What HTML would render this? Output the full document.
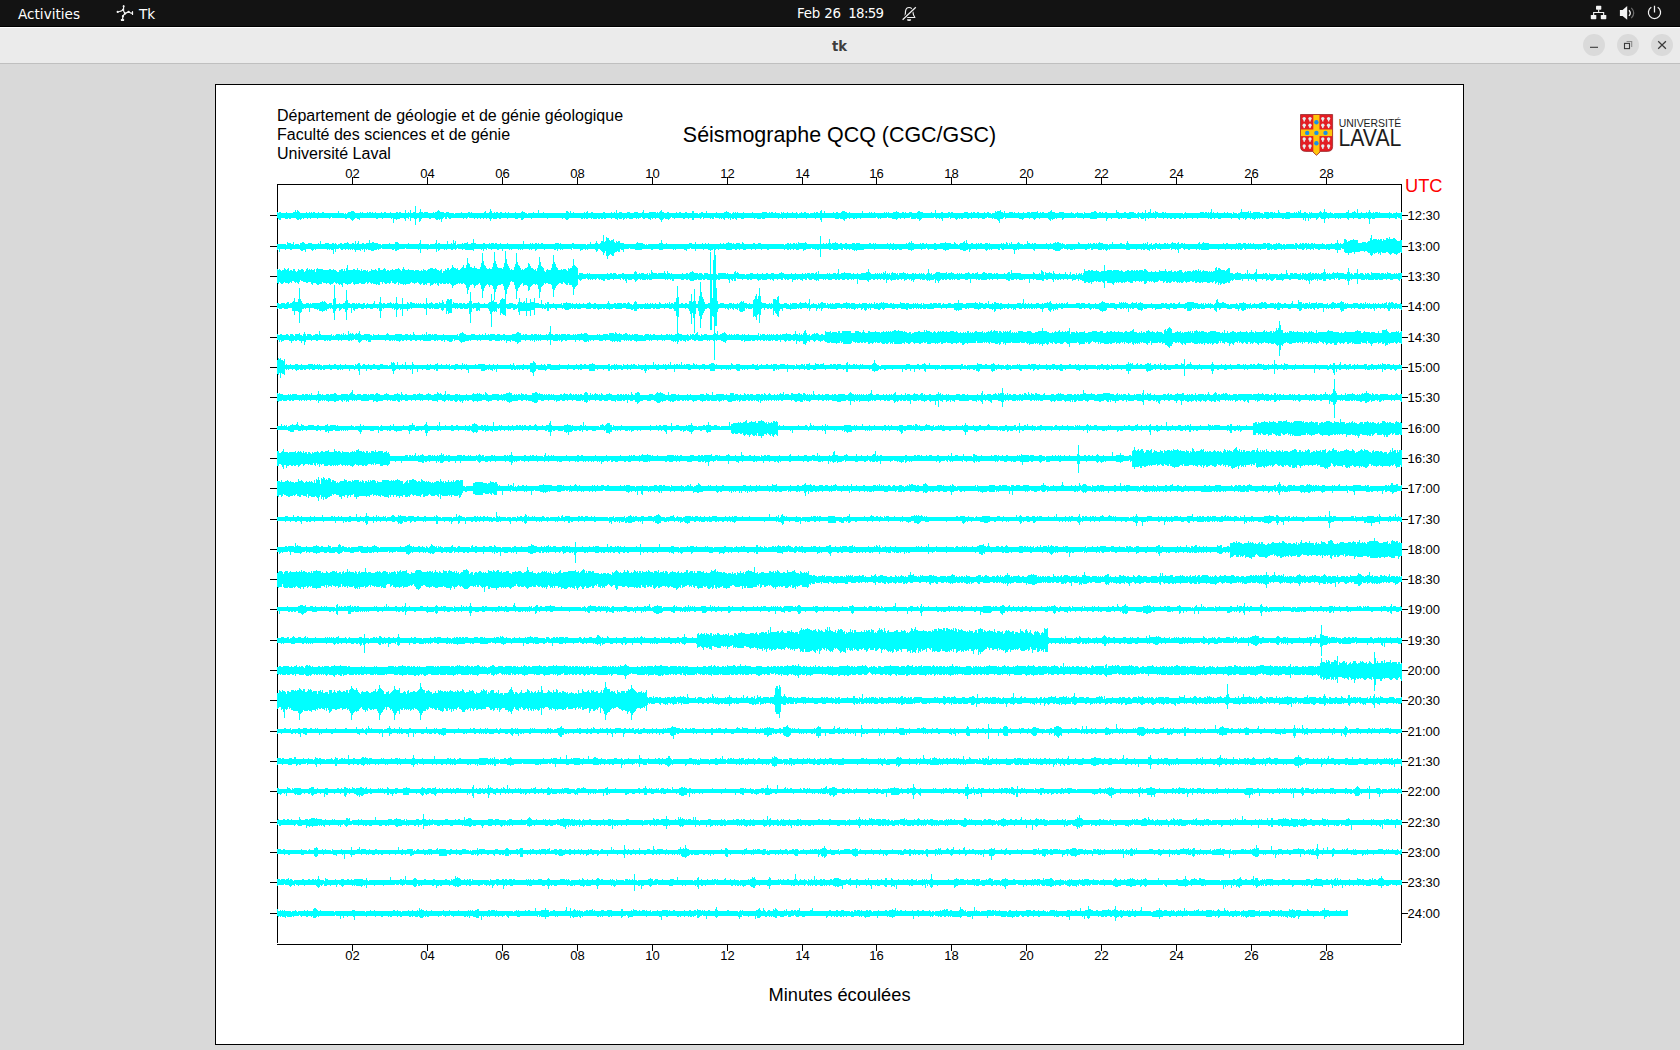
<!DOCTYPE html>
<html lang="fr">
<head>
<meta charset="utf-8">
<title>tk</title>
<style>
html,body{margin:0;padding:0;}
body{width:1680px;height:1050px;overflow:hidden;background:#d9d9d9;position:relative;font-family:"Liberation Sans",sans-serif;}
#topbar{position:absolute;left:0;top:0;width:1680px;height:26px;border-bottom:1px solid #000;background:#131313;color:#fff;font-family:"DejaVu Sans","Liberation Sans",sans-serif;font-size:13.6px;}
#topbar span{position:absolute;top:0;line-height:27px;white-space:pre;}
#titlebar{position:absolute;left:0;top:27px;width:1680px;height:35px;background:#ebebeb;border-top:1px solid #fff;border-bottom:1px solid #bfbfbf;}
#titlebar .t{position:absolute;left:0;width:1679px;top:1px;line-height:36px;text-align:center;font-family:"DejaVu Sans","Liberation Sans",sans-serif;font-weight:bold;font-size:13.2px;color:#3d3d3d;}
.wb{position:absolute;top:6px;width:22px;height:22px;border-radius:11px;background:#dadada;}
#canvas{position:absolute;left:215px;top:84px;width:1247px;height:959px;border:1px solid #000;background:#fff;}
#plot{position:absolute;left:0;top:0;width:1680px;height:1050px;}
.hd{position:absolute;left:277px;font-size:16px;line-height:19px;color:#000;white-space:pre;}
</style>
</head>
<body>
<div id="topbar">
<span style="left:18px;top:1px">Activities</span>
<span style="left:139px;top:1px">Tk</span>
<span style="left:797px;top:-0.5px;font-size:13.4px;letter-spacing:-0.19px">Feb 26</span><span style="left:848.2px;top:-0.5px;font-size:13.4px;letter-spacing:-0.66px">18:59</span>
</div>
<div id="titlebar"><div class="t">tk</div>
<div class="wb" style="left:1583px"></div><div class="wb" style="left:1617px"></div><div class="wb" style="left:1651px"></div>
</div>
<div id="canvas"></div>
<div class="hd" style="top:106px">Département de géologie et de génie géologique</div>
<div class="hd" style="top:125px">Faculté des sciences et de génie</div>
<div class="hd" style="top:144px">Université Laval</div>
<svg id="plot" width="1680" height="1050" viewBox="0 0 1680 1050">
<g fill="none" stroke="#000" stroke-width="1" shape-rendering="crispEdges">
<path d="M277.5 184V943M277 184.5H1402M1401.5 184V943M277 944.5H1401"/>
<path d="M352.5 177V185M352.5 944V951"/>
<path d="M427.5 177V185M427.5 944V951"/>
<path d="M502.5 177V185M502.5 944V951"/>
<path d="M577.5 177V185M577.5 944V951"/>
<path d="M652.5 177V185M652.5 944V951"/>
<path d="M727.5 177V185M727.5 944V951"/>
<path d="M802.5 177V185M802.5 944V951"/>
<path d="M876.5 177V185M876.5 944V951"/>
<path d="M951.5 177V185M951.5 944V951"/>
<path d="M1026.5 177V185M1026.5 944V951"/>
<path d="M1101.5 177V185M1101.5 944V951"/>
<path d="M1176.5 177V185M1176.5 944V951"/>
<path d="M1251.5 177V185M1251.5 944V951"/>
<path d="M1326.5 177V185M1326.5 944V951"/>
<path d="M270 215.5H277M1402 215.5H1408"/>
<path d="M270 246.5H277M1402 246.5H1408"/>
<path d="M270 276.5H277M1402 276.5H1408"/>
<path d="M270 306.5H277M1402 306.5H1408"/>
<path d="M270 337.5H277M1402 337.5H1408"/>
<path d="M270 367.5H277M1402 367.5H1408"/>
<path d="M270 397.5H277M1402 397.5H1408"/>
<path d="M270 428.5H277M1402 428.5H1408"/>
<path d="M270 458.5H277M1402 458.5H1408"/>
<path d="M270 488.5H277M1402 488.5H1408"/>
<path d="M270 519.5H277M1402 519.5H1408"/>
<path d="M270 549.5H277M1402 549.5H1408"/>
<path d="M270 579.5H277M1402 579.5H1408"/>
<path d="M270 609.5H277M1402 609.5H1408"/>
<path d="M270 640.5H277M1402 640.5H1408"/>
<path d="M270 670.5H277M1402 670.5H1408"/>
<path d="M270 700.5H277M1402 700.5H1408"/>
<path d="M270 731.5H277M1402 731.5H1408"/>
<path d="M270 761.5H277M1402 761.5H1408"/>
<path d="M270 791.5H277M1402 791.5H1408"/>
<path d="M270 822.5H277M1402 822.5H1408"/>
<path d="M270 852.5H277M1402 852.5H1408"/>
<path d="M270 882.5H277M1402 882.5H1408"/>
<path d="M270 913.5H277M1402 913.5H1408"/>
</g>
<g fill="#00ffff" shape-rendering="crispEdges">
<path d="M277 215v-3h1v1h1v-1h2v1h5v-1h1v1h6v-1h2v-2h1v2h1v-2h1v1h1v1h1v1h6v-1h1v1h2v-1h1v1h1v-1h1v1h1v-1h2v1h3v-1h1v1h3v-1h2v1h14v-2h1v2h5v1h1v-1h1v1h1v-1h1v-1h3v-1h3v1h1v1h5v-1h1v1h1v-1h1v1h4v-1h1v1h1v-1h2v1h1v-1h1v1h2v-1h1v1h5v-1h1v1h2v-1h2v1h4v-1h1v1h5v-1h2v1h1v-1h2v1h4v-3h1v3h2v-1h1v1h1v-3h1v3h2v-1h2v-6h1v7h3v-1h1v-3h1v3h2v1h1v-1h4v1h5v-1h1v1h1v-1h2v-1h1v-1h1v1h1v1h4v1h2v-1h3v1h5v1h1v-1h6v-1h1v1h6v-1h2v1h1v-1h1v1h12v-1h1v-1h1v2h3v-1h1v-3h1v2h1v2h2v-1h1v1h1v-1h2v1h2v-1h2v1h3v-1h1v1h2v-1h1v1h6v-1h1v1h5v-1h1v-1h1v1h2v1h2v1h1v-1h5v-1h1v1h4v-3h1v3h4v-1h1v1h22v-2h2v1h1v1h1v-2h1v2h2v-1h1v1h10v-1h1v1h1v-1h1v-1h1v2h3v-1h2v1h10v-1h2v1h6v-1h1v1h2v-1h1v1h1v-3h1v3h2v-1h3v1h5v-1h3v1h4v-1h4v1h4v-1h1v-2h1v3h5v-1h7v1h1v-1h1v1h1v-1h1v-1h1v-1h1v2h2v1h3v-1h2v1h7v-1h1v1h2v-1h2v1h4v-1h2v1h5v-2h2v2h4v1h1v-1h2v-1h2v1h3v-2h1v2h9v-1h1v1h7v-1h2v-1h1v1h2v1h2v1h1v-1h1v-1h1v1h1v-1h1v1h1v-1h1v1h5v-1h1v1h8v-1h1v1h9v-1h5v1h2v-1h1v1h1v-1h2v1h2v-1h1v1h4v1h1v-2h1v1h1v-1h1v1h3v-1h1v1h4v-1h1v1h3v-1h1v1h1v1h1v-1h2v-1h1v1h2v-1h2v1h3v1h1v-1h4v-1h1v1h1v-1h2v1h2v-2h1v-1h1v3h2v-2h1v2h8v-1h1v1h2v-1h2v1h3v-1h1v-1h3v1h2v1h2v-1h1v1h12v-2h1v2h6v-1h1v1h1v-1h1v1h2v-1h1v1h9v-1h1v1h1v-1h1v1h1v-1h1v1h4v-1h3v-1h1v1h2v1h3v-1h2v1h1v-1h1v1h3v-1h3v1h5v-1h1v-1h2v1h3v1h8v-1h1v1h3v-3h1v3h5v-1h2v1h5v-1h2v1h1v-1h2v1h11v-1h4v1h3v-1h1v1h1v-1h2v1h2v-1h2v1h5v-1h1v1h2v-1h2v1h2v1h1v-1h3v-2h1v1h1v-1h3v-1h1v2h2v1h1v-2h1v2h4v-1h4v1h1v-1h1v1h3v-1h1v1h4v-1h1v1h3v-1h3v1h1v-1h6v-1h1v2h2v-1h1v1h1v-1h2v1h4v-1h2v-1h1v-1h1v2h3v1h4v-1h5v1h7v-1h1v1h2v1h1v-1h2v-1h1v1h5v1h1v-2h1v1h6v-1h3v-1h2v1h1v1h2v-1h2v1h1v-1h1v1h2v-1h2v1h9v-3h1v2h2v1h5v-1h2v1h3v-1h5v1h2v1h1v-1h1v-1h1v1h3v-1h1v1h2v-3h1v3h2v-1h2v-3h1v4h2v-1h1v1h1v-2h1v1h2v1h4v-1h2v1h1v-1h1v1h17v1h1v-1h1v-1h1v1h14v-1h4v1h1v-1h2v1h1v-1h1v1h1v-1h1v-3h1v4h1v-1h1v1h3v-1h1v1h6v-1h1v1h2v-1h1v1h4v1h1v-2h1v1h3v1h1v-1h2v-1h1v-3h1v3h6v-1h1v2h1v-2h1v2h2v-1h7v1h3v1h1v-2h5v1h1v-1h3v1h1v-1h1v1h3v-3h1v2h1v1h6v-1h4v1h4v-1h1v1h1v-1h1v1h1v-2h1v1h1v-2h1v3h3v-1h2v1h2v1h1v-2h1v1h1v-1h1v1h7v-1h1v-1h1v1h1v1h1v-1h1v-3h1v3h2v1h3v-1h1v1h2v1h1v-1h12v-1h2v-2h1v3h3v-1h2v-1h1v1h1v1h1v-4h1v4h3v-1h1v1h4v-1h1v1h1v-1h1v-2h1v2h1v1h2v-1h1v1h1v-1h3v1h1v-1h1v1h9v-1h1v1h2v1h1v-1h3v-1h1v1h4v-1h1v8h-1v-1h-1v-1h-2v-1h-1v2h-2v-1h-5v1h-1v-1h-14v1h-3v-1h-1v1h-1v5h-1v-5h-1v-1h-3v1h-1v-1h-3v1h-3v-1h-4v1h-1v-1h-4v2h-1v-1h-1v-1h-6v1h-1v-1h-1v1h-1v-1h-2v1h-1v-1h-6v1h-1v-1h-2v1h-1v4h-1v-4h-3v-1h-1v-1h-1v1h-1v1h-1v1h-1v-2h-5v1h-1v-1h-1v3h-1v-3h-2v3h-1v-3h-1v2h-1v-2h-13v1h-5v-1h-1v1h-2v-1h-9v1h-1v-1h-3v1h-3v-1h-3v1h-1v-1h-2v1h-1v-1h-1v1h-1v-1h-1v1h-1v1h-1v-1h-2v-1h-1v1h-1v-1h-3v1h-1v1h-1v-2h-1v1h-1v-1h-3v2h-1v-1h-1v-1h-6v1h-1v-1h-10v1h-3v-1h-3v1h-1v-1h-2v1h-2v-1h-1v1h-1v-1h-10v1h-1v-1h-4v1h-1v-1h-5v1h-1v-1h-2v1h-1v-1h-2v1h-2v-1h-3v1h-2v-1h-2v1h-2v-1h-2v1h-1v-1h-3v1h-1v-1h-5v-1h-1v1h-1v1h-1v-1h-6v1h-1v-1h-2v3h-1v-3h-1v1h-3v-1h-1v-1h-1v2h-1v-1h-7v1h-4v-1h-5v1h-1v-1h-1v1h-2v-1h-6v1h-1v-1h-3v1h-1v2h-1v-3h-9v1h-7v-1h-6v1h-1v-1h-6v-1h-1v1h-12v1h-1v1h-1v-2h-5v1h-1v-1h-1v1h-2v1h-1v-1h-1v2h-1v-1h-1v-1h-1v-1h-8v1h-1v-1h-3v1h-1v1h-1v-1h-1v-1h-3v1h-1v-1h-5v1h-1v1h-1v-1h-3v-1h-13v1h-1v-2h-1v1h-1v1h-3v4h-1v-2h-1v-1h-1v-1h-3v-1h-1v1h-1v-1h-4v-1h-1v1h-2v1h-3v-1h-3v1h-1v-1h-6v1h-1v-1h-2v1h-2v-1h-4v1h-2v-1h-1v1h-1v-1h-1v1h-1v1h-1v-1h-1v-1h-4v1h-1v-2h-1v1h-6v3h-1v-2h-1v-1h-1v1h-1v-1h-2v1h-1v-1h-1v-1h-1v1h-12v1h-1v1h-1v1h-1v-2h-2v-1h-1v1h-5v-2h-1v1h-5v1h-1v-1h-3v1h-1v-1h-2v1h-1v1h-1v-1h-4v-1h-4v-1h-1v1h-6v1h-1v-1h-1v1h-1v-1h-1v-1h-1v1h-15v1h-1v-1h-3v1h-1v-1h-1v1h-2v-1h-3v1h-1v-1h-2v1h-2v2h-1v-1h-1v-1h-3v-1h-1v1h-4v-1h-13v4h-1v-2h-1v-2h-4v1h-1v-1h-8v1h-1v-1h-9v1h-1v-1h-9v1h-1v-1h-3v1h-1v-1h-3v1h-1v-1h-13v1h-3v-1h-1v1h-4v-1h-2v1h-1v-1h-10v1h-3v-1h-4v2h-1v-1h-1v-1h-1v1h-2v-1h-1v2h-1v-2h-1v1h-1v-1h-3v2h-1v-1h-1v-1h-1v1h-1v-1h-1v1h-1v-1h-4v-1h-1v2h-2v-1h-1v1h-1v-1h-6v1h-1v-2h-1v1h-1v1h-1v-1h-6v2h-2v-2h-3v1h-1v-1h-3v1h-2v-1h-8v1h-1v-1h-2v-1h-1v1h-1v1h-1v1h-1v-1h-3v-1h-1v1h-1v1h-1v2h-1v-2h-1v-1h-1v-1h-3v1h-1v-1h-2v1h-1v-1h-1v2h-1v-1h-2v-1h-3v1h-2v-1h-1v-1h-1v1h-2v1h-1v-1h-1v1h-1v-1h-3v1h-4v-1h-2v1h-1v-1h-1v1h-1v1h-1v-2h-1v1h-3v-1h-1v2h-1v-1h-2v-1h-3v1h-1v-1h-5v1h-2v-1h-1v1h-2v-1h-1v1h-2v-1h-1v1h-4v-1h-1v1h-1v-1h-3v1h-2v-1h-1v1h-1v-1h-1v1h-2v-1h-12v1h-1v1h-2v-1h-1v-1h-2v1h-1v-1h-14v1h-1v-1h-15v1h-1v-1h-7v1h-1v1h-2v-2h-3v1h-3v-1h-7v1h-1v-1h-6v1h-2v-1h-2v1h-4v-1h-1v1h-1v2h-1v-2h-1v-1h-2v1h-1v-1h-2v1h-1v-1h-2v1h-1v-1h-2v1h-1v-1h-2v1h-1v-1h-5v-1h-1v1h-1v1h-1v-1h-2v1h-1v-1h-12v1h-2v-1h-1v-1h-1v2h-2v-2h-1v1h-1v1h-1v3h-1v-3h-1v1h-1v-1h-1v1h-2v-1h-1v-1h-4v1h-2v-1h-7v1h-1v2h-1v1h-1v-4h-2v1h-1v6h-1v-6h-1v-1h-3v3h-1v-4h-1v2h-1v-1h-2v3h-1v-2h-1v-1h-4v1h-3v1h-1v-1h-2v4h-1v-5h-1v1h-1v-1h-8v1h-1v-1h-4v1h-2v-1h-16v2h-1v-1h-2v-1h-2v1h-1v1h-1v1h-1v-1h-1v-1h-1v-1h-3v1h-2v-1h-13v-1h-1v1h-1v1h-1v-1h-11v1h-1v-1h-6v1h-1v-1h-2v1h-1v-1h-3v1h-1v-1h-1v1h-1v1h-1v-1h-1v1h-2v-1h-1v-1h-5v1h-2v-1h-1v1h-3v-1h-4v2h-2v-1h-1v-1h-1z"/>
<path d="M277 246v-2h9v1h1v-3h1v1h3v1h2v-2h1v3h1v-1h4v1h1v-2h2v-1h2v1h1v1h3v-1h4v1h6v-1h1v1h1v-3h1v3h4v-1h4v1h3v-1h2v1h1v-1h1v1h1v1h1v-1h2v-1h2v1h2v-1h3v-1h1v1h1v1h3v-1h2v1h1v-3h1v3h1v-1h1v-2h1v3h3v-1h2v1h2v-1h3v-3h1v3h2v-1h2v1h4v1h3v1h1v-1h7v-1h1v1h5v-2h3v1h1v1h9v-1h1v1h10v-1h1v-3h1v4h8v1h1v-1h5v-1h1v-3h1v4h1v-1h2v1h7v-3h1v3h3v-1h1v1h1v-4h1v3h1v-2h1v4h1v-1h5v-1h1v1h1v-1h3v-1h1v2h3v-1h2v-4h1v4h2v1h7v-1h2v1h4v-1h1v1h1v-1h3v1h1v-1h2v1h3v-1h1v1h6v-1h1v1h15v-3h1v3h6v-1h1v1h1v-1h1v1h2v-1h2v1h1v-1h1v1h2v-1h2v1h12v-1h4v1h1v-1h1v1h11v-1h2v1h12v1h1v-1h3v-2h1v2h4v-1h1v-2h1v2h1v1h2v-1h1v-2h2v-6h1v7h1v-1h1v-4h1v1h2v2h1v1h1v-1h2v-1h1v3h1v1h1v-2h1v1h1v-1h2v2h4v1h12v-1h1v-1h1v1h5v1h2v1h1v-1h1v1h1v-1h11v-1h2v-3h1v3h1v1h3v-1h1v1h22v-1h3v1h3v-2h1v2h6v-1h1v1h2v-1h1v1h2v-1h1v1h11v-1h1v1h2v-1h1v1h2v-1h2v-1h1v1h3v1h1v-1h1v1h2v-1h4v1h2v-2h1v1h1v1h9v-1h2v1h3v-1h3v1h23v1h1v-1h2v-1h2v1h1v-1h1v1h2v-1h2v1h1v-1h1v1h1v-2h1v1h6v-1h1v1h1v1h13v-8h1v8h2v-1h1v1h2v-1h1v1h1v-1h1v-4h1v4h1v1h1v-1h3v-1h1v1h2v1h2v-1h2v1h3v-1h2v1h5v-1h3v1h1v-1h4v1h9v-1h2v1h2v-1h1v1h1v-1h1v1h11v-1h1v1h2v-1h1v1h2v-1h1v1h12v-1h1v1h1v-1h1v-1h1v1h1v-2h1v2h2v1h6v-1h1v1h1v-1h2v1h2v-1h1v1h7v-1h2v1h4v-1h5v-1h1v1h5v1h3v-2h1v1h1v1h2v1h1v-1h1v-1h3v-1h1v-1h1v2h1v-3h1v3h1v1h3v-1h2v1h3v-1h1v1h1v-1h1v1h1v-1h2v1h3v-1h3v1h1v-1h1v1h11v-1h1v1h1v-1h1v1h2v-2h1v1h1v2h1v-2h1v1h1v-2h1v2h5v-1h1v-1h1v1h1v1h3v1h1v-1h3v-3h1v2h2v1h2v-1h1v1h1v-1h2v1h10v-1h1v1h3v-1h1v1h2v-1h2v-1h1v1h1v-1h2v1h2v1h1v-1h1v1h2v1h1v-1h12v-2h1v1h1v1h8v-1h1v1h1v-1h1v1h2v-1h2v1h1v-1h1v1h1v-1h1v-1h1v1h3v1h5v1h1v-1h3v-2h1v2h7v-1h2v1h3v1h1v-2h1v-2h1v2h1v1h14v-1h1v1h1v-1h1v1h1v-2h1v3h1v-1h2v-1h1v2h1v-1h2v-1h2v1h2v-1h1v1h4v-1h2v1h1v-1h1v1h3v-1h1v-1h1v1h3v1h1v-1h1v-1h1v2h2v-1h2v1h1v-1h1v1h13v-1h1v-1h1v2h2v-1h1v-1h1v1h5v1h14v-1h1v1h2v-1h2v1h8v-1h1v1h1v-1h3v1h2v-1h3v1h2v-1h1v1h1v-1h1v1h2v-1h1v1h9v-1h3v1h1v-1h3v1h2v1h1v-1h3v-1h1v1h1v-1h2v1h2v1h1v-1h2v1h1v-1h8v1h1v-2h2v1h1v1h1v-1h1v-1h1v1h1v-1h2v1h1v-1h2v1h1v-1h1v1h2v-1h2v1h1v-1h1v1h7v-1h1v1h2v1h1v-1h5v-1h1v1h3v-1h2v-3h1v3h1v1h1v-1h1v1h2v-1h1v-4h2v1h1v2h1v-1h2v-1h3v-1h1v1h4v3h4v-1h4v1h1v-1h1v-1h2v-3h1v-3h1v5h1v-1h4v1h1v-1h1v1h1v-1h2v2h1v-2h1v1h2v-2h2v1h1v-2h1v2h3v-1h2v1h1v1h1v1h3v-1h2v13h-1v-1h-1v1h-2v1h-1v1h-1v-1h-2v-1h-2v1h-1v1h-1v-1h-1v-1h-1v-1h-2v1h-4v-1h-1v3h-1v-2h-1v1h-1v-2h-1v1h-2v1h-1v-1h-1v2h-1v1h-1v-1h-1v-2h-2v-1h-1v-1h-2v1h-1v-1h-4v1h-5v2h-1v-2h-2v1h-3v2h-1v-2h-3v-1h-1v-3h-2v-1h-1v2h-3v3h-1v-3h-2v-1h-5v1h-2v-1h-1v1h-1v-1h-6v1h-2v-1h-3v-1h-1v2h-1v-1h-2v1h-1v-1h-3v1h-1v-2h-1v1h-1v1h-2v-1h-4v-1h-1v2h-1v-1h-11v1h-1v-1h-2v1h-1v-1h-4v1h-3v-1h-2v1h-1v-1h-1v1h-3v-2h-1v1h-5v1h-1v-1h-1v1h-1v-1h-2v1h-1v-1h-9v1h-1v-1h-1v-1h-1v1h-1v1h-2v-1h-1v1h-1v-1h-2v1h-1v-1h-3v1h-1v-1h-5v1h-1v-1h-6v1h-1v-1h-9v1h-8v-1h-1v1h-1v-1h-2v1h-1v-1h-6v1h-2v-1h-3v1h-1v-1h-1v-1h-2v1h-2v4h-1v-3h-1v-1h-1v1h-1v-1h-3v1h-1v-2h-1v1h-9v1h-1v-1h-3v-1h-1v2h-1v-1h-2v1h-1v-1h-2v2h-1v-1h-2v-1h-2v1h-2v-1h-1v1h-1v-1h-4v1h-1v-1h-6v1h-4v-1h-16v1h-1v-1h-1v1h-1v1h-1v-1h-1v-1h-1v1h-1v-1h-1v1h-4v-1h-5v1h-2v-2h-1v1h-3v1h-2v-1h-10v1h-1v-1h-1v1h-3v-1h-2v1h-1v-1h-3v-1h-1v1h-2v1h-1v1h-5v-1h-2v-1h-4v1h-1v-1h-13v2h-1v-1h-1v-1h-14v1h-1v-1h-1v1h-2v4h-1v-4h-1v-1h-9v1h-2v-1h-1v-1h-1v2h-2v-1h-6v1h-1v-1h-1v1h-1v-1h-1v1h-1v1h-1v-1h-1v-1h-8v1h-1v-1h-5v1h-1v2h-1v-3h-1v1h-2v1h-3v-1h-3v-1h-11v1h-3v1h-1v-1h-2v-1h-6v1h-3v-1h-5v1h-1v-1h-1v-1h-1v1h-4v1h-1v-1h-7v1h-2v1h-1v-1h-3v-1h-6v1h-3v-1h-2v1h-2v-1h-1v1h-2v-1h-2v1h-1v-1h-14v1h-1v-1h-10v1h-7v1h-1v-1h-1v1h-1v-1h-2v-1h-2v1h-1v-1h-2v1h-1v-1h-2v-1h-1v2h-2v-1h-3v1h-5v-1h-2v1h-2v-1h-8v8h-1v-8h-1v1h-2v-1h-1v1h-1v-1h-3v-1h-1v1h-5v1h-2v1h-1v-2h-4v1h-3v-1h-2v1h-1v-1h-2v1h-1v-1h-1v1h-2v-1h-2v1h-1v-1h-15v1h-2v-1h-5v1h-1v-1h-5v1h-1v-1h-3v1h-1v-1h-5v1h-3v-1h-3v1h-1v-1h-2v1h-2v-1h-3v1h-6v-1h-7v1h-1v-1h-2v1h-2v-1h-1v1h-2v1h-1v-1h-2v-1h-4v1h-1v-1h-7v2h-1v-2h-4v-1h-1v1h-3v2h-1v-1h-2v-1h-8v1h-1v-1h-1v1h-1v-1h-10v1h-4v-1h-6v1h-2v-1h-9v1h-7v-1h-5v-1h-1v1h-5v3h-1v-2h-2v-1h-1v3h-2v-1h-1v1h-2v1h-1v3h-2v-1h-1v-1h-1v1h-1v1h-1v3h-1v-3h-1v-5h-1v2h-1v2h-1v-3h-1v-1h-1v-1h-1v-1h-2v2h-1v1h-1v-2h-1v-1h-7v1h-1v-1h-1v1h-1v-1h-2v1h-2v1h-1v-2h-7v-1h-1v2h-1v-1h-8v1h-1v-1h-1v1h-1v-1h-2v2h-1v-2h-1v1h-2v-1h-9v1h-1v-1h-7v1h-1v1h-1v-2h-3v1h-1v-1h-1v1h-1v-1h-6v1h-1v-1h-1v1h-1v-1h-1v1h-1v-1h-6v1h-1v-1h-1v1h-1v-1h-6v2h-1v-2h-3v1h-2v-1h-5v1h-1v-1h-3v-1h-1v2h-1v-1h-2v2h-1v-2h-1v1h-1v-1h-7v2h-1v-1h-8v-1h-2v1h-1v-1h-4v-1h-1v1h-1v1h-1v-1h-2v1h-2v-1h-4v1h-1v-1h-1v1h-1v-1h-4v1h-1v1h-1v-2h-1v3h-1v-3h-8v1h-1v-1h-6v4h-1v-4h-1v1h-1v-1h-12v-1h-1v1h-6v1h-2v1h-2v-2h-1v1h-2v-1h-10v-1h-1v1h-2v1h-1v-1h-1v1h-3v1h-3v-1h-3v-1h-1v1h-1v-1h-1v3h-1v-3h-1v1h-1v-1h-1v2h-1v-1h-4v2h-1v-2h-1v-1h-1v1h-1v-1h-1v1h-1v-1h-1v1h-1v-1h-2v1h-1v-1h-2v1h-2v-1h-1v-1h-1v1h-3v3h-1v-3h-1v5h-1v-4h-2v-1h-1v1h-1v-1h-1v1h-1v-1h-11v1h-1v-1h-1v1h-1v1h-1v-1h-1v-1h-5v3h-1v-2h-2v1h-2v-1h-1v-1h-8v1h-2v-1h-4v1h-1v-1h-5v3h-1v-3h-1v1h-1z"/>
<path d="M277 276v-7h1v1h1v-1h1v1h1v1h1v-1h2v-2h1v1h1v1h1v-1h1v-1h1v3h1v-1h2v1h1v-2h2v2h1v1h1v-1h1v-2h1v1h2v-1h2v1h1v2h1v-1h1v-2h1v-1h1v2h1v-1h1v1h1v-1h1v1h2v-1h1v3h1v-3h1v-1h1v1h5v1h6v-1h2v1h2v-1h1v1h2v1h1v1h2v-2h2v-1h2v2h1v-2h1v2h1v-3h1v-3h1v5h5v-1h2v1h2v-2h1v2h2v1h1v-2h1v2h1v-1h3v1h1v-1h1v2h1v-1h2v-2h1v1h3v-1h1v1h1v1h1v-3h2v2h3v-1h1v-1h1v1h1v2h1v-1h2v1h1v-1h2v-1h1v1h2v-1h3v-1h1v1h1v1h1v1h1v-2h1v-2h1v2h1v1h3v-1h1v1h5v1h1v-1h4v1h2v-1h1v1h1v-2h1v1h2v1h1v-1h1v-1h2v-1h3v1h2v-1h1v1h1v1h2v1h1v-1h1v-1h1v4h1v-2h2v-2h1v1h1v-2h2v2h1v-1h1v-1h1v-3h1v2h1v1h2v1h1v-1h1v2h2v-1h1v-1h1v-1h1v-2h1v3h2v-3h1v-7h1v5h1v1h1v3h2v1h2v-2h1v2h2v1h3v-2h1v-4h1v-10h1v8h1v4h1v1h1v2h1v1h2v-1h1v1h2v-2h1v-4h1v-11h1v9h1v3h1v3h1v1h4v1h1v-2h1v-4h1v-12h1v8h1v5h1v2h1v2h1v2h1v-1h1v1h2v-3h1v-3h1v-11h1v9h1v3h1v1h1v2h1v2h1v-1h1v1h1v-1h1v-1h2v-1h1v-4h1v1h1v2h1v2h2v1h1v1h1v-1h1v2h1v-3h1v-3h1v-8h1v5h1v4h1v1h1v1h1v3h1v1h1v-2h1v-1h1v1h3v-2h1v-4h1v-9h1v7h1v2h1v3h1v1h1v2h3v-1h1v1h1v-1h3v1h1v1h1v-3h1v1h1v-1h2v-2h1v-7h1v6h1v1h1v1h1v1h1v7h1v-2h4v1h4v-1h1v1h1v-1h1v1h17v-1h1v1h2v-1h2v1h1v-1h3v1h1v1h1v-1h4v-1h2v1h10v-2h1v-1h1v1h1v2h2v-1h1v1h1v-1h3v1h3v-1h1v2h1v-2h1v1h1v-4h1v2h1v1h4v1h1v-1h6v-2h1v2h1v1h1v-3h1v2h2v1h1v-1h1v1h10v-1h1v1h3v-1h2v1h1v-1h1v-1h2v-1h1v1h1v1h4v1h1v-1h3v1h1v1h1v-2h4v1h9v1h1v-2h8v1h1v-1h1v1h6v-2h1v-1h1v2h1v-1h1v1h1v1h6v1h1v-1h4v-1h3v1h4v-1h1v1h4v-1h1v1h3v-1h2v1h3v-1h3v1h5v-1h2v-1h1v1h2v1h7v-1h1v1h3v-1h1v1h6v-1h1v1h2v-1h1v1h1v-1h3v1h1v-1h3v1h1v-1h1v-1h1v2h1v-3h1v3h8v-1h1v1h1v-1h1v1h3v-1h3v1h1v-1h1v-4h1v5h2v-1h3v-1h1v1h6v1h2v-1h1v1h3v-1h1v1h3v-1h5v-1h2v-3h1v3h1v1h1v1h4v-1h1v1h1v-1h1v1h1v-1h1v1h1v-1h1v1h1v-2h1v1h1v-2h1v3h1v-1h1v1h1v-1h1v2h1v-2h1v-1h1v1h3v1h1v-1h1v2h1v-2h4v-1h1v1h2v1h1v-1h1v1h4v-1h2v1h1v-1h1v1h3v-1h1v1h1v-1h1v1h1v-1h1v1h1v1h1v-1h1v-1h1v-4h1v4h1v1h1v-1h1v2h1v-1h2v-1h1v-1h4v1h6v-1h1v2h1v-1h3v-1h1v1h2v1h3v-1h1v1h1v-1h1v1h1v-1h1v1h3v-1h3v-1h1v1h1v1h2v-1h2v1h1v-1h2v-1h1v2h4v-1h1v-1h2v1h2v1h1v-1h4v1h2v-1h1v1h1v-1h2v1h6v-1h1v1h2v-1h1v-1h2v2h1v-4h1v3h9v1h12v-2h1v1h1v1h4v-1h1v1h1v-4h1v1h1v1h1v3h1v-3h1v1h3v-1h1v1h2v1h1v-3h1v2h1v1h4v-1h1v1h5v-2h1v2h2v1h1v-1h1v-2h1v3h1v-1h3v1h1v-2h1v2h1v-1h1v-1h1v1h1v-1h1v2h1v-2h1v-4h1v2h3v-1h2v1h1v-1h2v1h3v-1h1v1h2v1h2v-1h3v-6h1v6h2v-1h5v1h1v-1h6v1h2v-1h1v1h1v1h2v-1h2v-1h2v1h2v-1h2v1h1v-1h1v1h1v-1h2v1h1v-1h4v1h1v-2h2v1h1v1h1v1h3v-1h1v1h3v-1h1v1h3v-2h1v1h5v-2h1v2h1v1h1v-1h3v-1h1v2h2v-1h2v1h1v-1h2v-1h3v2h1v1h1v-1h1v-1h1v1h1v-1h4v1h1v-1h1v-1h1v1h1v-1h2v1h1v-2h1v2h1v-1h1v2h1v-1h1v-1h1v1h4v1h1v-1h1v1h1v-1h1v1h1v-1h2v-3h1v-1h1v3h1v-2h2v1h1v1h4v1h1v-1h1v-1h1v-1h2v5h3v1h2v-1h2v-1h1v1h3v1h4v-1h1v1h1v-4h1v4h1v-1h1v1h4v-1h1v-1h1v-3h1v5h6v-1h1v1h1v-1h2v1h1v1h1v-2h1v1h8v1h1v-1h2v-1h1v1h4v-4h1v3h1v2h2v-2h3v1h1v-1h3v1h3v-1h1v2h1v-2h2v1h1v-1h1v1h2v-1h2v-1h1v2h1v-1h2v1h1v-1h2v1h1v-1h1v1h2v-1h2v-1h1v-3h1v3h1v2h1v-1h1v1h1v-1h1v1h2v-1h1v-1h1v1h3v-1h1v1h6v1h3v-2h1v-4h1v4h1v2h1v-1h1v1h1v1h1v-2h3v-4h1v5h2v-1h3v1h1v1h1v-2h1v1h1v-1h2v1h1v1h1v-3h1v1h8v1h1v-1h3v1h1v-1h1v1h1v-2h1v1h3v1h3v-1h1v1h1v-1h1v1h1v-1h4v6h-2v2h-1v-1h-1v-1h-5v1h-3v-1h-3v1h-1v-1h-3v1h-4v-1h-1v1h-3v-1h-1v1h-6v-1h-1v1h-1v-1h-1v1h-4v-1h-3v5h-1v-5h-5v1h-1v-1h-1v2h-1v4h-1v-4h-1v-2h-1v1h-1v-1h-5v1h-2v-2h-1v1h-1v-1h-1v2h-1v-1h-3v1h-2v-1h-3v2h-3v-2h-1v1h-3v-1h-1v2h-1v-2h-1v1h-1v-1h-1v1h-2v1h-1v-1h-1v4h-1v-3h-1v-1h-1v1h-1v-1h-2v-1h-1v1h-1v-1h-1v1h-3v-1h-7v1h-2v-1h-5v1h-1v1h-1v-1h-6v-2h-1v1h-1v1h-1v1h-2v-1h-1v-1h-1v1h-2v1h-1v-2h-3v1h-1v-1h-5v3h-1v-1h-1v-2h-1v1h-1v-1h-1v1h-1v-1h-2v2h-1v-2h-5v2h-1v-2h-1v1h-6v-1h-1v1h-1v1h-1v-1h-1v1h-1v2h-2v-1h-1v1h-2v1h-2v-1h-1v1h-1v1h-1v-2h-1v2h-1v-3h-1v1h-1v1h-1v-3h-1v1h-1v1h-1v-1h-2v1h-3v-1h-4v1h-1v-1h-1v1h-2v-1h-2v1h-2v-2h-1v1h-2v-1h-2v1h-3v1h-1v-1h-1v-1h-1v1h-1v1h-2v-1h-1v1h-1v-1h-1v1h-1v-1h-1v-1h-1v1h-2v-1h-1v1h-1v1h-2v-1h-1v1h-2v-2h-1v1h-1v1h-1v-2h-3v-1h-1v1h-1v1h-3v1h-1v-1h-1v-1h-1v1h-1v-1h-1v1h-1v-1h-2v2h-1v1h-2v-3h-2v1h-1v-1h-1v1h-1v-1h-3v1h-1v-1h-2v2h-3v-1h-2v-1h-1v1h-2v1h-1v-1h-1v1h-2v-1h-2v1h-1v-1h-1v1h-1v-1h-1v1h-1v2h-1v-1h-1v-1h-5v-2h-2v7h-1v-5h-1v-1h-1v-1h-1v1h-3v-1h-1v1h-1v-1h-2v1h-2v2h-1v-2h-1v1h-2v-1h-2v1h-2v-2h-2v-1h-2v-1h-1v2h-1v-2h-2v1h-3v1h-1v-2h-4v1h-1v-1h-3v1h-1v-1h-2v1h-1v-1h-1v1h-2v-1h-1v1h-1v-1h-1v3h-1v-2h-1v-1h-4v1h-2v-1h-2v2h-2v-1h-6v-1h-2v1h-1v-1h-3v4h-1v-4h-4v1h-1v-1h-1v1h-4v-1h-2v1h-1v-1h-2v1h-3v-1h-1v2h-2v-1h-2v-1h-8v1h-1v-1h-4v1h-1v-1h-2v1h-1v-1h-2v1h-6v-1h-1v1h-2v-1h-1v1h-1v-1h-5v4h-1v-4h-2v1h-3v-1h-5v1h-3v-1h-2v1h-1v-1h-1v1h-1v-1h-1v1h-2v-1h-2v1h-2v-1h-1v1h-2v-1h-1v1h-1v1h-1v2h-1v-2h-1v-1h-1v3h-1v-4h-1v1h-4v1h-1v-1h-1v1h-1v-1h-1v-1h-1v1h-3v-1h-1v1h-1v-1h-5v1h-1v2h-1v-2h-1v1h-1v-2h-1v1h-1v-1h-2v1h-2v1h-1v-2h-2v1h-1v-1h-2v1h-2v-1h-1v1h-4v1h-1v-1h-1v-1h-1v1h-2v3h-1v-4h-1v1h-2v-1h-2v1h-1v-1h-2v1h-1v-1h-2v1h-2v-1h-2v1h-2v2h-1v-1h-1v-1h-8v-1h-1v5h-1v-5h-3v1h-1v-1h-1v1h-1v-1h-2v1h-2v-1h-2v1h-3v-1h-2v1h-2v-1h-1v1h-2v-1h-3v1h-4v-1h-2v1h-1v-1h-1v1h-1v-1h-4v2h-1v-1h-1v1h-1v-1h-2v-1h-2v1h-3v-1h-1v-1h-1v2h-2v-1h-2v2h-1v-1h-2v-1h-2v1h-1v-1h-1v1h-3v2h-1v-3h-3v1h-2v-1h-1v1h-1v-1h-1v-1h-1v2h-2v-1h-3v1h-1v-1h-3v2h-1v-1h-1v-1h-1v1h-1v-1h-3v1h-5v-1h-1v1h-2v1h-1v-1h-1v-1h-5v1h-2v-1h-1v1h-2v-1h-4v1h-1v-1h-5v-1h-1v3h-2v-2h-1v2h-1v-1h-1v-1h-1v4h-1v-3h-1v-1h-8v1h-2v-1h-1v1h-1v-1h-3v1h-6v-1h-2v1h-2v-1h-1v1h-4v-1h-1v1h-3v1h-4v-1h-1v-1h-1v1h-2v-1h-2v1h-3v-1h-7v2h-2v-2h-1v1h-1v-1h-2v1h-1v-1h-1v1h-1v-1h-13v1h-3v-1h-1v1h-1v-1h-1v1h-4v-1h-1v1h-1v-1h-2v1h-1v1h-1v1h-1v-2h-1v-1h-2v1h-4v-1h-1v4h-1v-2h-1v-2h-1v1h-1v-1h-1v-1h-1v2h-1v-1h-6v1h-1v-1h-3v1h-3v-1h-2v2h-2v-1h-2v-1h-1v1h-1v-1h-1v-1h-1v1h-1v1h-1v-1h-2v1h-1v-1h-1v1h-1v-1h-1v1h-1v-1h-1v-1h-1v1h-4v1h-1v1h-1v-1h-1v-1h-1v6h-1v1h-1v1h-1v2h-1v6h-1v-8h-1v-2h-3v-2h-1v2h-2v-1h-1v-1h-1v-1h-1v2h-2v-1h-2v1h-1v1h-1v1h-1v2h-1v2h-1v7h-1v-8h-1v-4h-1v-1h-3v-1h-2v1h-1v-1h-1v2h-1v1h-1v1h-1v5h-1v6h-1v-9h-1v-4h-1v-1h-1v1h-1v-1h-2v1h-1v1h-1v1h-1v3h-1v1h-1v-5h-1v-1h-3v1h-1v-3h-1v1h-1v1h-1v2h-1v1h-1v3h-1v8h-1v-10h-1v-4h-1v-3h-2v-1h-1v1h-1v3h-1v2h-1v2h-1v5h-1v9h-1v-13h-1v-4h-1v-2h-2v1h-3v1h-1v3h-1v3h-1v8h-1v-11h-1v-3h-1v-1h-2v2h-1v-2h-1v-1h-1v1h-1v1h-1v2h-1v3h-1v7h-1v-9h-1v-4h-1v-2h-1v1h-1v1h-2v1h-1v2h-1v-3h-1v-1h-1v1h-2v2h-1v3h-1v4h-1v-6h-1v-3h-1v-1h-1v-1h-1v1h-2v-1h-1v1h-1v-1h-1v1h-2v1h-2v1h-1v2h-1v-3h-1v-1h-1v-1h-1v1h-2v-1h-1v1h-3v-1h-1v1h-2v-1h-1v3h-1v-1h-1v-2h-1v1h-1v-1h-1v1h-1v1h-2v1h-1v-3h-3v2h-1v-1h-1v1h-2v-2h-1v1h-1v1h-1v-1h-1v-1h-1v-1h-1v1h-2v1h-1v-1h-2v-1h-1v1h-1v1h-4v1h-1v-1h-1v1h-1v-1h-3v-1h-1v2h-1v-3h-1v1h-1v1h-2v-1h-2v-2h-1v2h-1v1h-1v-1h-2v1h-2v-1h-1v-1h-1v2h-1v-2h-2v3h-2v-1h-1v1h-1v-1h-3v-1h-1v1h-1v-1h-1v-1h-1v1h-1v1h-1v-2h-1v1h-1v1h-4v-1h-2v1h-4v1h-1v-1h-1v-2h-1v1h-1v1h-3v1h-1v-1h-2v-1h-2v4h-1v-2h-1v-1h-1v1h-1v-1h-1v-1h-1v1h-1v-1h-1v-1h-1v1h-1v1h-2v1h-1v-1h-1v-1h-2v1h-1v-1h-3v-1h-1v2h-3v1h-2v-1h-1v-1h-3v2h-1v-1h-1v-2h-3v1h-2v-1h-3v-1h-2v-1h-1v2h-1v2h-1v-1h-1v-1h-1v1h-1v-1h-1v-1h-2v2h-1v-1h-1v1h-1v1h-1v-1h-3v-1h-1v1h-1v1h-2v-1h-1v-1h-1v2h-1v-1h-1z"/>
<path d="M277 306v-3h2v1h2v-1h4v1h1v-1h1v-1h2v2h1v-1h2v-1h1v-1h1v-3h1v4h3v-3h1v-11h1v11h1v2h1v2h1v1h3v-1h3v1h1v-1h1v1h1v-1h8v-1h2v-1h1v1h1v-1h1v1h1v1h1v1h2v-1h3v2h1v-6h1v-14h1v13h1v6h3v-1h1v1h3v-1h2v-2h1v-11h1v10h1v3h2v1h2v-1h3v1h1v-1h1v1h1v-1h2v1h3v-1h2v2h1v-1h1v-1h1v1h5v-1h1v-2h1v3h4v-2h1v-5h1v6h1v1h1v-1h2v1h2v-1h3v-1h1v1h1v1h1v-1h1v1h1v-1h1v-6h1v6h1v1h4v-6h1v6h4v-2h1v1h1v1h1v-2h2v1h3v1h1v-1h1v1h1v-1h1v1h1v-1h1v1h2v-1h1v1h2v-6h1v5h1v1h1v-1h2v-1h1v1h1v1h2v-1h3v1h1v-2h1v1h2v-3h1v2h1v2h2v-3h1v-2h2v1h1v-1h2v5h1v-2h1v1h4v1h1v-1h3v1h1v-1h2v1h2v-1h2v-2h1v-9h1v9h1v3h1v-1h5v-1h1v1h1v1h4v-1h1v1h3v-1h1v-1h2v-8h1v7h1v-1h1v2h3v2h2v-1h1v-3h1v-1h1v-1h1v1h3v5h3v-1h4v1h3v1h1v-1h1v-2h1v-4h1v4h2v1h1v-1h1v-1h1v2h1v-5h1v5h3v-4h1v3h3v-4h1v5h4v1h2v-4h1v4h2v1h1v-2h1v1h1v-2h2v2h4v-1h1v1h7v-1h1v2h1v-2h3v-1h1v1h4v1h1v-1h1v1h3v-1h1v1h2v-1h1v1h3v-1h1v1h3v-1h2v-1h1v1h1v1h3v-1h2v1h11v-1h1v-2h1v2h1v1h4v-1h2v1h1v-1h5v1h1v-1h3v1h1v-1h1v-1h1v1h1v1h2v1h1v-1h1v-2h1v-1h1v1h1v2h8v-1h1v1h1v-1h1v1h2v-1h1v1h1v-1h1v1h2v-1h1v1h3v-2h1v1h1v1h4v-1h1v1h1v-1h1v1h1v-2h1v2h1v-1h2v1h1v-2h2v-4h1v-12h1v11h1v7h2v-1h2v1h2v-1h2v1h2v-3h2v-7h1v8h1v-1h1v-12h1v12h1v3h2v-3h1v-5h1v-14h1v10h1v5h1v2h1v3h1v2h3v-1h2v-51h1v27h1v19h1v-38h1v-10h1v5h1v33h1v13h1v3h2v-1h4v1h5v-1h3v1h1v-1h1v1h3v-1h1v1h1v-1h1v-1h1v-1h1v1h1v-1h1v2h3v1h2v-1h1v1h3v-4h1v-1h1v-3h1v-2h1v5h1v-3h1v-8h1v8h1v6h1v1h4v1h3v-1h1v1h1v-1h1v1h1v-5h3v1h1v-3h1v-1h1v7h1v1h4v-1h3v1h2v1h1v-2h1v1h1v-1h5v1h2v-1h1v-1h1v1h4v-1h1v1h1v1h1v-1h1v-4h1v6h1v-1h2v-1h1v1h3v1h1v-2h1v1h1v-1h1v-1h2v1h3v2h1v-2h1v1h2v-1h1v1h1v-1h1v1h2v-1h5v1h3v-1h3v-1h1v1h3v1h1v-1h4v1h4v-1h1v1h2v-1h5v1h2v-1h1v1h1v-1h1v1h2v-2h1v2h1v-1h2v1h1v-1h2v-1h1v1h1v-1h1v1h4v1h2v-1h2v1h1v-1h1v1h6v-2h1v1h4v1h1v-1h3v1h4v-1h1v1h1v-1h1v1h1v-1h1v1h3v-1h1v2h1v-2h1v1h6v-1h2v1h1v-1h4v1h1v-1h3v2h1v-1h1v-1h1v1h4v-1h3v1h3v-1h4v-3h1v3h4v1h3v-1h9v-1h1v1h2v1h1v-2h1v1h3v1h2v-1h2v1h1v-3h1v3h3v-1h1v1h1v-2h2v1h3v1h1v-1h2v1h6v-1h1v1h8v-1h4v1h1v-1h1v-4h1v5h1v-1h1v1h2v-1h1v1h2v-1h1v1h4v-1h3v1h3v-1h1v1h1v-1h3v-1h1v1h1v-1h1v-1h1v2h1v1h4v-1h1v1h2v-1h1v1h1v-1h2v1h1v-1h1v1h1v-1h1v-1h1v2h8v-1h4v1h1v-1h4v1h3v-1h2v1h5v-1h1v1h3v-1h2v-1h1v-1h1v1h2v1h4v1h1v-1h5v1h4v-2h1v1h1v-1h1v1h1v-1h1v1h1v-1h1v1h2v1h3v-1h1v-1h1v1h3v-1h1v2h1v-1h2v-1h1v1h2v1h8v-1h1v1h9v-1h3v1h1v-1h2v1h3v-1h2v1h1v-1h2v1h3v-1h1v-1h1v2h5v-1h2v-1h7v1h4v1h3v-1h1v1h1v-1h1v2h1v-2h1v1h2v-1h1v1h1v-1h1v1h2v1h1v-1h1v-1h1v-3h1v-1h1v3h1v1h3v-1h2v1h2v1h3v1h1v-1h6v-1h1v1h1v1h1v-2h4v-1h1v1h2v1h4v-1h1v2h1v-1h2v-1h1v1h4v-1h2v-1h2v1h1v-1h2v1h1v1h3v-1h4v1h1v-1h1v1h1v-1h1v-1h1v1h2v1h3v-1h2v1h5v-1h1v-2h1v3h5v-4h1v2h3v2h1v-1h1v1h1v-1h3v1h1v-2h1v2h1v-1h5v-1h1v2h1v-1h5v1h4v-1h1v2h1v-1h2v-1h1v-1h2v1h2v1h1v-1h3v-1h1v-1h1v1h2v2h1v-1h1v1h1v-1h1v1h5v-1h5v1h2v-1h2v1h1v-1h1v1h1v-2h1v2h1v-1h1v1h1v-1h1v1h3v-1h1v1h1v-1h1v1h2v-1h1v1h3v-1h1v1h1v-1h2v-1h1v3h1v-2h1v-1h1v1h1v-1h2v1h1v1h1v-1h2v1h3v-1h1v1h1v6h-1v-1h-2v-1h-1v1h-1v-1h-1v1h-2v-1h-1v1h-1v-1h-1v1h-1v2h-2v-2h-1v-1h-2v1h-1v-1h-3v1h-1v-1h-3v1h-1v-1h-1v3h-1v-2h-1v-1h-1v1h-2v-1h-1v1h-1v-1h-3v1h-3v-1h-1v1h-3v-1h-3v1h-1v-1h-2v1h-1v-1h-4v1h-3v2h-2v1h-1v-2h-1v-2h-5v1h-1v-1h-1v1h-2v-1h-2v1h-1v-1h-1v1h-1v-1h-2v4h-1v-4h-4v1h-2v-1h-2v2h-1v-1h-1v-1h-1v1h-2v-1h-1v1h-1v-1h-1v1h-3v-1h-2v2h-1v1h-2v-2h-2v-1h-6v1h-3v-1h-5v1h-1v-1h-2v2h-3v-2h-1v1h-2v-1h-7v1h-2v-1h-3v1h-3v-1h-2v1h-1v-1h-4v1h-1v-1h-1v1h-1v-1h-1v1h-1v-1h-1v2h-2v1h-2v-1h-1v-2h-1v1h-1v2h-1v-2h-3v-1h-3v1h-5v-1h-6v1h-1v1h-1v-2h-2v4h-1v-1h-1v-1h-1v-2h-3v1h-1v-1h-5v1h-4v-1h-1v1h-3v-1h-1v1h-1v-1h-1v1h-1v-1h-1v2h-1v1h-4v-3h-1v1h-2v-1h-7v1h-4v-1h-3v2h-1v-1h-3v-1h-4v1h-6v1h-1v-2h-2v1h-1v-1h-5v1h-3v-1h-1v2h-1v1h-1v-1h-3v-1h-1v-1h-3v1h-2v-1h-1v1h-1v-1h-1v4h-1v-4h-1v1h-1v-1h-2v1h-1v-1h-1v1h-2v-1h-3v2h-1v-1h-2v-1h-7v2h-1v1h-3v1h-1v-1h-2v-1h-1v-1h-4v-1h-1v1h-1v-1h-1v1h-1v1h-1v-1h-1v-1h-4v1h-1v-1h-2v1h-3v-1h-16v1h-2v-1h-3v2h-1v-1h-1v1h-1v-1h-1v2h-1v-2h-1v1h-1v2h-1v-1h-1v-1h-1v-2h-4v1h-1v3h-1v-3h-2v-1h-3v1h-1v-1h-1v1h-1v-1h-1v1h-2v-1h-1v1h-1v-1h-1v1h-1v-1h-1v1h-2v-1h-2v1h-3v-1h-3v2h-1v-1h-1v1h-1v-2h-1v1h-1v-1h-2v1h-2v-1h-2v1h-1v-1h-1v1h-2v1h-1v-1h-4v2h-1v1h-1v-3h-1v1h-1v-1h-3v-1h-3v1h-3v-1h-2v1h-2v1h-1v-1h-4v-1h-5v1h-1v-1h-1v1h-2v-1h-3v2h-3v1h-1v-1h-1v1h-1v-1h-2v-2h-7v1h-1v-1h-4v1h-1v-1h-7v1h-7v-1h-1v1h-3v-1h-1v1h-2v-1h-1v1h-1v-1h-1v1h-1v-1h-2v1h-1v-1h-1v1h-3v-1h-1v2h-2v-1h-5v-1h-3v1h-1v-1h-2v1h-3v-1h-7v1h-1v1h-1v-1h-1v-1h-1v1h-1v1h-2v-1h-4v-1h-3v2h-1v-2h-1v1h-1v-1h-1v2h-1v1h-1v-1h-1v-2h-1v1h-1v1h-1v-2h-3v1h-1v-1h-1v1h-1v1h-1v-1h-3v-1h-1v1h-1v-1h-1v1h-2v-1h-4v1h-1v-1h-4v1h-7v-1h-1v1h-1v-1h-5v1h-1v2h-1v-3h-1v1h-1v-1h-1v1h-1v2h-1v-3h-5v1h-1v2h-1v-3h-1v1h-1v-1h-5v1h-2v-1h-1v1h-1v-1h-1v1h-6v1h-1v-1h-4v-1h-3v3h-1v-2h-2v2h-1v6h-1v-1h-1v-2h-1v-1h-1v-2h-1v4h-1v-7h-1v1h-2v-1h-1v1h-2v-1h-2v2h-1v-2h-2v1h-1v6h-1v8h-1v-9h-1v1h-1v5h-1v-3h-1v-1h-1v1h-1v-9h-1v1h-4v-1h-1v1h-1v-1h-1v3h-2v1h-3v-1h-1v-3h-1v2h-1v-1h-2v-1h-1v2h-1v-1h-1v-1h-1v1h-1v-1h-1v2h-1v-1h-1v-1h-1v1h-1v-1h-6v1h-1v3h-1v14h-2v34h-1v-43h-1v-1h-1v14h-2v-21h-1v-1h-2v1h-2v2h-1v2h-1v2h-1v4h-1v9h-1v-12h-1v-5h-1v-3h-2v6h-1v19h-1v-15h-1v-5h-1v11h-1v-10h-1v-3h-1v-2h-1v-1h-2v1h-1v-1h-6v9h-1v17h-1v-18h-1v-5h-2v-2h-1v-1h-1v1h-3v-1h-4v1h-1v-1h-4v1h-4v-1h-1v1h-2v-1h-2v1h-7v-1h-1v1h-3v-1h-1v1h-2v2h-3v-2h-1v1h-2v-1h-5v-1h-4v1h-7v-1h-2v1h-3v1h-1v-1h-3v-1h-1v1h-2v-1h-1v1h-3v1h-1v-1h-1v-1h-1v1h-3v-1h-2v1h-5v-1h-5v1h-4v-1h-1v1h-2v-1h-1v1h-1v-1h-1v1h-2v1h-4v-1h-1v-1h-1v1h-1v-1h-5v2h-1v-1h-1v-1h-4v1h-1v-1h-1v3h-2v-3h-1v1h-2v-1h-1v1h-1v-1h-7v7h-1v-5h-3v6h-1v-5h-3v5h-1v-5h-6v4h-1v-3h-1v-4h-1v1h-2v1h-2v-2h-2v1h-4v-1h-1v8h-1v-1h-2v-1h-1v-1h-1v2h-1v-7h-1v1h-1v-1h-1v4h-1v-1h-1v1h-1v-1h-1v1h-1v15h-1v-13h-1v-3h-1v-2h-1v-1h-8v3h-1v-1h-1v1h-2v-3h-2v1h-1v-1h-1v4h-1v11h-1v-9h-1v-6h-1v1h-4v-1h-1v1h-3v-1h-2v1h-1v-1h-1v1h-1v-1h-3v5h-3v1h-1v-3h-1v3h-1v-6h-2v2h-1v1h-1v-1h-1v-2h-2v1h-5v-1h-1v1h-1v-1h-1v1h-2v-1h-2v7h-1v-6h-2v-1h-12v1h-1v-1h-1v1h-2v2h-1v-2h-4v7h-1v-7h-1v1h-1v-2h-1v1h-1v1h-1v7h-1v-8h-1v1h-1v-2h-1v1h-1v-1h-8v1h-1v-1h-1v3h-1v7h-1v-7h-1v-3h-1v1h-1v-1h-4v1h-3v-1h-3v1h-1v-1h-2v1h-3v-1h-3v1h-3v2h-1v-1h-1v-2h-1v5h-1v-5h-3v2h-1v10h-1v-8h-1v-3h-2v-1h-1v1h-1v1h-1v1h-1v-3h-2v1h-1v2h-1v9h-1v-7h-1v-4h-1v-1h-1v1h-1v-1h-1v1h-2v2h-1v-1h-1v1h-2v1h-1v-1h-3v-2h-1v1h-1v-1h-3v-1h-4v4h-1v-4h-3v1h-1v-1h-1v1h-2v3h-1v1h-1v10h-1v-11h-1v-1h-3v4h-1v-4h-2v-3h-4v1h-4v-1h-2v1h-3v-1h-1v1h-1z"/>
<path d="M277 337v-3h1v1h2v-1h2v1h4v-1h2v1h1v1h1v-2h3v1h1v1h1v-2h4v-1h1v2h2v1h1v-2h1v-2h1v2h1v2h1v-2h4v1h1v1h1v-1h2v-1h3v1h1v-4h1v3h1v1h10v-1h1v2h1v-1h1v1h1v-1h1v-1h4v1h1v-1h1v1h1v-2h1v2h1v-1h1v1h2v-4h1v3h1v-1h1v1h1v-1h1v1h1v1h1v-1h1v-1h1v1h1v-1h1v-2h1v3h1v1h3v-1h6v1h2v1h1v-2h1v1h4v-1h1v1h7v-1h1v-1h1v1h1v1h6v-1h7v1h3v-1h3v1h2v-1h1v1h2v-3h1v2h1v1h7v-1h1v1h1v-1h1v1h1v-3h1v3h1v-1h3v1h1v-1h1v1h1v-1h3v1h6v-1h1v1h13v-1h1v2h1v-2h1v-1h2v-1h1v1h1v1h2v1h5v-1h4v1h4v-1h1v1h2v-1h1v1h2v-2h1v2h2v-1h1v1h1v-1h5v1h2v-1h3v1h3v-1h2v1h7v-1h4v-1h1v-1h2v1h2v2h2v-1h1v1h1v-1h2v1h4v-1h2v1h1v-1h3v1h1v-1h1v1h1v-1h1v1h5v-1h1v1h1v-1h1v-2h1v-6h1v8h2v1h2v-1h3v1h1v-1h1v1h1v-1h5v1h1v-1h3v1h3v-1h1v1h1v-1h1v1h1v-1h4v-1h1v1h2v-1h3v1h1v1h9v-1h1v1h1v-1h1v1h3v-1h5v1h1v-2h5v1h1v-2h1v1h1v1h2v-1h1v1h2v1h1v-1h2v-1h2v1h1v1h1v-1h1v1h2v-1h1v1h1v-1h4v1h5v1h1v-1h1v-1h4v1h1v-1h1v1h2v-1h2v1h6v-1h1v1h4v-1h2v1h1v-1h1v1h1v-1h1v1h3v-1h2v-2h1v1h1v1h3v1h5v-1h1v1h1v1h1v-2h1v1h1v-1h2v1h1v-1h1v-1h1v-1h1v3h2v1h1v-2h1v1h2v-1h3v1h6v-1h2v-1h1v1h1v-3h1v4h2v-1h2v-1h2v-1h1v1h1v1h1v1h2v-1h1v1h1v-1h1v1h2v-1h1v1h1v-1h3v1h3v-1h1v1h1v-1h1v1h3v-1h1v1h9v-2h1v3h1v-2h1v1h1v-1h3v1h2v-1h1v1h1v-1h1v1h1v-1h1v1h1v-1h1v1h2v-1h2v1h2v-1h1v1h1v-1h4v-1h1v1h4v1h2v-1h2v-3h1v3h2v1h1v-2h1v2h1v-1h1v1h1v-2h1v-2h1v-1h1v3h1v2h2v-1h1v2h1v-1h1v-1h2v-1h1v1h1v-1h2v1h1v1h2v-1h2v1h2v-4h1v1h4v-1h1v2h1v-1h5v1h1v-2h2v2h2v-2h9v2h4v-2h4v1h2v1h1v-1h1v-2h1v2h1v1h3v-2h2v1h5v-1h1v1h4v1h1v-1h2v-1h1v1h2v-1h1v1h1v-1h1v1h1v-1h1v1h1v-1h2v-1h2v1h2v-1h1v1h4v1h1v-1h1v1h2v1h2v-1h2v2h1v-1h2v-1h4v-1h2v1h4v-2h1v2h1v-2h1v1h3v1h2v1h1v-1h1v-1h1v1h1v1h1v-1h1v-1h1v1h1v-1h1v1h1v-1h2v1h2v-1h1v1h3v-1h4v1h2v-1h1v1h1v1h2v-1h1v1h2v-1h1v1h1v-1h1v1h1v-2h2v2h1v-1h1v1h1v-1h1v1h1v-1h1v-1h2v1h5v-1h1v2h1v-1h1v1h1v-1h2v-1h1v1h1v-1h1v-1h1v2h1v-1h1v-1h1v1h3v2h1v-2h2v1h1v1h1v-2h1v1h1v-1h1v1h1v-1h1v1h1v-1h1v-1h1v3h1v-1h1v1h1v-1h1v1h1v-1h1v1h1v-2h5v1h4v-1h4v1h1v1h3v-1h3v-1h4v-3h1v3h4v1h2v1h3v-1h1v1h1v-1h1v-1h1v1h2v-1h1v-1h1v2h2v-1h1v1h2v-1h1v1h1v-1h2v-3h1v6h1v-2h4v1h1v-2h1v1h1v1h1v-1h5v-1h1v2h3v-1h4v-1h5v1h3v-1h3v2h3v-1h1v-1h1v1h2v-1h2v1h2v-1h1v1h3v-1h1v1h4v1h1v-1h1v-1h2v1h3v-1h2v-1h1v-1h1v3h3v1h2v-1h1v1h1v-2h1v2h1v-1h2v1h1v-2h2v-1h1v1h1v1h2v-1h1v1h2v1h1v-1h1v-1h1v1h4v1h1v1h1v-4h1v-1h1v2h1v-2h1v-1h1v-1h1v1h1v1h1v4h3v-1h2v-1h1v1h2v-1h1v2h1v-1h1v1h1v-1h4v-1h1v1h1v-1h1v2h1v-2h1v2h1v-2h2v-1h1v1h1v1h1v-1h1v1h1v-1h3v1h3v1h1v-1h2v-1h6v1h4v1h2v-1h1v1h1v-3h1v3h2v-2h1v2h2v-1h2v-1h2v1h2v1h1v-1h3v-1h1v1h5v-1h1v1h1v1h1v-1h2v-2h1v2h2v1h1v-2h1v1h7v-1h1v-1h1v2h1v-1h1v1h3v-1h2v2h1v-2h1v1h1v-1h1v-3h1v2h1v-2h1v-7h1v4h1v5h2v3h2v-1h1v1h1v-1h1v1h1v-2h3v1h1v-1h1v1h3v-1h1v1h5v1h1v-2h1v1h2v1h1v-1h1v-1h1v1h1v-1h1v1h2v1h2v-3h1v3h1v-1h9v-1h1v-1h1v1h4v1h6v1h2v-1h1v1h2v-1h1v-1h1v1h9v-1h2v-1h1v1h3v2h2v-1h1v-1h1v1h5v1h1v-1h4v1h3v-2h1v2h3v-3h4v-1h1v2h1v1h1v1h2v-1h5v-1h1v1h1v-1h1v2h1v-1h1v-1h1v13h-1v-1h-2v-1h-1v1h-1v1h-1v-1h-1v-1h-1v1h-4v1h-1v-1h-1v2h-2v1h-1v-3h-1v1h-2v-2h-1v1h-2v1h-1v-2h-1v1h-4v1h-1v2h-1v-2h-1v-1h-2v-2h-1v3h-1v-1h-4v-1h-1v2h-7v-1h-1v1h-1v-2h-1v1h-2v1h-2v-2h-2v1h-1v1h-1v-1h-2v1h-1v-1h-1v-1h-1v1h-1v2h-3v-2h-2v1h-2v-1h-2v1h-1v1h-1v-2h-1v-1h-1v2h-1v-1h-1v-1h-2v-1h-1v2h-2v1h-1v-1h-3v-1h-1v2h-1v-2h-1v1h-1v1h-1v-2h-3v1h-1v-1h-1v2h-1v-2h-1v1h-1v-1h-1v1h-2v-1h-1v1h-4v1h-3v-1h-2v-1h-1v1h-2v1h-1v2h-1v-1h-1v5h-1v6h-1v-11h-1v1h-1v-1h-1v-1h-1v-1h-1v1h-3v-1h-2v1h-1v-1h-3v-1h-1v1h-2v1h-1v-1h-2v2h-1v-1h-1v-1h-2v-1h-1v1h-1v1h-1v-1h-1v1h-1v-2h-2v2h-2v-1h-1v-1h-1v1h-1v1h-1v-1h-1v-1h-1v1h-1v-2h-1v2h-1v-1h-2v1h-1v2h-1v-1h-1v-1h-1v1h-1v2h-1v-3h-2v-1h-2v2h-1v-1h-2v-2h-1v2h-1v-2h-1v2h-1v1h-2v-1h-2v1h-1v1h-1v-2h-1v1h-1v-1h-1v1h-2v-1h-2v2h-1v-2h-1v1h-2v-1h-1v1h-1v-1h-1v1h-4v-1h-2v-1h-1v1h-5v2h-1v-1h-1v-1h-1v2h-1v-1h-1v-1h-1v-1h-1v1h-1v-1h-1v1h-2v-1h-2v2h-1v2h-2v2h-1v-1h-1v-1h-1v-1h-2v-2h-2v1h-1v-2h-1v1h-2v-1h-1v1h-6v2h-1v-4h-1v2h-2v2h-1v-1h-1v-1h-3v-1h-1v1h-1v-1h-1v2h-1v-1h-1v1h-1v-1h-1v1h-1v-1h-1v2h-1v-1h-1v-2h-1v1h-2v1h-1v-1h-2v-1h-1v2h-1v-2h-1v1h-1v-1h-1v1h-1v1h-1v-1h-2v1h-1v-2h-1v1h-3v1h-2v-1h-1v1h-5v-1h-3v1h-1v-2h-1v2h-1v-2h-2v1h-1v-1h-2v-1h-1v1h-1v1h-1v1h-2v-2h-1v1h-1v-1h-1v2h-5v1h-1v-2h-1v-1h-1v1h-7v4h-1v-3h-2v-1h-1v-1h-2v1h-1v1h-3v-1h-3v1h-2v-1h-1v-1h-1v2h-1v-1h-2v-1h-1v2h-1v1h-1v-1h-1v-1h-1v1h-2v2h-1v-2h-2v1h-1v-2h-1v1h-1v-1h-1v1h-1v-1h-1v1h-4v1h-1v-2h-1v1h-1v-1h-1v-1h-1v1h-4v-1h-1v1h-8v-1h-1v1h-5v2h-1v-2h-1v1h-1v-2h-2v2h-1v1h-1v-2h-1v1h-3v-1h-4v-1h-1v2h-1v-1h-1v-1h-1v1h-1v-1h-1v1h-1v-1h-1v1h-6v-2h-1v2h-8v1h-1v-1h-2v1h-1v1h-2v-2h-2v-1h-1v1h-2v1h-1v-1h-3v1h-2v-1h-4v-1h-1v1h-3v1h-2v-2h-1v1h-2v1h-1v-1h-1v1h-1v-1h-4v1h-4v-2h-1v1h-2v-1h-1v1h-2v1h-2v-1h-4v1h-1v-1h-1v-1h-2v1h-1v1h-2v-1h-2v-1h-1v2h-1v-1h-2v1h-8v-2h-1v2h-1v-1h-1v1h-1v-2h-1v1h-1v1h-2v-1h-1v1h-3v-1h-1v-1h-1v1h-3v-1h-1v1h-1v-1h-1v1h-1v1h-1v-1h-2v1h-2v-2h-2v1h-2v-1h-1v1h-2v-1h-1v1h-3v-1h-1v1h-1v-1h-2v-1h-1v2h-1v1h-8v-2h-1v1h-1v-2h-1v2h-3v1h-1v-1h-5v-1h-1v1h-3v-1h-2v-1h-1v-1h-1v1h-2v1h-1v-1h-2v-1h-2v1h-1v1h-1v-1h-1v-1h-3v2h-1v-1h-2v2h-1v2h-1v-1h-2v-3h-3v1h-1v-1h-2v3h-1v-4h-1v1h-2v-1h-2v1h-3v-1h-1v1h-1v1h-1v-1h-1v-1h-3v2h-1v-2h-2v1h-3v-1h-2v1h-1v-1h-1v1h-3v-1h-1v1h-1v-1h-1v1h-2v-1h-2v1h-1v-1h-2v1h-1v-1h-2v1h-3v-1h-1v1h-6v1h-1v-2h-1v1h-2v-1h-14v1h-1v2h-1v-1h-2v-1h-2v-1h-4v1h-1v-1h-1v1h-2v-1h-3v1h-1v-1h-1v1h-1v-1h-4v1h-5v-1h-2v1h-2v-1h-2v-1h-1v1h-2v1h-2v-1h-1v2h-1v-1h-2v-1h-1v1h-2v-1h-1v2h-1v2h-1v-3h-1v1h-1v-1h-1v1h-1v-1h-2v-1h-6v1h-1v-1h-1v1h-1v-1h-4v1h-1v-1h-5v1h-1v-1h-1v1h-1v-1h-3v1h-9v1h-1v-1h-2v-1h-2v1h-2v-1h-1v1h-1v-1h-1v1h-1v-1h-1v1h-1v-1h-3v2h-2v-1h-1v1h-1v-1h-2v1h-1v-1h-1v1h-1v-1h-2v-1h-4v1h-1v-1h-2v1h-4v-1h-5v1h-1v-1h-2v1h-1v-1h-1v2h-1v-1h-1v1h-3v-1h-1v-1h-3v1h-1v-1h-3v2h-1v-2h-8v1h-2v-1h-2v1h-1v1h-1v-2h-1v1h-1v-1h-1v1h-5v-1h-2v5h-1v-5h-2v1h-1v-1h-6v1h-1v-1h-1v1h-1v-1h-1v1h-1v-1h-1v2h-1v-2h-1v1h-1v-1h-1v1h-1v-1h-4v1h-1v-1h-4v2h-2v1h-1v1h-1v-2h-2v-1h-3v-1h-1v2h-1v-1h-3v2h-1v-3h-1v1h-1v-1h-2v1h-1v-1h-1v1h-5v-1h-3v1h-3v-1h-8v1h-1v-1h-2v1h-1v-1h-6v1h-1v-1h-1v1h-4v1h-3v1h-1v-1h-1v-1h-1v-1h-4v1h-1v-2h-1v2h-1v1h-3v-1h-2v-1h-2v2h-1v-2h-1v1h-2v-1h-3v1h-1v-1h-1v1h-2v-1h-3v1h-8v-1h-2v1h-1v-1h-3v1h-2v-1h-3v1h-2v-1h-3v1h-1v-1h-2v1h-2v-1h-1v1h-1v1h-1v-1h-3v-1h-1v1h-1v-1h-1v1h-1v-1h-1v1h-2v-1h-3v1h-1v-1h-14v2h-3v-2h-1v1h-1v-1h-4v1h-1v1h-1v1h-1v-1h-1v-2h-3v-1h-1v1h-2v1h-1v-1h-1v1h-2v-1h-6v1h-1v-1h-2v1h-1v-1h-7v1h-2v-1h-1v1h-1v-1h-1v1h-2v-1h-6v1h-2v-1h-4v1h-1v-1h-5v2h-1v3h-1v-4h-2v2h-1v-2h-2v-1h-2v1h-2v-1h-1v1h-2v2h-1v-2h-2v-1h-5v1h-2v1h-1v-2h-1v2h-1v-2h-2z"/>
<path d="M277 367v-7h1v-2h1v1h1v-1h1v2h2v1h1v-2h1v6h1v-1h1v1h3v-1h1v1h4v-1h3v1h3v-1h1v1h6v-1h5v1h1v-1h1v1h2v-1h1v1h1v-1h1v1h2v1h1v-1h6v-1h1v1h4v-1h2v1h4v-1h1v1h4v-1h1v1h8v1h1v-2h1v1h1v-1h1v-1h2v2h1v1h1v-1h1v-1h2v1h3v-1h1v1h4v-1h2v1h5v-1h3v1h5v1h1v-1h2v-3h1v1h1v-1h1v1h1v2h2v-3h1v3h4v-1h1v1h2v-3h1v3h6v-3h1v2h1v1h13v-1h1v1h2v-1h1v1h4v-1h2v-1h1v2h3v-1h1v1h4v-1h1v1h2v-1h1v2h1v-1h4v-1h3v1h4v-2h1v2h1v-1h1v1h1v-1h1v1h8v-1h1v1h2v-1h7v1h4v-1h1v1h3v-1h1v1h3v-1h1v1h12v-1h1v1h2v-2h1v2h1v1h1v-1h7v-1h1v1h6v-2h3v-2h1v1h1v1h1v2h5v-1h1v1h2v-1h1v1h1v1h1v-2h4v1h8v-1h1v1h8v-1h1v1h7v-1h1v1h3v-1h2v1h2v-1h2v1h3v-1h3v-1h1v1h2v1h13v-1h2v2h1v-1h3v-1h1v1h1v-1h1v1h5v1h1v-2h1v1h3v-1h1v1h3v-1h1v1h1v-1h2v1h2v1h1v-2h1v1h6v-1h1v1h7v-3h1v3h1v-1h1v1h2v-1h1v1h4v-1h1v1h1v-1h1v1h2v-1h1v1h1v-3h1v3h3v-1h1v1h1v-1h2v1h1v-1h1v1h1v-3h1v3h2v-1h1v1h1v-1h4v1h3v-2h1v1h1v1h1v-1h1v1h5v-1h3v1h4v-1h2v-1h3v1h1v1h1v-1h1v1h14v-2h1v1h1v1h3v-1h4v1h12v-1h2v1h3v-1h1v2h1v-1h2v-1h1v1h4v-1h2v1h3v-1h1v1h1v-1h4v1h3v-1h5v1h2v-1h1v1h7v1h1v-2h1v1h4v-1h2v1h1v-1h1v2h1v-2h3v-1h1v2h5v-2h1v1h3v1h1v-1h3v-1h1v2h6v-1h2v1h1v-1h3v1h1v-1h4v1h5v-2h1v-1h1v3h1v-1h1v1h3v-1h2v1h1v-1h1v1h3v-1h1v1h1v-1h1v1h9v-1h1v-1h1v-3h1v3h1v1h1v1h2v1h2v-1h25v-1h4v1h7v-1h2v1h3v-1h2v-1h1v1h1v1h3v-2h1v2h10v1h1v-1h20v-1h2v2h1v-1h2v1h1v-1h10v-2h1v1h4v1h3v-1h2v1h4v-1h2v-1h1v1h1v1h3v-1h1v1h5v1h1v-1h2v-1h1v1h3v1h1v-1h5v-1h1v1h1v-1h1v1h8v-1h2v1h1v-1h5v1h3v-1h1v1h6v-1h1v1h5v-1h3v1h5v-1h2v1h7v-1h2v1h4v-1h1v1h2v-1h1v1h6v-1h1v1h10v1h1v-1h4v-1h2v1h4v-1h1v1h2v1h1v-2h1v1h5v-1h1v1h8v-1h2v-2h1v2h1v-1h1v1h1v-1h1v2h3v-1h1v-1h1v2h2v-1h2v1h3v-1h2v-1h2v1h1v-1h1v2h3v-1h2v1h2v-1h1v1h1v-2h1v2h3v-1h2v1h9v-1h3v1h3v-2h1v1h2v-5h1v7h1v-1h1v-1h3v-2h1v2h1v1h7v-1h1v1h11v-1h1v-2h1v2h1v1h7v-1h1v1h3v-1h1v1h4v-1h1v1h6v-1h3v1h3v-1h1v1h1v-1h1v1h4v-1h2v1h1v-1h2v1h2v-1h1v-1h1v1h3v1h1v-1h1v1h4v-1h1v1h3v-1h1v1h1v-5h1v4h2v1h4v-1h1v1h2v-2h1v1h3v1h7v-1h1v1h7v-1h1v1h11v-1h1v1h12v1h1v-1h1v-1h1v1h2v-2h2v2h4v-1h1v-2h1v3h3v-1h2v1h3v-1h2v2h1v-1h2v-1h1v1h2v-1h1v1h6v-1h3v2h1v-1h3v-1h2v1h5v-1h1v1h1v-1h1v1h1v-2h1v1h3v1h1v-1h3v1h3v-1h1v1h5v-1h1v1h2v5h-1v-1h-4v1h-1v1h-1v-1h-1v-1h-2v1h-2v-1h-4v1h-2v-1h-1v3h-1v-3h-5v1h-1v-1h-2v1h-1v-1h-1v1h-1v-1h-1v1h-3v-1h-1v1h-1v-1h-10v1h-1v-1h-5v1h-1v-1h-1v1h-1v-1h-5v1h-2v-1h-2v3h-1v-3h-1v6h-1v-2h-1v-3h-1v-1h-3v1h-2v-1h-7v1h-1v-1h-4v4h-1v-4h-19v1h-1v-1h-1v1h-1v-1h-5v1h-1v-1h-1v1h-2v-1h-5v1h-1v-1h-2v5h-1v-5h-5v1h-1v-1h-1v1h-4v-1h-15v1h-1v-1h-2v1h-1v-1h-12v1h-1v-1h-4v1h-3v-1h-5v1h-2v-1h-3v2h-1v3h-1v-3h-1v-2h-9v1h-1v-1h-3v1h-1v-1h-2v1h-1v-1h-9v7h-1v-7h-13v1h-3v-1h-1v1h-3v-1h-2v1h-2v-1h-4v1h-1v-1h-2v1h-2v1h-3v1h-1v-1h-1v-2h-15v2h-2v3h-1v-3h-2v-2h-4v1h-1v-1h-7v1h-1v-1h-4v1h-3v-1h-2v1h-1v-1h-3v1h-1v-1h-1v1h-1v-1h-9v1h-2v-1h-1v1h-1v-1h-3v1h-1v1h-1v-1h-3v-1h-10v1h-1v-1h-2v2h-3v-1h-1v-1h-1v1h-2v-1h-2v1h-1v-1h-2v1h-2v-1h-1v1h-2v-1h-7v1h-2v-1h-2v1h-1v1h-1v-2h-2v1h-1v-1h-8v2h-2v-1h-1v-1h-8v1h-1v-1h-1v1h-3v-1h-4v1h-1v-1h-4v1h-1v-1h-1v2h-2v1h-1v-1h-1v-2h-11v2h-1v1h-1v-1h-2v-2h-1v1h-2v-1h-3v1h-1v-1h-1v1h-1v-1h-6v1h-1v-1h-7v1h-2v-1h-5v1h-1v-1h-7v1h-1v-1h-1v1h-1v-1h-9v3h-1v-1h-1v-2h-4v1h-1v-1h-4v3h-1v-3h-3v2h-1v-2h-3v1h-2v-1h-2v3h-1v-3h-9v1h-1v-1h-6v1h-2v-1h-3v1h-1v-1h-1v1h-1v1h-3v1h-1v-1h-2v-2h-2v1h-1v-1h-9v1h-1v-1h-11v3h-2v-3h-2v1h-1v-1h-5v1h-2v-1h-10v1h-1v-1h-9v1h-3v-1h-3v1h-3v-1h-2v1h-1v-1h-4v1h-1v-1h-5v1h-1v-1h-5v3h-1v-3h-8v1h-1v-1h-1v1h-1v-1h-1v2h-2v-2h-14v1h-4v-1h-7v1h-1v-1h-2v1h-1v-1h-1v1h-1v-1h-2v2h-3v-1h-1v-1h-5v1h-1v-1h-1v1h-1v-1h-1v1h-1v-1h-4v1h-1v-1h-6v2h-5v-2h-5v1h-1v-1h-4v1h-1v-1h-8v1h-3v-1h-13v3h-1v-3h-7v1h-2v-1h-6v1h-3v-1h-7v1h-1v-1h-1v2h-1v2h-1v-2h-1v-2h-1v1h-2v-1h-10v1h-1v-1h-2v1h-1v-1h-4v1h-2v-1h-3v1h-1v-1h-1v1h-2v-1h-2v1h-1v-1h-1v2h-2v-2h-4v1h-1v-1h-5v1h-1v-1h-2v2h-6v-2h-7v1h-2v-1h-1v1h-1v-1h-3v1h-2v-1h-5v1h-1v-1h-7v1h-10v-1h-3v1h-1v1h-1v-1h-7v-1h-2v2h-1v1h-1v4h-1v-3h-1v-1h-2v-3h-2v1h-1v-1h-3v1h-2v-1h-2v1h-1v-1h-1v1h-1v-1h-1v1h-2v-1h-1v1h-2v-1h-14v3h-1v-3h-1v1h-1v-1h-1v2h-1v-1h-2v-1h-1v1h-1v-1h-1v1h-2v1h-4v-2h-12v4h-1v-3h-2v-1h-4v1h-1v-1h-5v1h-2v-1h-4v1h-1v-1h-11v2h-2v-2h-1v1h-1v-1h-4v1h-4v-1h-3v1h-1v-1h-4v3h-1v-3h-4v5h-1v-5h-1v1h-1v-1h-3v1h-1v-1h-6v1h-1v-1h-3v1h-1v1h-1v3h-1v-3h-1v-2h-12v1h-3v-1h-5v1h-2v-1h-3v2h-1v-2h-6v6h-1v-4h-1v-2h-3v1h-1v-1h-4v2h-1v-2h-6v1h-1v-1h-1v1h-1v-1h-1v1h-2v-1h-5v1h-2v-1h-5v1h-2v-1h-1v1h-2v-1h-1v1h-1v-1h-3v1h-3v-1h-2v1h-1v-1h-3v1h-2v-1h-1v1h-3v-1h-1v1h-2v1h-1v-1h-1v-1h-2v1h-1v-1h-3v1h-1v-1h-1v1h-1v-1h-1v6h-1v-1h-2v-1h-1v5h-1v-5h-1v2h-1v-1h-1z"/>
<path d="M277 397v-4h1v1h1v-1h1v1h3v1h5v-1h1v1h1v-1h1v1h1v-1h5v1h5v-1h2v1h1v-1h3v1h1v-1h1v1h1v-2h1v2h5v-1h1v-3h1v3h2v1h1v-1h1v1h3v-1h3v1h1v-1h4v-1h2v1h1v1h4v-1h7v1h1v-1h1v-1h1v-1h1v-2h1v4h2v1h2v-1h4v1h2v-1h4v1h1v-1h1v1h1v-1h4v1h1v-1h1v-1h2v1h2v1h4v-1h2v-1h1v1h2v1h5v-1h3v-1h1v1h2v1h1v-3h1v2h1v1h2v-1h2v1h6v-1h3v1h1v-1h2v-1h1v1h3v1h3v-1h2v-1h1v1h2v1h3v-1h3v-2h1v1h1v1h1v-1h1v1h1v1h2v-1h1v-3h1v4h1v-1h3v1h5v-1h3v1h1v-1h1v1h6v-1h1v1h5v-1h1v-1h1v1h3v-1h1v1h1v-1h1v1h2v1h1v-1h1v1h1v-3h1v1h1v1h1v1h4v-1h7v1h2v-1h1v1h1v-1h3v-1h3v-1h1v1h2v2h2v-1h1v1h1v-1h1v1h1v-1h2v1h1v-2h1v1h2v1h1v-1h2v1h5v-2h3v-1h2v1h1v1h1v-1h1v1h3v1h1v-1h1v1h1v-1h1v1h1v-1h2v1h1v-1h1v1h1v-1h1v1h6v-1h2v1h1v-1h1v-1h1v1h3v1h1v-1h1v-1h1v1h1v1h1v-1h1v1h1v-1h2v1h1v-1h1v1h1v-1h2v1h2v-2h1v-1h2v1h1v2h2v-2h1v2h1v-1h1v1h1v-1h1v-1h1v1h2v1h1v-1h1v1h1v-2h1v1h1v1h3v-1h3v-1h1v1h2v1h5v-1h2v1h1v-1h2v1h1v-1h1v1h1v-1h2v1h1v-1h1v1h2v-3h1v2h1v1h2v-2h2v-1h2v1h1v2h9v-1h4v1h2v-1h1v-1h1v-1h1v1h2v-1h1v1h2v1h2v1h3v-3h1v3h2v-1h5v1h2v-1h1v1h8v-1h1v1h2v-1h1v1h9v-1h4v1h2v-2h1v1h2v1h3v-3h1v3h3v-1h8v1h2v-1h1v1h3v-2h4v2h1v-1h3v1h2v-1h1v1h3v-2h1v1h1v1h1v-1h2v1h1v-1h3v1h3v-1h4v1h1v-1h2v1h1v-2h1v1h1v1h2v-1h1v-1h1v1h1v1h3v-1h1v1h2v-1h1v1h1v-1h1v-1h1v1h2v-2h1v3h1v-1h4v1h2v-2h2v1h5v-1h2v1h2v1h1v-2h2v1h1v1h1v-1h1v1h1v-1h1v1h1v-1h1v1h1v-4h1v3h1v1h3v-1h2v1h2v-1h1v1h2v-1h4v1h3v-1h1v1h1v-1h2v1h2v-1h7v1h3v-1h1v-1h1v-1h1v1h1v1h2v1h1v-1h1v1h1v-1h1v1h1v-1h1v1h1v-1h1v1h1v-1h1v1h2v-1h1v1h1v-1h2v-1h1v-3h1v4h1v1h3v-1h3v1h4v-1h1v1h2v-1h1v1h2v-1h1v1h1v-1h1v1h1v-1h1v-1h1v-1h1v3h5v-1h1v1h3v-2h1v2h1v-1h3v1h3v-1h1v-1h1v1h3v1h2v-1h1v-1h2v2h1v-1h1v1h4v-1h2v1h5v-1h2v-2h1v2h1v-1h1v2h1v-1h1v1h3v-1h1v1h1v-1h1v1h7v-1h4v1h2v-1h3v1h2v-1h1v1h9v-1h1v1h3v-2h1v-2h1v4h1v-1h1v1h2v-1h4v1h2v-1h2v-1h1v1h1v1h1v-2h1v1h1v-1h2v-5h1v5h1v2h1v-1h1v1h1v-2h1v2h1v-1h2v1h2v-1h3v1h3v-1h2v1h1v-1h1v1h1v-2h2v1h1v1h1v-3h1v2h1v1h1v-2h1v1h2v1h1v-2h2v1h3v1h3v-1h1v-1h1v2h6v-1h3v1h2v-1h2v-1h1v1h1v-1h1v1h3v1h3v-1h5v1h2v-1h2v1h1v-1h2v1h1v-1h3v-4h1v3h2v1h5v-1h1v1h3v1h2v-1h6v-1h7v1h4v1h2v-1h1v-1h1v2h1v-1h1v1h1v-1h1v1h1v-1h3v1h2v-2h1v1h1v1h4v-1h1v1h1v-1h5v1h1v-2h1v-3h1v5h1v-1h1v1h1v-2h1v1h2v-1h1v2h3v-1h1v1h8v-1h3v1h1v-1h1v-1h1v2h1v-1h2v1h3v-1h2v-1h1v1h4v-1h2v2h3v-1h1v1h1v-1h1v1h1v-1h2v1h2v-2h1v2h2v-1h6v1h1v-1h1v1h1v-1h1v-2h1v2h1v1h3v-1h1v-1h1v-1h1v1h1v2h1v-1h2v1h1v-1h2v-1h1v1h1v-1h2v1h1v1h1v-1h1v1h3v-1h4v1h1v-1h14v1h1v-1h5v-1h1v1h3v-1h1v1h1v1h1v-1h4v1h2v-1h1v1h2v-2h2v2h1v-1h1v1h1v-1h2v1h2v-1h1v1h5v-1h2v1h1v-1h1v1h1v-1h1v1h3v-1h2v1h5v-1h2v1h3v-1h1v1h1v-1h3v1h1v-1h1v1h3v-1h2v1h1v-1h2v-2h1v2h2v1h1v-1h1v1h1v-1h1v-1h1v-4h1v-10h1v12h1v2h1v2h4v-1h1v1h3v-2h1v2h1v-1h5v-1h1v1h2v1h2v-1h1v1h1v-1h1v1h1v-1h1v-1h1v1h1v-1h2v-2h1v2h2v1h2v1h1v-2h1v1h1v1h1v-1h3v1h2v-1h8v1h3v-1h1v1h3v-1h1v-1h1v1h1v1h2v-1h2v8h-1v-1h-1v-1h-5v1h-1v-1h-2v1h-1v-1h-7v1h-1v-1h-1v1h-1v1h-2v-2h-1v1h-1v-1h-2v1h-3v1h-1v-2h-1v1h-1v1h-2v1h-2v-2h-3v1h-2v-1h-4v-1h-1v1h-1v-1h-1v1h-2v-1h-1v1h-5v-1h-2v1h-1v-1h-1v1h-1v-1h-3v2h-1v2h-1v14h-1v-13h-1v-3h-2v-1h-1v3h-1v-4h-7v1h-2v-1h-4v1h-2v-1h-2v1h-1v-1h-1v1h-1v-1h-8v1h-1v1h-1v-1h-1v-1h-2v1h-1v-1h-1v1h-1v-1h-13v1h-1v-1h-2v1h-1v1h-2v-2h-3v1h-1v-1h-1v1h-3v-1h-1v1h-1v-1h-4v1h-2v1h-1v-2h-1v1h-1v-1h-6v3h-1v-1h-1v-2h-1v1h-1v1h-1v-1h-1v-1h-2v1h-1v-1h-2v1h-2v1h-1v-2h-2v1h-1v-1h-1v1h-1v-1h-1v1h-1v-1h-2v1h-1v-1h-5v2h-1v-1h-2v-1h-1v2h-2v-1h-2v1h-1v-1h-2v-1h-2v1h-1v1h-1v-1h-2v-1h-1v1h-1v1h-1v-1h-2v-1h-1v2h-1v-1h-1v-1h-1v1h-2v1h-1v-1h-2v1h-2v-1h-2v-1h-1v1h-2v4h-1v-4h-1v-1h-2v1h-1v2h-1v-2h-2v-1h-4v1h-2v-1h-3v1h-1v-1h-3v1h-1v3h-1v-1h-1v-2h-1v1h-1v-2h-1v1h-2v-1h-2v1h-3v-1h-4v5h-1v-3h-1v-1h-5v-1h-3v1h-6v-1h-1v2h-1v-2h-2v1h-2v-1h-3v1h-3v2h-1v-2h-3v-1h-1v2h-1v-2h-1v2h-2v-1h-1v-1h-2v1h-3v1h-2v-1h-5v-1h-5v1h-1v1h-1v-1h-2v-1h-2v1h-5v-1h-1v1h-1v1h-2v-2h-1v2h-1v-2h-1v2h-1v-1h-4v1h-1v-1h-1v-1h-2v1h-5v-1h-1v1h-1v1h-1v-1h-2v1h-1v-1h-1v-1h-7v1h-3v-1h-1v1h-1v-1h-1v1h-1v-1h-1v1h-1v-1h-2v1h-2v-1h-7v1h-2v-1h-1v1h-1v-1h-1v1h-1v-1h-1v1h-4v-1h-3v1h-1v-1h-2v1h-1v-1h-1v2h-1v5h-1v-5h-1v-1h-3v-1h-6v3h-1v-1h-1v-1h-2v-1h-2v1h-1v-1h-2v4h-1v-2h-1v-1h-1v-1h-1v1h-1v-1h-1v2h-1v-1h-4v-1h-3v1h-10v-1h-4v2h-1v-1h-2v-1h-1v2h-1v-2h-1v1h-2v1h-1v-2h-3v2h-1v-1h-2v-1h-1v7h-1v-6h-2v4h-1v-4h-4v1h-1v-1h-1v-1h-2v1h-2v1h-1v-1h-3v-1h-2v1h-1v-1h-1v1h-4v-1h-2v4h-1v-3h-3v-1h-1v1h-3v-1h-1v1h-2v-1h-1v1h-1v1h-1v-1h-1v1h-1v1h-1v-2h-1v-1h-3v1h-3v-1h-1v1h-2v-1h-3v1h-1v-1h-4v1h-2v-1h-1v1h-1v-1h-1v1h-2v1h-1v-1h-8v1h-1v-2h-1v1h-2v-1h-1v2h-1v-1h-3v4h-1v-4h-2v-1h-2v1h-5v1h-4v-1h-5v-1h-3v1h-1v-1h-1v1h-1v-1h-2v1h-2v-1h-3v1h-1v-1h-7v1h-1v1h-1v-1h-3v-1h-1v1h-1v-1h-1v2h-3v-1h-3v1h-2v-1h-1v-1h-2v1h-1v-1h-8v1h-2v-1h-2v1h-1v-1h-1v1h-1v-1h-1v1h-1v-1h-2v1h-1v-1h-2v1h-1v-1h-1v1h-1v-1h-1v1h-1v-1h-1v1h-2v2h-1v-3h-1v2h-1v-1h-2v-1h-1v1h-1v-1h-1v1h-2v-1h-1v1h-2v-1h-2v1h-4v-1h-1v1h-1v1h-1v-2h-1v1h-1v-1h-1v1h-4v1h-4v-1h-1v-1h-3v1h-1v-1h-1v1h-2v1h-1v-1h-1v-1h-1v1h-6v-1h-1v1h-3v-1h-1v1h-3v1h-1v-1h-2v-1h-3v1h-3v1h-1v-1h-1v-1h-3v1h-2v-1h-1v1h-1v-1h-1v1h-2v-1h-2v1h-3v-1h-1v1h-2v1h-2v-1h-1v1h-1v-1h-2v-1h-2v1h-3v1h-1v-1h-1v1h-1v1h-3v-1h-1v-1h-2v-1h-3v1h-4v-1h-4v1h-3v1h-1v1h-1v1h-1v-2h-2v-2h-2v1h-3v-1h-2v3h-1v-3h-2v1h-2v-1h-1v1h-5v-1h-1v2h-1v-1h-4v-1h-3v1h-4v-1h-2v1h-3v-1h-3v1h-1v-1h-5v1h-1v-1h-1v2h-1v1h-1v-1h-2v-2h-1v1h-1v-1h-1v1h-5v-1h-3v1h-1v-1h-4v1h-1v-1h-2v1h-3v-1h-2v1h-3v1h-1v-2h-1v1h-1v-1h-5v1h-1v-1h-4v1h-3v-1h-3v2h-1v1h-3v-1h-2v-1h-4v-1h-1v1h-1v-1h-3v1h-2v-1h-3v1h-6v1h-2v1h-1v-1h-2v-1h-1v-1h-1v1h-1v-1h-1v1h-1v-1h-3v1h-2v-1h-5v1h-3v1h-1v-1h-2v-1h-4v1h-4v1h-1v-1h-3v1h-1v-1h-1v-1h-3v1h-2v-1h-1v1h-1v-1h-1v1h-1v2h-1v-2h-1v1h-1v-1h-1v-1h-1v1h-1v1h-2v-1h-1v-1h-1v1h-3v-1h-1v1h-1v-1h-2v1h-1v1h-1v-1h-2v-1h-4v2h-1v-1h-5v-1h-3v1h-1v-1h-5v1h-1v-1h-1v1h-1v-1h-4v1h-1v-1h-3v1h-1v-1h-3v1h-3v-1h-3v1h-1v-1h-1v2h-2v-1h-1v-1h-1v1h-4v-1h-1v1h-1v-1h-2v1h-1v-1h-4v1h-5v1h-2v-1h-2v1h-1v-2h-4v1h-8v-1h-4v1h-1v-1h-1v1h-1v-1h-1v1h-1v-1h-3v2h-1v-1h-1v1h-1v-2h-1v1h-1v-1h-1v2h-1v-1h-1v-1h-2v1h-3v1h-2v-1h-5v1h-1v-1h-2v-1h-1v1h-1v-1h-1v1h-1v-1h-1v1h-2v2h-1v-3h-1v1h-1v-1h-5v1h-1v-1h-3v1h-1v-1h-1v1h-1v-1h-2v1h-1v-1h-1v1h-1v-1h-5v1h-2v-1h-1v1h-2v-1h-2v1h-4v-1h-1v1h-3v1h-1v-1h-1z"/>
<path d="M277 428v-2h4v-2h1v2h2v-1h1v1h1v-1h1v2h1v-1h2v-1h2v-1h1v1h3v-1h1v-2h1v3h1v1h2v-2h1v1h2v1h4v-1h6v1h3v-1h2v1h6v-1h2v-1h1v2h2v-1h6v1h1v-1h1v1h13v-1h1v1h2v1h1v-1h5v-2h1v2h2v-1h1v1h15v1h1v-1h1v-1h1v1h8v-1h1v1h2v-2h1v2h9v-1h1v1h5v-1h3v-2h1v2h2v2h1v-1h8v-1h1v-1h1v-2h1v3h1v1h9v-1h1v1h1v-4h1v4h5v-1h1v1h5v-1h2v1h3v-1h2v1h7v-1h1v1h3v-1h1v1h2v-2h2v-1h1v1h2v1h1v1h3v-1h2v1h1v-1h2v1h1v-1h1v1h5v-4h1v4h5v-1h1v1h1v-1h1v1h6v-1h1v1h3v-1h1v1h3v-1h2v1h1v-1h2v1h1v-1h1v1h1v-1h2v1h3v-1h2v1h3v-1h1v-1h1v1h1v1h5v-1h1v1h3v-1h3v-2h1v-2h1v4h1v1h12v-1h3v-1h1v1h3v1h1v-1h1v1h7v-1h2v1h1v-4h1v4h1v-1h1v1h13v1h1v-2h2v-1h1v1h1v1h1v-1h1v-1h1v-1h3v2h2v2h1v-2h1v1h7v-1h1v1h28v-1h1v1h5v-1h1v1h2v-1h2v1h2v-1h4v1h4v-3h1v3h4v-1h3v1h7v-1h1v1h1v-1h3v-2h1v2h1v1h4v1h1v-1h5v-1h2v1h1v-1h2v-3h1v3h2v1h3v-1h3v1h3v1h1v-1h8v-4h1v4h1v-2h2v-1h5v-1h1v1h1v-1h1v1h2v-1h2v-1h1v-1h1v3h2v-1h2v-1h1v1h3v-1h1v2h2v-2h3v-1h1v1h2v1h1v1h1v-1h1v2h1v-2h1v1h2v-1h1v1h1v-2h2v1h1v-1h1v1h1v4h1v-1h1v1h3v-1h1v1h14v-1h1v1h6v-1h2v1h1v1h1v-1h1v-3h1v2h1v1h1v-1h1v1h8v-1h1v1h2v-2h1v2h1v-1h1v1h16v-1h7v1h3v-1h1v1h1v-1h1v1h5v-2h1v2h6v-1h1v1h4v-1h1v1h9v-1h2v1h2v-1h1v1h2v-1h1v1h7v-1h4v1h4v-1h5v1h1v-1h1v1h1v-2h2v1h1v1h1v-1h1v1h5v-1h1v-1h1v1h3v1h3v-1h1v2h1v-1h3v-1h1v1h1v-1h2v1h1v-1h1v1h12v-1h1v1h5v-1h1v1h1v-1h1v-2h1v2h2v1h5v-1h1v1h5v-1h2v1h6v-1h1v-1h1v1h1v1h8v1h1v-1h6v-1h2v1h7v-1h2v2h1v-1h2v-3h1v3h4v-1h2v1h1v-2h1v2h4v-1h1v1h3v1h1v-1h3v-1h2v1h11v1h1v-1h1v-1h2v1h5v-1h1v1h4v-1h1v1h6v1h1v-2h1v1h1v-1h1v1h1v-1h1v1h6v-1h1v-1h1v1h1v1h1v-1h1v1h3v-1h3v1h11v-1h1v1h1v-1h1v1h13v-1h1v1h3v-1h2v1h5v-1h2v-1h1v2h3v-1h1v1h4v-1h1v1h2v-1h1v-1h1v2h5v-1h2v1h3v-1h1v1h4v-4h1v4h5v-1h1v1h5v-1h3v1h4v-1h1v1h1v-1h2v1h1v-2h1v2h9v-1h1v1h7v-2h1v1h2v1h1v-1h1v1h1v-1h6v1h7v-1h2v1h1v-2h2v2h5v-1h1v1h1v-1h1v1h6v-1h1v1h6v-3h2v-1h2v2h1v-2h1v1h2v-1h3v-1h1v1h3v1h1v-2h1v1h3v-1h1v1h2v1h2v-2h4v1h1v-1h3v-1h1v2h3v1h1v-1h1v1h1v-1h1v-1h8v1h1v-1h1v2h1v-1h3v1h1v-1h2v-1h1v1h2v1h1v-1h3v3h1v-2h2v-1h2v1h1v-1h2v-1h4v1h2v1h2v-2h1v1h4v1h1v-4h1v3h4v2h1v-1h3v-1h1v1h1v-1h1v-1h1v2h1v-1h1v1h2v1h2v-1h1v-1h3v2h1v-2h3v-1h1v1h1v1h1v-1h1v1h1v-1h2v1h2v1h1v-1h1v-1h1v2h1v-1h2v-2h3v1h1v1h1v-1h1v1h1v-1h2v1h3v1h1v-2h1v-1h1v1h2v1h1v-1h1v1h1v12h-2v-1h-1v1h-4v-2h-1v1h-1v1h-1v-2h-1v1h-1v1h-2v2h-2v-2h-1v2h-1v-2h-1v-1h-1v1h-5v-2h-2v1h-1v1h-1v1h-1v-2h-1v2h-2v-1h-1v1h-1v-1h-5v-1h-2v2h-1v2h-1v-2h-1v-1h-1v1h-1v-1h-3v-1h-1v1h-4v2h-1v-3h-3v1h-1v-1h-2v1h-1v-1h-1v1h-1v-1h-1v1h-2v-1h-1v1h-3v1h-2v-1h-5v1h-1v-1h-2v-1h-1v-1h-1v1h-3v1h-3v1h-1v-1h-2v-1h-1v1h-1v-2h-1v2h-5v1h-7v-1h-1v1h-1v-2h-1v2h-1v-2h-1v1h-1v-2h-1v1h-2v1h-2v-1h-1v-1h-1v3h-3v-1h-1v1h-1v-1h-1v-1h-2v-1h-1v2h-3v1h-1v-2h-2v1h-3v-1h-1v-1h-1v2h-1v-1h-1v1h-1v-2h-2v2h-3v-5h-11v1h-1v1h-1v-2h-1v1h-1v-1h-2v1h-2v-1h-2v3h-2v-2h-1v-1h-1v1h-1v-1h-17v1h-1v-1h-11v1h-2v-1h-2v1h-1v-1h-2v2h-2v-2h-3v1h-1v-1h-2v1h-3v-1h-4v1h-1v-1h-4v1h-1v-1h-1v1h-2v-1h-7v1h-2v1h-1v-1h-1v-1h-1v1h-1v-1h-3v5h-1v-3h-1v-2h-7v1h-1v-1h-4v1h-1v-1h-2v1h-3v-1h-8v1h-3v-1h-1v1h-1v1h-1v-2h-10v1h-1v-1h-1v1h-3v-1h-4v1h-1v-1h-7v1h-1v-1h-1v3h-1v-3h-3v1h-1v-1h-14v1h-1v-1h-8v1h-1v-1h-7v1h-1v-1h-5v1h-1v-1h-4v1h-1v-1h-5v1h-1v-1h-1v1h-1v-1h-8v1h-2v-1h-2v3h-1v-3h-2v1h-1v-1h-3v1h-3v-1h-1v1h-1v1h-1v-2h-2v1h-3v-1h-1v1h-1v-1h-2v1h-1v-1h-12v1h-1v-1h-5v1h-2v1h-1v-1h-2v-1h-6v2h-2v3h-1v-3h-1v-1h-1v-1h-12v1h-2v-1h-4v1h-3v-1h-9v1h-2v-1h-6v1h-1v-1h-1v1h-3v-1h-4v1h-1v-1h-9v1h-2v-1h-1v3h-1v1h-1v-2h-1v-1h-1v-1h-1v1h-1v-1h-7v1h-1v-1h-3v1h-1v-1h-2v1h-1v-1h-10v1h-1v-1h-1v1h-1v-1h-1v1h-1v-1h-1v1h-1v-1h-9v1h-1v-1h-3v2h-4v1h-1v-1h-1v-1h-1v1h-1v-2h-1v1h-1v-1h-5v1h-1v-1h-1v1h-1v-1h-8v4h-1v-3h-1v-1h-1v1h-1v-1h-4v1h-1v-1h-8v1h-1v-1h-15v3h-1v-3h-1v1h-1v-1h-12v6h-1v-1h-1v-1h-1v1h-1v2h-1v-1h-1v-2h-1v2h-1v-1h-1v-1h-1v-1h-1v2h-1v-1h-2v2h-2v2h-1v-2h-3v-3h-1v3h-1v-1h-1v1h-2v-1h-1v-1h-1v1h-1v2h-1v-2h-2v-1h-1v1h-1v1h-1v-1h-1v-2h-1v1h-2v-1h-2v1h-3v-1h-1v1h-2v-1h-1v-3h-20v2h-3v1h-1v-1h-1v-2h-4v1h-2v-1h-6v1h-1v1h-1v2h-1v-2h-2v-1h-2v-1h-1v1h-2v1h-1v-2h-1v1h-2v-1h-7v1h-1v1h-1v-2h-4v4h-1v-2h-1v-1h-1v-1h-2v1h-1v-1h-2v1h-1v-1h-7v1h-1v-1h-9v1h-1v-1h-2v1h-1v-1h-3v1h-2v1h-1v-2h-1v1h-1v-1h-1v1h-3v-1h-4v1h-1v-1h-2v1h-1v-1h-1v1h-1v-1h-3v2h-2v2h-1v-1h-3v-3h-1v1h-1v-1h-8v1h-4v-1h-4v1h-2v-1h-3v2h-1v-2h-1v1h-2v-1h-2v1h-3v-1h-1v1h-1v1h-3v3h-1v-3h-1v1h-1v-1h-2v-2h-1v1h-5v-1h-3v1h-2v-1h-1v2h-1v4h-1v-4h-2v-2h-1v1h-2v-1h-7v1h-2v-1h-7v1h-1v-1h-5v1h-1v-1h-8v1h-1v-1h-2v1h-1v-1h-1v1h-1v-1h-3v1h-1v-1h-3v1h-1v-1h-2v1h-4v-1h-1v2h-1v-1h-2v-1h-1v1h-3v1h-1v-2h-1v1h-2v-1h-4v2h-1v1h-1v-1h-2v1h-1v-1h-1v-1h-1v-1h-1v1h-3v-1h-1v1h-1v-1h-6v1h-1v-1h-4v1h-3v-1h-10v1h-1v-1h-1v1h-2v-1h-7v1h-2v2h-1v3h-1v-3h-1v-3h-3v1h-1v-1h-2v1h-4v-1h-3v1h-2v3h-1v-3h-1v-1h-6v1h-5v1h-1v-1h-2v-1h-3v1h-2v-1h-1v1h-1v-1h-4v1h-3v-1h-1v3h-1v-3h-4v1h-4v-1h-8v2h-1v2h-1v-2h-1v-1h-1v-1h-10v1h-1v-1h-1v1h-1v-1h-1v1h-1v-1h-1v1h-1v-1h-1v1h-5v-1h-2v1h-4v2h-1v-2h-1v1h-2v-2h-4v1h-1v-1h-2v1h-2v-1h-9v1h-1v-1h-3v1h-1v-1h-1v1h-3v-1h-4v2h-4v-1h-2v-1h-11z"/>
<path d="M277 458v-7h2v2h2v-1h1v-1h1v-2h1v3h4v1h1v-1h6v-1h1v2h1v-1h1v-1h1v1h1v-1h1v1h1v1h1v-2h1v2h1v-1h2v2h1v-2h2v1h1v1h1v-2h1v1h1v-1h3v-1h1v1h1v1h1v-1h1v-1h2v1h2v-1h3v-1h1v2h5v-3h1v2h2v1h1v-1h2v1h1v1h1v-2h1v1h6v1h1v-1h2v-1h1v1h1v-1h1v1h1v-2h2v-1h1v2h3v1h1v-1h1v1h1v1h1v-2h2v2h1v-1h1v1h1v-2h3v1h1v-2h1v2h2v-1h5v2h1v-1h2v-1h1v2h1v-1h1v2h1v2h15v-1h3v2h1v-2h2v1h1v-1h1v1h1v-1h1v-2h1v3h2v-1h1v1h1v-1h2v-1h1v1h1v1h4v-1h3v1h1v-1h1v1h1v-1h1v1h2v-1h1v1h1v-1h2v-2h1v2h1v-1h1v2h2v-1h1v1h1v-1h2v1h7v-1h5v1h1v-1h2v1h3v-1h1v1h1v-1h1v1h5v-1h1v1h1v-1h1v-1h1v1h1v1h1v-1h2v2h1v-1h6v-1h2v1h1v-1h1v1h9v-1h2v1h1v-1h1v1h1v-1h2v-3h1v3h1v1h11v-1h2v1h4v-1h1v1h1v-1h2v1h2v-1h1v1h6v1h1v-2h1v-2h1v3h2v-1h1v1h2v-1h1v1h1v-1h1v1h12v-1h1v1h10v-1h2v1h2v-1h2v1h12v-1h1v1h10v-1h1v1h13v-1h1v1h8v-1h1v1h1v-1h1v1h1v-1h2v1h4v-1h1v1h1v-1h1v-1h1v1h4v-1h1v1h3v1h1v-1h1v1h4v-1h1v1h9v-1h7v1h1v-1h1v1h1v-1h1v1h2v-1h2v1h8v-1h4v1h4v-1h2v1h1v-1h2v1h1v-1h7v-1h1v2h3v-1h3v1h1v-1h1v1h6v-1h2v-1h1v1h1v1h5v-1h1v1h5v-4h1v3h2v1h5v-1h2v1h3v-1h1v1h5v1h1v-2h1v1h2v-1h2v1h1v-1h3v1h9v-1h1v1h9v-1h1v-1h1v2h7v-1h1v1h5v-1h3v1h5v-1h3v1h2v-3h1v3h1v-1h1v1h9v-1h1v1h2v-1h1v-3h1v-1h1v4h3v1h6v-1h2v-1h1v1h1v1h8v-2h1v2h4v-1h1v1h5v-1h1v1h4v-1h1v-1h2v-3h1v5h1v-1h1v1h2v-1h2v1h23v-1h2v1h7v-1h2v1h1v-1h3v1h1v-1h1v1h4v-1h1v1h2v-1h3v1h5v-1h2v1h9v-1h1v1h2v-3h1v3h3v-1h3v1h5v-2h1v2h8v1h1v-3h2v1h2v1h4v-1h1v1h9v-1h1v1h2v-1h3v1h1v-1h1v1h3v-1h1v1h3v-1h2v1h9v-1h1v1h1v-1h1v1h1v-2h1v1h7v1h1v-1h4v1h5v-1h3v1h3v1h1v-1h6v-1h1v1h2v-1h1v1h2v-1h1v1h1v-1h1v1h3v-1h1v1h4v-1h1v1h7v-2h1v-9h1v10h1v1h4v-1h2v1h2v-1h2v1h2v-1h1v1h3v-1h1v-1h1v1h1v1h4v-1h1v1h8v-4h1v4h3v-1h4v-2h1v2h3v1h5v-1h2v1h1v-5h1v-1h1v-3h1v3h1v1h1v-1h1v-1h1v2h1v-1h1v-1h2v2h1v2h1v-1h1v-2h3v1h1v-1h1v-1h1v4h1v-1h1v-2h1v1h2v1h3v-2h1v1h2v2h1v-3h1v1h2v-1h3v1h1v-1h1v1h1v-2h1v1h3v-1h1v1h1v1h1v-1h1v1h4v1h1v-2h1v1h2v2h1v-2h1v1h1v-4h1v1h1v2h1v1h1v-1h4v-1h1v-1h1v1h1v-1h1v3h1v-1h1v1h1v-1h1v1h1v-1h2v1h2v-1h1v-1h1v1h1v1h1v-1h2v1h1v-1h1v1h1v1h1v-2h1v-2h1v1h1v2h1v-2h1v1h1v-1h1v1h2v1h1v-2h1v-1h1v-1h1v-1h1v3h1v1h1v-2h1v3h1v-2h1v2h1v-2h2v2h1v-1h4v1h1v-1h1v-1h3v2h1v-2h1v-2h1v3h1v1h1v-2h1v2h1v-2h1v1h1v-1h1v2h1v-3h1v2h2v1h2v-2h1v1h2v1h2v-2h1v1h2v-1h1v1h1v1h1v-2h1v2h1v-1h4v1h2v-1h2v-1h2v-1h2v1h1v2h2v-2h2v2h1v-1h1v1h2v-2h1v1h1v-1h1v-1h1v1h1v3h1v-1h2v-1h2v1h1v-2h1v1h3v-1h1v2h1v-2h3v-1h1v4h1v-1h1v-1h1v-1h1v1h2v-2h1v-1h1v2h3v2h1v-1h1v1h1v-1h4v-1h2v-1h1v1h2v1h3v-2h1v1h1v1h1v2h1v-1h2v-1h2v-1h1v-1h1v1h1v1h1v-2h1v1h3v1h1v1h2v1h1v-2h1v-1h1v2h1v-1h4v1h1v-1h2v1h1v1h1v-1h3v2h1v-1h1v-1h1v-2h1v2h1v-4h1v3h1v-1h2v3h1v-3h1v2h1v-2h3v17h-1v-2h-1v2h-3v1h-1v-2h-1v-2h-1v1h-1v1h-1v-1h-1v1h-1v1h-1v-1h-6v1h-1v-1h-2v-1h-1v1h-2v1h-1v-1h-3v-1h-1v1h-1v-2h-2v2h-1v1h-1v1h-2v-1h-2v-1h-1v1h-1v-1h-1v2h-1v-2h-3v1h-2v-1h-1v-1h-1v1h-2v2h-1v-1h-1v1h-2v-1h-1v-2h-2v2h-1v-1h-5v-1h-1v1h-1v1h-1v-1h-1v-2h-1v-1h-1v3h-1v1h-2v2h-1v-1h-1v1h-1v-1h-1v-1h-4v-2h-2v1h-1v-2h-1v1h-3v1h-1v-1h-3v1h-1v-1h-3v1h-1v-1h-1v1h-2v2h-1v-2h-1v-1h-2v3h-1v-1h-1v1h-3v-3h-1v2h-2v-1h-1v-1h-2v1h-1v-1h-1v2h-2v-1h-1v-1h-1v1h-2v-1h-1v-1h-2v1h-1v1h-1v1h-1v-2h-1v1h-1v-1h-1v1h-2v1h-1v-1h-1v2h-1v-1h-1v-1h-1v1h-4v1h-1v-1h-1v-4h-1v2h-2v-1h-1v2h-1v-2h-1v1h-4v2h-1v-2h-1v2h-1v-1h-1v1h-1v-2h-1v1h-1v3h-1v-3h-1v1h-2v1h-2v1h-1v-1h-1v-2h-2v1h-1v-2h-2v2h-1v-2h-1v1h-1v-2h-1v1h-1v1h-1v-1h-2v-1h-1v2h-1v1h-2v-1h-2v-1h-2v1h-2v1h-2v-2h-1v1h-1v2h-1v-3h-1v2h-1v-1h-1v-1h-2v2h-1v-1h-2v-1h-1v1h-1v-1h-4v1h-5v-2h-1v2h-1v-1h-2v1h-1v1h-4v1h-1v-1h-2v-1h-2v-2h-1v2h-2v-1h-2v-1h-1v2h-2v-1h-1v-1h-1v1h-2v1h-1v-2h-1v1h-4v1h-1v-1h-1v1h-1v-1h-1v1h-2v1h-2v-1h-2v2h-2v-2h-1v1h-4v2h-1v-2h-2v-6h-1v1h-1v-2h-1v1h-6v1h-2v1h-1v-1h-4v-1h-10v1h-1v-1h-1v1h-2v1h-1v-1h-1v-1h-1v1h-1v1h-1v-1h-1v-1h-9v1h-1v-1h-6v3h-1v9h-1v-9h-1v-3h-16v1h-2v-1h-9v1h-4v-2h-1v1h-3v1h-1v1h-1v-1h-1v-1h-6v1h-2v-1h-2v1h-6v3h-1v-3h-2v-1h-4v1h-3v-1h-1v1h-1v-1h-4v1h-3v-1h-4v-1h-1v1h-1v1h-1v-1h-1v1h-1v-1h-15v1h-2v-1h-1v1h-1v-1h-1v2h-1v-1h-1v-1h-6v1h-1v-1h-2v-1h-1v2h-1v-1h-9v1h-1v-1h-1v1h-1v-1h-1v-1h-1v2h-1v-1h-1v-1h-1v1h-4v1h-1v1h-1v-2h-2v1h-1v-1h-24v1h-1v-1h-1v1h-1v-1h-2v1h-1v1h-1v-3h-1v2h-2v1h-1v-1h-2v-1h-1v1h-1v-1h-3v-1h-1v1h-2v1h-1v-1h-9v3h-1v-3h-2v1h-2v-1h-1v1h-3v-1h-1v1h-1v-1h-1v-1h-1v1h-2v1h-2v-1h-6v1h-3v-1h-9v1h-1v-2h-1v1h-2v1h-4v1h-1v-2h-1v1h-2v1h-1v-1h-1v-1h-1v1h-1v-1h-1v3h-1v-3h-5v1h-1v-1h-1v1h-3v-1h-5v-1h-1v1h-3v1h-2v-1h-3v1h-1v-1h-12v1h-2v-1h-8v1h-1v-1h-1v2h-1v-1h-1v-1h-1v1h-2v-1h-4v1h-1v-1h-5v2h-1v-2h-6v1h-1v-1h-1v1h-2v-1h-10v1h-1v-1h-3v2h-1v-1h-2v-1h-7v3h-1v-3h-11v-1h-1v1h-2v1h-1v-1h-3v1h-1v4h-1v-4h-2v1h-1v-2h-1v1h-2v-1h-1v1h-3v-1h-6v1h-5v-1h-7v1h-1v-1h-2v1h-1v-1h-3v1h-4v-1h-2v1h-2v-1h-15v1h-1v-1h-1v1h-5v-1h-3v1h-1v-1h-8v1h-3v-1h-2v1h-2v-1h-6v1h-3v-1h-2v1h-2v-2h-1v1h-2v1h-1v-1h-3v1h-2v2h-1v-3h-1v1h-1v-1h-1v1h-1v-1h-3v1h-1v-1h-1v1h-1v-1h-2v1h-1v-1h-2v1h-1v-1h-1v1h-1v-1h-4v1h-2v-1h-1v1h-1v-1h-5v1h-1v-1h-7v1h-3v-1h-1v1h-1v-1h-8v1h-1v-1h-3v1h-1v-1h-6v1h-1v-1h-8v1h-1v-1h-3v1h-1v-1h-3v-1h-1v1h-3v1h-1v-1h-1v1h-1v-1h-1v2h-1v2h-1v-3h-2v-1h-3v1h-1v-1h-9v1h-1v-1h-4v1h-1v-1h-2v1h-3v-1h-4v1h-1v1h-1v-1h-1v-1h-1v-1h-1v1h-15v2h-1v-2h-4v2h-1v-2h-5v1h-2v-1h-4v1h-1v1h-3v-2h-1v1h-1v-1h-1v2h-1v-2h-6v1h-1v-1h-2v1h-2v-1h-1v2h-2v-1h-4v-1h-16v2h-1v-2h-5v1h-1v-1h-5v3h-1v1h-1v1h-1v-1h-4v1h-3v-2h-4v1h-1v-2h-1v2h-1v-1h-1v1h-1v-1h-3v1h-1v1h-2v-1h-1v1h-2v-1h-3v1h-1v-1h-2v-1h-1v1h-1v1h-1v1h-1v-1h-2v-1h-2v1h-1v-1h-1v1h-1v-1h-2v1h-1v-1h-1v-1h-1v1h-2v1h-1v-1h-1v1h-1v-1h-1v1h-1v-1h-1v1h-2v-1h-2v1h-4v-2h-2v1h-1v-1h-1v3h-1v-3h-1v1h-1v-2h-1v3h-1v-1h-1v-2h-1v2h-3v-1h-1v1h-1v-1h-3v1h-1v1h-1v-2h-2v1h-1v1h-1v1h-1v-2h-2v1h-2v-1h-1v1h-2v-1h-2v1h-2v2h-1v-3h-2v4h-1v-2h-1v-2h-1v-1h-2v2h-2z"/>
<path d="M277 488v-7h3v1h1v-2h1v2h3v-1h2v-1h1v1h1v1h1v-1h1v1h3v1h1v-1h3v-3h1v2h2v-1h1v1h1v1h1v1h1v-1h1v-1h1v1h2v-1h1v1h1v-1h1v1h1v1h1v-3h1v3h1v-4h1v1h1v-3h1v3h1v4h1v-6h1v1h1v-2h1v1h1v2h1v-1h1v1h1v-2h2v1h1v3h1v-2h2v1h2v2h1v-1h1v1h1v-1h1v-1h4v-2h1v1h2v2h1v-1h3v1h1v-2h1v1h1v-1h5v2h1v-1h1v1h1v-2h1v1h1v2h1v-2h2v1h1v-2h1v2h1v-2h1v1h1v-1h3v1h1v2h1v-2h1v1h4v-2h7v1h2v-1h1v1h1v-1h1v1h1v-1h2v-1h1v1h2v1h3v3h1v-1h1v-1h1v-1h1v-1h1v3h1v-3h3v-1h2v1h2v1h1v1h1v-1h2v1h1v-3h1v1h1v1h2v1h1v-1h1v1h1v-1h1v1h2v1h1v-1h1v1h1v-1h2v-1h3v1h1v-3h1v2h1v1h1v-1h1v2h1v-2h1v1h2v-2h1v2h2v-1h1v1h1v-2h1v2h1v-1h1v-1h3v1h1v-1h3v6h2v1h1v-1h7v-3h2v-1h8v1h4v1h1v-1h2v-2h1v1h3v1h1v-1h2v2h1v2h1v-1h1v1h8v-2h1v2h1v-1h2v1h1v-3h1v4h1v-1h1v1h1v-1h1v-1h1v1h3v-1h2v1h2v-1h1v1h12v-1h4v-1h1v1h8v1h5v-1h5v1h1v-1h1v1h6v-1h1v1h3v-1h1v-1h1v1h1v1h2v-1h1v1h12v-1h1v1h1v-1h1v1h2v-1h1v1h3v-1h3v1h3v-1h2v1h11v-1h1v1h3v-1h1v1h1v-1h4v1h5v1h1v-1h6v-1h1v1h5v1h1v-1h5v-1h3v1h2v-1h3v1h1v-1h2v1h5v1h1v-2h1v1h9v-1h1v1h2v1h1v-1h2v-1h2v1h1v-2h1v2h2v1h1v-1h2v-1h2v-2h1v1h1v1h1v1h7v-1h1v1h1v-1h1v1h5v-1h1v1h5v-1h2v1h19v-1h3v1h4v-1h1v1h5v-1h1v1h2v-1h1v1h7v-1h1v1h4v-2h1v1h3v-1h1v2h13v-1h1v1h6v-1h2v1h3v-1h2v-1h1v-1h1v2h4v-1h1v1h1v1h1v-1h2v1h4v-1h4v1h2v-1h3v1h3v-1h1v1h1v-1h2v-1h1v1h1v1h6v-1h1v1h3v-1h1v1h3v-2h1v2h4v-1h1v1h6v-1h2v1h8v-1h3v1h1v-1h1v1h1v-2h1v2h1v-1h1v1h1v-1h1v1h4v-1h2v1h1v1h1v-1h1v-1h2v1h4v-1h3v1h2v1h1v-1h2v-1h1v1h1v-2h1v1h1v-1h2v1h3v1h1v-1h2v1h4v-2h2v-1h1v1h1v1h1v1h9v-1h5v1h1v-1h1v1h6v-1h1v1h1v-2h1v1h1v1h2v1h1v-1h18v-1h1v2h1v-2h1v1h11v-1h6v1h4v-1h2v1h1v-1h5v1h3v1h1v-2h3v1h2v-1h4v1h3v-1h6v1h12v-1h2v-2h1v2h2v1h3v1h1v-1h3v-1h1v1h7v-1h1v-3h1v3h1v1h7v-1h1v1h3v-1h1v1h3v-3h1v2h1v1h1v-1h1v-1h3v1h1v1h4v1h1v-2h1v1h4v-1h2v1h1v-1h4v1h10v-1h2v1h4v-3h1v3h3v-1h1v1h1v-1h4v1h9v1h1v-1h3v-1h1v1h2v-1h1v1h6v-1h1v1h2v1h1v-2h1v1h7v-1h2v1h3v-1h2v-1h1v2h4v-1h2v1h3v1h1v-1h2v-1h1v1h18v-1h2v1h3v-1h1v1h5v-1h6v1h10v-1h1v1h1v1h1v-1h1v-1h2v1h1v-1h3v1h2v-1h2v1h2v-1h2v-1h1v1h2v1h10v-1h2v1h1v-1h1v1h8v-1h2v2h1v-2h1v-1h1v-2h1v2h1v2h2v-1h1v1h2v1h1v-1h1v-1h4v1h1v-1h2v1h5v-1h4v1h2v-1h1v-1h1v1h1v-1h1v1h2v1h1v-1h1v1h1v-1h2v1h1v-1h1v1h3v-1h3v1h7v-1h1v1h1v-1h1v1h3v-1h1v-1h1v2h6v-1h1v1h6v-1h8v1h4v-1h1v1h1v-1h2v2h1v-1h15v-1h2v1h1v-1h1v1h1v-1h1v-2h2v2h3v-1h2v2h3v-1h1v6h-5v1h-3v1h-1v1h-1v-2h-2v-1h-3v1h-2v-2h-1v1h-1v3h-1v-3h-4v1h-1v-1h-4v1h-2v-1h-1v1h-4v-1h-11v4h-1v-3h-1v-1h-4v-1h-1v3h-1v-2h-14v2h-1v-2h-7v1h-2v1h-1v-1h-1v-1h-6v1h-1v-1h-1v1h-1v-1h-1v1h-1v1h-2v-1h-3v1h-1v-1h-2v1h-1v-1h-1v-1h-10v1h-1v-1h-1v1h-4v-1h-1v1h-1v-1h-1v1h-1v3h-1v-2h-1v-2h-2v1h-1v-1h-1v-1h-1v2h-1v-1h-2v1h-1v1h-1v-2h-4v1h-1v-1h-5v1h-3v-1h-5v-1h-1v2h-3v-1h-1v1h-5v-1h-1v1h-1v-1h-3v1h-1v-1h-8v1h-1v-1h-1v1h-1v-1h-2v1h-2v-1h-1v1h-2v-1h-1v1h-1v-1h-2v1h-11v-1h-6v1h-1v-1h-5v1h-1v-1h-4v1h-3v-1h-3v1h-1v-1h-6v1h-1v-1h-3v1h-2v-1h-1v1h-1v-1h-3v1h-1v-1h-2v1h-1v-1h-1v1h-1v-1h-1v1h-1v-1h-2v1h-1v-1h-1v1h-4v-1h-2v-1h-1v1h-1v1h-1v-1h-1v1h-1v-1h-9v1h-2v-1h-4v1h-1v-1h-5v1h-2v-1h-5v2h-1v-2h-4v1h-1v-1h-1v1h-1v-1h-1v1h-1v-1h-3v1h-2v-1h-1v1h-1v-1h-5v1h-1v1h-1v-1h-1v1h-1v-1h-1v-1h-1v-1h-1v1h-2v1h-1v-1h-1v1h-2v-1h-17v1h-1v-1h-8v1h-1v-2h-1v1h-1v1h-3v-1h-1v-1h-1v1h-3v1h-3v-1h-3v-1h-1v1h-2v1h-1v-1h-1v1h-1v-1h-12v4h-1v-4h-2v3h-1v-3h-10v1h-1v-1h-1v1h-1v-2h-1v2h-6v-1h-2v1h-4v1h-1v-1h-2v-1h-1v1h-1v-1h-13v1h-1v-1h-2v1h-2v-1h-1v-1h-1v1h-4v1h-2v3h-1v-3h-1v-1h-3v1h-4v-1h-3v1h-2v-1h-4v1h-2v-1h-1v1h-1v-1h-2v1h-1v1h-2v-1h-1v1h-1v-2h-4v1h-4v-1h-4v1h-1v-1h-5v1h-2v-1h-1v1h-4v-2h-1v1h-1v1h-1v-1h-7v1h-4v-1h-10v1h-1v-1h-1v1h-3v-1h-1v1h-1v-1h-2v1h-1v-1h-4v1h-1v-1h-7v1h-1v-2h-1v3h-1v-2h-7v1h-1v-1h-4v-1h-1v1h-4v1h-1v-1h-1v1h-1v-1h-6v1h-1v-1h-3v1h-1v-1h-1v1h-2v-1h-2v1h-3v-1h-1v3h-1v-3h-1v1h-1v4h-1v-3h-1v-2h-4v1h-1v-1h-1v1h-2v-1h-5v1h-1v-1h-1v1h-1v-2h-1v1h-5v1h-3v-1h-2v1h-2v-1h-2v1h-1v-1h-2v1h-1v-1h-12v1h-2v-1h-3v1h-1v-1h-1v1h-1v-1h-1v2h-1v-2h-1v1h-1v-1h-3v2h-1v-2h-1v2h-1v-2h-3v1h-1v-1h-1v1h-1v-1h-1v2h-1v-2h-1v1h-1v-1h-7v1h-2v-1h-1v1h-1v1h-1v-1h-1v-1h-13v1h-4v1h-2v-1h-3v1h-1v-2h-9v1h-1v-1h-1v1h-1v-1h-6v1h-1v-1h-3v1h-1v-1h-8v2h-1v-2h-1v2h-1v-1h-1v-1h-3v1h-1v-1h-3v1h-1v-1h-1v1h-1v-1h-5v4h-1v-1h-1v-3h-3v4h-1v-4h-1v1h-1v-1h-3v1h-1v-1h-1v1h-1v1h-1v-1h-2v-1h-21v-1h-2v1h-7v1h-1v-1h-2v1h-1v-1h-2v1h-1v-1h-5v1h-1v-1h-1v1h-1v-1h-3v1h-1v-1h-5v1h-1v-1h-1v1h-1v-2h-1v1h-2v-1h-1v1h-4v1h-4v-1h-7v1h-1v-1h-1v1h-2v1h-1v-1h-1v1h-1v-1h-3v-1h-5v-1h-1v1h-2v4h-1v-4h-4v1h-1v-1h-1v1h-1v-1h-7v1h-1v-1h-4v-1h-1v2h-1v-1h-7v4h-1v-4h-5v4h-3v-1h-1v-1h-1v2h-1v-1h-1v-1h-1v1h-4v-1h-2v2h-8v-1h-2v-3h-6v1h-2v-1h-2v2h-1v2h-1v2h-1v1h-1v-3h-1v1h-4v-1h-2v2h-1v-2h-1v1h-1v-1h-1v1h-6v-1h-1v4h-1v-5h-1v3h-1v-1h-1v-1h-2v1h-4v-1h-1v-1h-1v1h-1v1h-3v1h-2v-3h-1v1h-1v2h-1v-1h-4v-1h-2v1h-1v-1h-1v-1h-1v1h-1v2h-1v-1h-1v1h-3v-2h-2v2h-1v-1h-2v2h-1v-2h-2v1h-1v-2h-2v2h-1v-2h-2v2h-1v-2h-1v3h-1v-1h-4v-1h-2v-1h-1v2h-1v-1h-2v-1h-1v1h-1v-1h-2v1h-1v-2h-1v1h-2v2h-1v-1h-2v1h-1v-1h-7v1h-2v2h-1v-2h-2v-3h-1v1h-2v2h-1v-2h-1v1h-1v2h-1v-3h-2v2h-1v-1h-2v3h-1v-2h-2v-2h-3v-1h-2v1h-1v-1h-1v2h-2v1h-2v1h-1v1h-2v-2h-1v3h-1v-3h-1v2h-1v-4h-1v2h-1v4h-1v-3h-1v-1h-1v-1h-1v1h-4v-1h-2v2h-1v-4h-1v3h-1v-1h-3v-1h-2v2h-2v-1h-2v-2h-1v1h-1v1h-1v-1h-1v1h-3v1h-2v-1h-2v-1h-2v-1h-1v2h-1v1h-1v-2h-2v2h-1v-1h-1z"/>
<path d="M277 519v-2h8v-1h3v1h5v-2h1v2h3v-1h2v1h2v-1h1v1h8v-1h1v1h3v-1h1v1h7v-2h1v2h8v-1h2v1h1v-1h1v1h3v-1h1v1h2v-1h1v1h7v-1h2v1h5v-3h1v3h3v-1h1v1h4v-1h1v-3h1v3h2v1h4v-1h1v1h2v-2h1v2h1v-1h1v1h4v-1h1v1h1v-1h1v2h1v-1h4v-1h1v-1h2v1h1v1h3v-2h1v1h1v-1h1v1h5v1h2v-1h6v1h3v-1h2v1h5v-1h2v1h8v-1h1v1h1v-2h1v1h1v1h3v1h1v-1h10v1h1v-1h3v-3h1v3h1v-1h1v-1h1v1h2v1h3v1h1v-1h8v-1h2v1h1v-1h1v1h2v-1h1v1h2v-1h2v1h2v-1h1v1h4v1h1v-1h2v1h1v-6h1v4h1v1h1v-1h1v1h6v1h1v-1h4v1h1v-1h4v1h1v-2h1v1h2v-1h2v1h2v-1h1v-2h1v1h1v2h1v-1h1v1h3v-1h1v1h1v-1h1v1h7v-1h2v1h1v1h1v-1h3v1h1v-1h8v-1h1v1h1v1h1v-2h1v-1h1v2h2v-1h5v1h8v-1h2v1h1v-1h2v1h2v-1h3v1h3v-1h1v1h2v-1h1v1h13v1h1v-1h4v-1h1v2h1v-1h9v-1h1v2h1v-1h2v-1h2v-1h1v1h1v1h1v-1h1v1h1v-1h2v1h4v-1h3v1h4v-1h4v1h2v-1h2v-1h2v-1h1v1h1v1h1v1h4v1h1v-1h4v-1h3v-1h1v2h1v1h1v-1h1v-1h1v1h4v1h1v-1h2v-1h6v1h1v-1h1v1h2v-1h3v1h2v-1h1v1h3v-1h1v1h4v-1h1v1h2v-1h5v1h8v-1h1v1h3v-1h1v1h2v-1h1v1h1v-1h3v1h5v-1h1v1h6v-1h1v1h19v-3h1v3h6v-1h1v1h1v-2h1v3h1v-1h1v-2h1v-1h1v2h2v1h1v-1h1v1h9v-1h1v1h4v1h1v-1h9v-1h1v1h1v-1h3v1h1v-1h1v1h1v-1h2v1h7v-1h7v1h7v1h1v-1h4v-1h2v-2h1v3h14v-1h1v1h5v-1h1v-1h1v1h2v1h2v-1h2v1h2v-1h1v1h2v1h1v-2h1v1h1v-1h3v1h5v-1h1v1h7v-1h1v1h8v-1h3v-1h1v1h1v-1h1v1h1v-1h1v1h2v-1h1v1h1v1h1v-1h1v1h1v-1h1v1h29v-1h2v1h2v-1h5v1h3v-1h1v1h5v1h1v-1h1v-1h1v1h5v-1h8v1h7v-1h3v1h3v-1h1v1h12v-2h1v2h2v-1h1v-1h1v1h1v1h4v-1h3v1h3v-1h3v1h2v-1h1v1h1v-1h3v1h6v-1h1v1h5v-1h1v1h1v-3h1v3h8v-1h1v1h3v-1h1v1h1v-1h2v1h5v-1h1v-2h1v3h1v1h1v-2h2v1h1v-1h2v1h3v-1h1v1h1v-1h2v1h1v-1h1v1h4v-1h2v-1h1v1h1v1h4v-1h1v-1h1v1h2v1h1v-1h1v1h1v-1h1v1h13v1h1v-1h3v-1h1v1h1v-1h1v-2h1v2h1v1h9v-1h5v1h6v-1h1v1h2v-1h1v1h4v-1h1v1h4v-1h1v1h2v-1h4v1h2v-1h1v1h6v-1h5v-2h1v3h4v-1h1v1h1v-1h2v1h1v-1h2v1h3v-1h2v1h1v-1h1v1h1v-1h4v1h5v-1h2v1h1v-1h1v-1h1v2h1v-1h2v1h1v-1h1v1h3v-1h3v1h2v1h1v-2h1v1h3v-2h1v2h6v-1h2v1h11v-1h5v-1h1v1h4v1h2v-2h2v1h1v1h6v-1h1v1h2v-1h2v2h1v-1h2v-1h1v1h2v-1h1v1h8v1h1v-1h2v-1h1v1h9v-1h1v1h1v-1h1v1h4v-2h1v2h3v-6h1v5h2v1h1v-1h3v1h15v-1h3v2h1v-2h1v1h6v-1h1v1h4v-1h7v1h3v-1h1v1h1v-3h1v2h1v1h8v-1h2v1h2v-1h1v1h1v-3h1v3h2v-1h1v1h3v5h-2v-1h-2v1h-1v-1h-6v1h-1v-1h-1v1h-1v-1h-8v3h-1v-2h-4v1h-3v3h-1v-3h-4v-1h-1v1h-2v-2h-7v1h-1v-1h-13v1h-1v-1h-8v1h-3v1h-1v5h-1v-5h-1v-2h-24v1h-2v-1h-13v1h-1v-1h-4v4h-1v-3h-2v-1h-2v2h-1v2h-1v-2h-1v-2h-4v1h-1v1h-2v1h-1v-1h-4v-1h-2v-1h-1v1h-3v-1h-4v1h-1v-1h-1v1h-1v-1h-1v1h-1v-1h-2v2h-1v-1h-1v2h-1v-3h-9v1h-1v-1h-11v1h-4v-1h-1v1h-1v-1h-2v1h-1v-1h-1v1h-1v-1h-2v1h-3v-1h-1v1h-1v-1h-1v1h-7v-1h-3v1h-1v-1h-3v2h-2v-1h-1v-1h-3v1h-3v-1h-8v1h-2v-1h-1v1h-1v-1h-1v1h-1v-1h-1v1h-1v3h-1v-4h-4v1h-2v-1h-10v1h-1v-1h-1v1h-3v4h-1v-4h-1v-1h-3v2h-1v3h-1v-3h-1v-1h-2v-1h-6v1h-2v-1h-3v1h-1v-1h-5v1h-1v-1h-15v1h-1v-1h-4v1h-1v-1h-3v1h-1v-1h-7v1h-1v-1h-1v1h-1v3h-1v-2h-1v-1h-1v-1h-6v1h-1v-1h-1v1h-1v-1h-2v1h-1v-1h-2v1h-1v-1h-2v1h-1v-1h-23v1h-1v1h-2v-2h-3v1h-3v-1h-3v1h-1v-1h-1v2h-1v1h-1v-2h-1v-1h-10v1h-1v-1h-1v1h-1v-1h-3v1h-1v-1h-6v1h-2v-1h-4v1h-2v1h-4v-1h-4v-1h-8v1h-1v-1h-3v1h-1v-1h-1v1h-1v1h-1v1h-1v-1h-1v-2h-15v1h-1v-1h-17v1h-4v-1h-4v1h-1v1h-1v1h-2v-1h-3v-2h-3v1h-2v1h-1v-1h-2v-1h-3v1h-1v-1h-1v1h-1v-1h-11v1h-1v-1h-8v1h-1v-1h-6v1h-1v-1h-4v1h-1v-1h-10v1h-2v-1h-4v1h-1v1h-2v-2h-1v1h-1v-1h-2v2h-3v-1h-2v-1h-3v2h-8v-2h-8v1h-1v-1h-3v1h-2v-1h-4v1h-3v-1h-1v1h-1v-1h-4v3h-1v-3h-1v1h-4v-1h-5v1h-1v-1h-5v3h-1v1h-1v-2h-1v-1h-3v-1h-1v1h-1v-1h-11v1h-1v-1h-28v1h-1v1h-1v-1h-2v-1h-1v1h-1v-1h-2v1h-1v-1h-3v1h-2v-1h-3v1h-1v-1h-1v1h-2v-1h-3v1h-3v-1h-1v1h-1v-1h-2v1h-4v-1h-1v1h-1v-1h-3v1h-2v-1h-4v2h-2v1h-1v-1h-2v-1h-1v-1h-1v1h-2v1h-1v-2h-1v1h-1v-1h-3v1h-1v-1h-5v1h-1v-1h-1v1h-3v-1h-3v2h-2v1h-2v-1h-2v-2h-1v1h-1v-1h-10v3h-1v-3h-1v1h-1v-1h-1v1h-1v-1h-3v1h-3v1h-4v-1h-1v1h-2v-2h-1v1h-3v-1h-1v2h-1v-2h-1v1h-1v-1h-1v1h-2v-1h-2v3h-1v-2h-1v1h-1v-2h-13v1h-2v-1h-9v1h-1v-1h-5v1h-1v-1h-5v1h-2v-1h-1v2h-2v-2h-3v1h-1v-1h-6v1h-1v-1h-1v1h-1v-1h-7v1h-1v-1h-5v1h-1v-1h-1v1h-1v-1h-2v1h-1v-1h-9v2h-1v1h-1v-1h-1v-2h-1v1h-1v-1h-5v1h-1v-1h-5v3h-1v-2h-1v-1h-8v1h-1v-1h-1v1h-3v-1h-3v1h-2v-1h-1v1h-1v-1h-5v1h-1v-1h-3v1h-1v-1h-2v1h-2v-1h-2v1h-2v-1h-5v3h-1v-3h-5v2h-1v1h-1v-3h-5v1h-1v2h-1v-3h-1v1h-1v-1h-4v1h-1v-1h-6v3h-2v-3h-10v1h-1v-1h-1v1h-1v-1h-7v1h-2v-1h-2v1h-1v1h-1v-2h-3v1h-3v-1h-1v2h-1v1h-2v-1h-1v1h-1v-2h-1v-1h-2v1h-3v-1h-5v1h-1v-1h-5v1h-1v-1h-3v1h-1v-1h-2v2h-1v-2h-5v3h-1v1h-1v-2h-1v-2h-1v1h-1v-1h-3v1h-3v-1h-6v1h-3v-1h-1v1h-2v-1h-1v2h-1v-2h-7v2h-1v-2h-11v1h-1v-1h-8v1h-1v-1h-3v1h-2v-1h-1v1h-2v-1h-4v3h-1v-2h-1v-1h-3v1h-2v-1h-4v1h-1v-1h-4v1h-1v-1h-8z"/>
<path d="M277 549v-2h8v-1h2v1h1v-1h6v1h1v-4h1v3h1v-1h1v1h3v1h5v-1h1v1h6v-1h3v-1h1v1h2v1h2v-1h2v1h5v-2h1v1h2v2h1v-1h6v-2h1v-1h1v1h1v2h1v-1h2v1h3v1h1v-1h2v1h1v-1h7v-1h5v1h4v-1h1v1h4v-1h2v-1h1v1h2v1h2v1h1v-1h20v-1h1v1h4v-1h2v-1h2v-1h1v2h2v1h1v-1h1v1h4v-1h2v1h2v-1h1v1h2v1h1v-2h1v1h1v1h1v-1h1v-1h1v-2h1v1h1v1h2v1h1v-1h1v2h1v-2h1v1h1v-1h1v1h2v1h1v-1h7v-1h1v-1h1v2h3v1h1v-1h1v-1h2v1h10v1h1v-2h1v-1h1v2h2v-1h2v1h6v-1h2v1h4v-1h3v1h2v-2h1v1h1v1h5v1h1v-1h9v1h1v-1h2v-1h2v1h5v-1h1v1h6v-1h3v-2h1v1h2v1h3v1h4v-1h1v1h2v-1h1v1h1v-1h2v-1h1v2h1v-1h1v1h2v-1h3v1h6v-1h3v1h1v-1h2v1h1v-1h1v1h5v-5h1v5h6v-1h1v1h6v-1h1v1h3v-1h1v1h1v-1h4v1h8v-3h1v3h2v-1h2v1h3v-1h1v1h1v-1h2v1h1v-1h1v1h3v-1h1v1h11v-1h1v1h3v-3h1v3h18v-3h1v3h11v-1h3v1h5v1h1v-1h7v-1h1v1h2v-1h4v1h2v-1h1v1h8v-1h1v1h1v-1h1v1h5v1h1v-1h10v-1h2v1h7v1h1v-1h2v-1h1v1h4v-1h1v1h1v-1h2v1h11v-2h2v2h2v-1h1v1h2v1h1v-2h1v1h2v1h1v-1h4v-1h2v1h1v-1h1v1h1v-1h1v-1h1v1h2v1h1v-1h3v1h1v-1h2v-1h1v1h2v1h2v1h1v-1h1v-1h2v1h2v-1h1v1h1v-1h2v1h8v-1h1v1h1v-1h3v1h3v-1h1v1h6v-1h3v-1h2v2h4v-1h1v1h4v-1h1v1h1v-1h5v1h2v-1h3v-1h1v2h1v-1h1v1h13v-1h1v1h5v-1h1v1h1v-2h1v1h1v1h1v-2h1v2h1v1h1v-1h3v-1h1v1h4v-1h1v1h4v-1h1v1h20v-1h1v1h1v-1h1v1h2v-1h1v1h4v-1h1v1h1v-3h1v3h7v-1h1v1h9v-1h1v1h7v1h1v-1h1v-1h2v1h4v-1h1v1h1v-1h1v1h1v-1h1v1h5v-1h1v1h4v-1h2v-1h4v-1h1v2h2v1h1v-1h1v-3h1v3h1v1h6v-1h3v1h2v-1h2v1h2v-1h1v-1h1v1h1v1h11v-1h4v1h1v-1h2v1h1v-1h1v1h2v-1h1v1h2v-1h1v2h1v-1h2v-1h1v1h2v-2h1v2h2v-1h4v1h1v-2h1v2h1v-1h1v-1h1v1h2v1h1v-1h3v1h5v-1h1v1h1v-1h3v1h17v-1h1v2h1v-1h5v-1h1v1h4v-1h1v1h2v-1h6v1h5v-1h3v1h5v-1h1v1h5v1h1v-2h2v1h1v-1h2v1h2v1h1v-1h2v-1h3v1h8v-1h1v1h8v-1h2v-1h2v2h2v-1h1v1h14v-1h1v1h2v-1h1v1h5v-2h1v2h3v1h1v-2h2v1h1v-1h1v-1h2v2h2v-1h1v1h3v-1h1v1h2v-1h1v1h10v-2h1v1h2v-1h2v3h1v-1h4v-1h2v1h1v-4h3v-1h2v1h1v-2h1v2h1v-1h2v1h2v1h2v-1h4v-2h1v2h1v-1h1v1h1v-1h1v1h1v1h1v-1h1v1h2v-1h1v-1h1v2h1v-2h2v2h2v1h2v-1h1v-1h1v1h2v-1h1v-1h2v1h5v-1h1v1h2v-2h2v1h1v1h2v1h1v-1h3v1h2v-1h2v1h1v-2h1v3h1v-2h1v1h1v-2h1v-2h1v3h3v-1h2v1h2v-2h1v2h4v2h1v-2h1v-1h1v2h1v-1h1v1h2v-3h1v1h3v1h1v1h2v-3h2v-1h2v1h1v2h1v1h3v-1h1v1h1v-1h1v-1h4v1h4v-1h3v1h1v-1h1v-1h1v1h2v2h1v-2h2v-2h1v3h2v-1h1v1h1v-1h1v1h1v1h1v-2h2v-1h5v-3h1v3h3v1h1v1h4v-1h4v-1h1v3h1v-1h1v1h1v-3h1v-1h1v1h2v1h1v-1h2v2h1v-1h1v1h2v13h-2v1h-1v2h-1v-3h-3v2h-4v-1h-2v-1h-1v1h-3v1h-1v-1h-3v1h-2v-1h-1v1h-8v-2h-1v1h-2v-1h-4v1h-6v-1h-1v1h-1v2h-1v-3h-5v-1h-1v1h-2v1h-1v-3h-1v2h-1v-1h-3v1h-1v1h-2v-2h-1v2h-2v-2h-1v1h-1v3h-1v-1h-1v-3h-2v1h-1v-1h-1v1h-2v-1h-1v3h-1v-3h-1v1h-1v-1h-2v1h-2v-1h-4v1h-1v-1h-2v1h-2v-1h-4v-1h-1v1h-1v1h-1v1h-3v-2h-1v1h-4v1h-1v-1h-1v-1h-1v2h-1v-1h-2v1h-1v-1h-1v1h-2v1h-2v-2h-2v1h-1v-1h-1v-1h-1v1h-1v-2h-1v1h-3v1h-2v1h-1v1h-2v-1h-6v-1h-1v-1h-1v-1h-1v1h-1v2h-3v2h-1v-1h-2v-1h-3v1h-1v-3h-1v1h-1v1h-1v-1h-1v1h-1v-2h-1v2h-3v-2h-2v1h-1v1h-2v1h-1v-6h-1v1h-1v-1h-2v1h-1v-1h-2v1h-1v1h-3v-1h-2v-1h-6v1h-1v-1h-3v1h-1v-1h-2v1h-1v-1h-1v1h-1v-1h-2v1h-1v-1h-1v1h-3v-1h-1v1h-1v-1h-1v1h-2v-1h-1v1h-1v-1h-3v1h-1v-1h-4v1h-1v-1h-1v1h-2v-1h-5v1h-2v-1h-1v1h-1v-1h-4v1h-2v3h-1v-2h-1v-2h-1v1h-1v-1h-9v1h-2v-1h-6v1h-2v1h-1v-2h-7v1h-1v-1h-11v1h-2v-1h-4v-1h-1v1h-6v1h-2v-1h-1v-1h-1v2h-1v-1h-2v1h-1v-1h-9v1h-1v-1h-1v1h-1v-2h-1v1h-9v1h-2v-1h-1v1h-1v4h-1v-5h-1v1h-2v-1h-8v1h-1v-1h-1v1h-1v-1h-1v1h-1v1h-1v1h-1v-1h-1v-1h-1v-1h-1v1h-1v-1h-4v1h-1v-1h-10v1h-2v-1h-7v1h-4v-1h-7v1h-1v-1h-2v1h-4v-1h-1v1h-2v-1h-10v1h-1v-1h-6v2h-1v-1h-1v2h-2v-1h-2v-2h-3v1h-1v-1h-28v1h-1v-1h-10v-1h-1v1h-2v1h-1v-1h-3v2h-1v-2h-18v1h-2v-1h-1v1h-1v-1h-1v2h-1v-2h-3v1h-1v-1h-1v1h-3v-1h-1v1h-1v-1h-2v-1h-1v2h-3v-1h-1v1h-1v-1h-6v2h-1v-2h-6v1h-1v-1h-1v1h-2v-1h-3v1h-1v-1h-2v1h-1v-1h-2v1h-1v-1h-1v1h-2v-1h-3v1h-4v-1h-6v1h-2v-1h-2v1h-2v-1h-5v1h-1v3h-1v-2h-1v-1h-1v-1h-6v1h-1v-1h-1v1h-2v1h-1v-2h-11v1h-2v-1h-1v1h-1v-1h-4v-1h-1v1h-1v1h-2v-1h-5v-1h-1v1h-5v2h-1v-1h-5v-1h-19v2h-2v-2h-1v1h-1v-1h-5v1h-2v-1h-8v1h-1v-1h-6v1h-1v-1h-2v1h-1v-1h-3v1h-1v1h-1v-1h-3v1h-1v-2h-6v1h-4v-1h-16v1h-1v1h-1v-2h-8v1h-1v1h-1v-1h-1v-1h-1v1h-1v-1h-4v2h-1v-1h-2v-1h-1v1h-1v-1h-11v1h-1v-1h-3v1h-2v-1h-4v1h-1v-1h-3v1h-1v-1h-2v3h-1v-3h-11v1h-2v-1h-2v1h-2v-1h-3v2h-1v-1h-1v-1h-3v1h-2v-1h-2v1h-1v-1h-1v1h-1v-1h-3v1h-2v-1h-1v1h-1v-1h-2v1h-4v-1h-7v1h-1v-1h-1v1h-2v-1h-7v1h-1v10h-1v-8h-1v-3h-1v1h-1v-1h-1v1h-2v-1h-3v1h-2v1h-1v-2h-1v-1h-1v1h-1v1h-1v-1h-3v1h-1v-1h-6v1h-1v-1h-1v1h-1v-1h-2v1h-2v-2h-1v2h-2v-1h-3v1h-3v1h-3v-1h-2v-1h-11v2h-1v-2h-2v1h-1v-1h-1v1h-1v-1h-3v1h-4v-1h-3v4h-1v-4h-2v1h-2v-1h-1v2h-1v-2h-1v1h-1v-1h-8v2h-1v-2h-6v1h-2v-1h-6v1h-2v-1h-2v1h-2v-1h-4v1h-1v-1h-3v1h-1v-2h-1v1h-1v1h-3v-1h-2v1h-1v-1h-3v1h-2v-1h-6v1h-1v1h-2v-1h-1v1h-1v-1h-2v-1h-2v1h-1v-1h-1v1h-1v-1h-3v1h-1v-1h-6v1h-1v-1h-1v1h-1v1h-1v1h-1v-1h-2v-2h-9v-1h-1v1h-3v1h-1v-1h-2v1h-1v-2h-1v1h-10v1h-1v-1h-3v1h-1v-1h-1v1h-3v-1h-1v1h-7v-1h-1v-1h-1v1h-5v1h-4v-1h-6v-1h-1v1h-1v1h-2v1h-2v-1h-1v-1h-2v1h-6v-1h-2v1h-3v-1h-4v1h-3v1h-1v-1h-3v-1h-3v1h-1v-1h-2v1h-1v-2h-1v1h-3v1h-1v1h-1v-1h-6v-1h-3v3h-1v-3h-1v-1h-1v1h-5v1h-1v-1h-1v1h-1v1h-1v-2h-2z"/>
<path d="M277 579v-6h1v-1h1v-1h3v1h1v2h1v-2h1v-1h3v2h1v-1h1v-1h1v1h5v-1h1v1h2v-1h1v1h1v-2h1v2h1v-1h2v1h2v1h1v-1h2v1h1v-2h1v2h1v-2h3v-1h1v1h4v2h1v-1h1v1h3v-2h1v1h1v1h2v-1h2v-1h3v1h1v-1h1v2h2v-1h2v2h1v-2h1v-1h1v2h1v-1h2v-3h1v3h1v-1h1v1h4v1h1v-2h1v1h1v2h1v-2h1v-1h1v2h1v-1h4v-4h1v4h1v1h1v-1h3v1h4v-1h2v-1h1v1h1v-1h1v1h1v1h1v-1h1v-1h3v1h2v2h1v-2h1v1h1v-1h3v-1h1v1h1v2h1v-3h1v1h1v-1h1v-1h1v2h1v-1h4v-1h1v3h2v1h2v-2h1v1h3v-2h1v-1h5v1h1v1h5v-1h1v1h1v-1h2v1h1v-1h1v2h1v-1h1v-2h1v2h2v1h1v-2h1v1h1v1h2v-3h1v1h3v2h1v-2h1v-1h1v1h2v1h2v-1h1v2h1v-2h1v2h1v-1h1v2h1v-1h1v-1h2v-2h3v-1h1v1h1v1h1v3h1v-1h1v-1h2v3h1v-2h1v-1h2v1h1v-1h1v-1h2v1h1v1h1v-1h1v1h1v-1h1v1h2v-3h1v1h3v1h1v-2h1v1h1v1h1v-1h1v-1h2v2h2v-1h1v2h1v-1h3v-1h3v2h2v1h1v-2h3v-1h1v1h2v-1h3v1h1v1h2v-1h2v-1h1v-4h1v3h1v2h3v-1h1v2h3v1h1v-1h1v-1h1v1h2v-1h1v-1h1v1h1v-1h1v1h1v-1h1v2h1v-1h1v1h1v-2h1v2h1v1h1v-2h1v2h1v-2h1v1h2v-1h1v-1h1v-1h1v3h2v-1h5v-1h7v-1h1v2h2v-1h1v2h1v-1h1v-1h1v-1h1v-1h1v1h1v3h1v-2h1v2h1v-2h3v1h1v-1h2v2h5v1h2v-1h1v1h1v-1h3v1h1v-1h2v1h2v1h1v-3h1v1h1v-1h1v-1h1v-1h1v1h1v1h1v1h1v-1h1v1h2v-1h1v-2h1v2h2v-2h1v1h1v2h2v-1h1v1h1v-1h1v-2h1v1h1v1h1v-1h1v2h1v-2h2v2h1v-2h1v1h3v-1h1v1h1v-2h1v1h1v1h3v1h1v-2h3v1h1v-2h1v3h1v-1h3v-1h1v2h1v-2h2v1h1v2h1v-1h1v-1h2v-1h1v1h3v1h1v-1h1v-1h1v2h2v-1h1v1h2v-1h2v-2h2v3h1v-1h1v-1h3v2h1v-2h1v2h2v-2h4v1h2v-1h1v2h2v-1h1v1h3v-1h1v-2h1v1h2v-1h1v-1h1v3h1v-1h1v1h4v1h1v-1h2v1h2v1h1v-1h3v1h1v-2h1v2h1v-1h2v2h1v-3h1v1h2v-2h1v2h2v-1h1v2h1v-2h1v-1h2v-1h1v1h3v1h2v-5h1v6h2v-1h1v2h1v-1h2v-1h3v1h5v-2h2v1h2v-1h1v2h1v-2h1v1h1v-2h1v1h1v1h1v1h3v-1h2v1h2v-3h1v2h4v-1h2v-1h1v2h1v1h3v1h1v-3h1v1h1v1h2v-1h1v1h1v-1h1v1h1v-2h1v4h3v1h1v-1h2v1h2v1h1v-1h4v-1h1v1h1v-1h1v2h1v-1h6v1h2v-1h5v1h1v-1h3v1h1v-1h1v1h1v-2h1v1h1v-1h1v1h1v-1h1v1h1v-1h1v2h1v-1h5v-1h1v1h2v-1h2v2h1v-1h1v1h5v-2h1v1h2v-1h1v-1h1v2h1v1h1v-1h2v-1h3v1h4v1h3v-1h2v1h3v-2h1v1h1v1h1v-1h1v1h1v-1h1v-1h1v1h2v1h1v-1h1v1h2v-2h2v-3h1v3h2v-1h1v2h3v1h1v-1h1v1h1v-2h1v1h1v-1h1v1h6v-1h3v1h1v-1h1v1h3v1h3v-1h6v1h1v-1h4v-1h1v-1h1v1h2v2h1v-1h1v1h2v-1h1v1h1v-1h2v1h1v-1h1v1h1v-2h1v1h3v1h6v-1h2v-1h3v2h1v-1h1v1h1v-1h1v-1h2v1h2v1h3v-1h3v1h1v-1h1v-1h1v1h1v1h1v-2h1v2h1v-1h1v1h1v-1h1v-1h2v-2h1v2h2v2h1v-1h1v1h1v-1h5v-1h1v1h1v1h2v-1h2v1h3v-1h1v-1h3v-1h1v1h1v-1h1v1h3v2h1v-1h1v1h1v-1h1v1h1v-1h2v1h1v-1h1v1h1v-1h3v1h3v-3h1v2h2v1h1v-1h2v1h1v-1h1v-1h1v2h1v-1h1v-1h4v1h2v1h1v-1h5v-1h1v2h1v-1h1v1h3v-2h2v-3h1v3h1v1h4v1h2v-1h5v1h1v-1h1v1h1v-1h1v1h1v-1h1v1h1v-1h1v-1h2v-1h2v3h1v-1h1v1h4v-1h1v1h3v-2h2v1h2v-1h1v1h2v1h1v-1h2v1h4v-2h1v1h1v1h2v-1h1v-1h2v1h2v1h1v-1h4v1h4v-1h6v1h2v-1h1v-3h1v3h1v-3h1v3h2v-1h1v1h4v-1h3v2h2v-1h5v-1h1v1h1v-1h1v1h2v1h1v-1h2v1h1v-1h1v-1h1v2h1v-1h3v-1h1v2h1v-1h1v-1h2v2h1v-1h1v-1h6v1h1v1h1v-1h1v1h1v-1h1v1h1v-1h1v-1h1v1h1v1h2v-1h1v-1h1v1h3v-1h2v1h5v-1h3v1h1v1h1v-1h3v1h2v-1h3v1h2v-1h4v-1h2v1h1v-1h1v1h1v-1h2v1h1v-1h1v1h1v-1h2v1h1v-1h3v-3h1v3h2v2h1v-1h2v-1h2v-3h1v3h1v1h2v-1h2v1h1v-1h1v1h1v-2h1v3h1v-1h1v1h1v-1h1v1h1v-1h3v1h1v-1h1v1h2v-1h1v-1h2v-1h1v1h1v1h3v-1h1v1h1v1h1v-1h1v1h1v-1h3v-1h1v1h1v-1h2v1h4v1h1v-1h2v-1h1v-1h1v1h1v1h1v1h1v-1h3v1h1v-1h4v1h1v-2h1v2h3v-1h4v1h1v-1h2v1h2v-2h1v1h6v-1h1v-2h1v1h2v1h1v1h2v1h1v-1h2v-1h2v-3h1v4h2v-1h1v2h1v-1h4v1h2v-2h2v1h2v-1h1v1h2v1h1v-1h1v-2h1v3h1v-1h4v1h1v-1h2v1h1v-1h1v1h1v-1h1v6h-3v1h-1v1h-2v1h-1v-2h-2v-1h-3v1h-2v-1h-1v1h-1v-1h-2v1h-1v-1h-1v1h-2v1h-1v-1h-1v1h-2v-1h-1v1h-1v-1h-1v1h-1v-1h-1v-1h-1v1h-2v1h-1v-2h-1v1h-3v-1h-1v2h-1v1h-1v1h-2v-2h-4v-2h-2v1h-1v-1h-2v1h-2v1h-2v-1h-1v-1h-4v1h-1v1h-1v-2h-2v5h-1v-4h-3v1h-2v-1h-2v1h-1v-2h-1v2h-3v-1h-3v2h-1v-2h-1v-1h-3v1h-1v-1h-3v1h-3v-1h-2v1h-2v-1h-1v1h-1v-1h-1v2h-1v2h-1v-2h-1v-1h-4v-1h-1v1h-2v1h-1v-1h-4v-1h-1v1h-1v-1h-1v1h-2v1h-1v-1h-1v-1h-5v1h-1v-1h-2v1h-1v-1h-1v2h-2v4h-1v-3h-1v-1h-2v-1h-1v1h-1v-1h-1v1h-1v-1h-2v-1h-1v1h-4v-1h-1v1h-4v1h-3v-1h-1v1h-1v-2h-1v1h-1v-1h-1v1h-1v-1h-1v1h-5v1h-2v-1h-4v-1h-1v1h-2v1h-1v-1h-1v-1h-2v1h-2v1h-1v1h-1v-1h-5v-1h-3v1h-1v-1h-6v1h-2v-2h-1v2h-3v-1h-2v1h-2v-1h-1v-1h-1v1h-7v1h-1v-1h-4v1h-1v-1h-1v1h-2v-1h-2v1h-2v-1h-3v1h-1v-1h-1v-1h-2v3h-1v-1h-1v-2h-1v1h-7v-1h-1v1h-4v-1h-2v1h-3v1h-2v-1h-3v1h-1v-1h-1v-1h-2v1h-2v3h-1v-2h-1v-1h-2v-1h-1v2h-1v-1h-3v1h-2v-1h-2v1h-1v-1h-3v-1h-1v1h-1v-1h-1v1h-1v2h-1v-1h-1v1h-1v-1h-1v-2h-4v1h-6v-1h-3v1h-2v-1h-1v1h-2v1h-4v-1h-1v2h-1v-1h-1v1h-1v-3h-1v1h-4v-1h-2v4h-1v-3h-2v-1h-2v1h-1v1h-1v-1h-1v1h-3v-2h-2v1h-3v-1h-2v1h-2v-1h-1v1h-4v-1h-1v1h-1v-1h-1v1h-1v-1h-1v1h-5v1h-2v1h-3v-1h-4v-1h-1v2h-1v-2h-3v-1h-1v1h-6v-1h-2v1h-3v1h-1v-1h-1v1h-1v2h-1v-3h-1v1h-1v-1h-1v1h-1v-1h-2v-1h-1v1h-1v-1h-1v1h-2v-1h-1v1h-2v-1h-3v1h-7v-1h-3v2h-2v-1h-1v-1h-3v1h-2v1h-1v-2h-1v2h-1v-1h-1v1h-2v-1h-2v-1h-1v1h-2v-1h-1v1h-3v-1h-1v1h-3v1h-1v-1h-1v1h-1v-1h-2v-1h-1v1h-1v-1h-2v1h-3v-1h-3v2h-2v-1h-1v-1h-1v1h-3v2h-1v-1h-1v-2h-2v1h-1v-1h-5v1h-2v-1h-6v1h-3v-1h-2v1h-1v1h-1v-1h-1v1h-2v-2h-1v1h-4v-1h-1v1h-1v1h-1v-1h-2v-1h-1v1h-3v1h-1v-1h-1v-1h-1v2h-2v-1h-2v-1h-1v1h-3v-1h-2v3h-1v-2h-2v-1h-5v1h-1v-1h-1v1h-1v-1h-3v1h-1v-1h-1v1h-2v-1h-2v1h-5v-1h-3v2h-3v-1h-8v1h-1v-1h-2v1h-1v-1h-2v-1h-2v2h-1v-1h-5v-1h-1v2h-1v-2h-1v1h-4v-1h-1v2h-3v-1h-1v2h-1v-1h-1v3h-1v1h-1v-1h-5v-2h-2v1h-2v1h-1v-1h-1v3h-1v-2h-1v1h-2v-3h-1v2h-1v-1h-1v1h-1v1h-3v-2h-2v1h-2v-1h-1v1h-1v-1h-1v1h-2v2h-1v-2h-1v1h-1v-1h-1v-1h-1v-1h-1v1h-1v-1h-1v1h-2v1h-2v-2h-2v2h-1v1h-1v-4h-1v2h-1v-1h-1v2h-4v1h-6v-2h-1v2h-2v-2h-1v3h-1v-3h-2v1h-5v-1h-1v-1h-2v1h-2v2h-3v1h-1v-1h-3v-2h-1v1h-2v1h-2v-1h-1v2h-1v-1h-1v-3h-1v3h-1v1h-1v-2h-1v1h-1v1h-2v-1h-1v-2h-1v1h-2v-1h-1v2h-4v1h-1v-1h-1v-2h-2v2h-1v-1h-1v-2h-1v2h-1v-1h-1v1h-1v-2h-2v1h-2v1h-2v1h-1v-3h-1v3h-1v-1h-1v1h-1v1h-1v1h-1v-2h-3v-1h-2v-1h-1v1h-1v1h-1v-1h-1v-1h-1v1h-1v-1h-3v1h-2v1h-2v-2h-1v1h-1v1h-1v1h-1v-1h-1v-3h-1v2h-2v-1h-1v1h-2v-2h-1v3h-2v-1h-2v-2h-1v3h-2v-1h-1v1h-2v-1h-1v1h-1v-1h-5v1h-1v-1h-1v-1h-2v1h-3v-1h-4v3h-1v1h-1v-2h-1v-3h-2v1h-1v1h-1v-1h-1v-1h-1v-1h-1v1h-1v1h-2v2h-1v-1h-1v1h-1v-2h-1v2h-1v-1h-2v-3h-1v2h-1v-1h-1v1h-1v2h-2v-2h-1v1h-2v1h-3v-2h-1v1h-1v2h-2v-2h-1v-1h-1v1h-1v1h-1v2h-1v-2h-1v-2h-1v3h-1v-1h-2v-1h-1v1h-1v-1h-2v1h-1v1h-3v-1h-2v1h-1v-2h-2v1h-1v-2h-3v2h-1v-2h-1v2h-1v-1h-1v1h-1v-2h-1v-1h-1v2h-1v2h-1v-2h-1v1h-1v-1h-1v1h-1v-1h-1v-1h-1v1h-2v-1h-1v-1h-1v2h-3v-1h-1v1h-3v1h-1v1h-1v-1h-1v-1h-1v-1h-1v1h-3v-1h-1v1h-2v-1h-1v-2h-1v2h-2v1h-2v1h-1v1h-1v-1h-1v-1h-3v1h-1v-1h-1v1h-1v-1h-1v1h-1v-1h-2v1h-2v2h-1v-2h-5v-1h-1v2h-2v-3h-2v1h-1v5h-1v-5h-1v1h-1v-1h-1v-1h-1v-1h-1v2h-2v-2h-1v2h-1v-1h-1v1h-1v-1h-3v1h-1v1h-1v1h-4v-1h-1v-1h-1v-1h-1v1h-1v-1h-1v-1h-1v1h-1v1h-2v2h-1v-2h-1v-1h-1v2h-1v2h-1v-2h-4v-1h-2v-1h-1v1h-5v1h-3v-1h-2v-1h-1v1h-2v1h-1v-1h-3v-1h-1v-1h-2v1h-2v2h-1v1h-1v1h-1v-1h-2v-2h-1v-1h-1v-2h-1v1h-1v1h-1v-1h-1v1h-2v1h-4v1h-1v-2h-1v1h-2v1h-1v-1h-3v1h-1v-1h-2v-2h-1v1h-1v1h-1v-3h-3v1h-1v3h-3v-1h-1v1h-1v-2h-1v1h-4v-1h-1v1h-1v-1h-2v-1h-1v2h-1v-2h-1v1h-1v1h-2v1h-1v-2h-1v1h-4v2h-1v-2h-1v2h-1v-1h-1v1h-1v-1h-1v-2h-1v1h-4v-1h-1v2h-1v-2h-1v1h-2v-1h-1v1h-1v-3h-1v3h-2v1h-1v-2h-2v1h-1v-1h-2v-1h-1v2h-1v-1h-2v1h-1v-2h-1v3h-1v-3h-1v2h-1v-1h-3v2h-4v1h-1v-1h-4v-2h-1v1h-1v-1h-1v1h-1v1h-1v-2h-1v1h-2v2h-1v-2h-2v2h-1v-1h-2v-1h-1v-1h-1v1h-1v1h-1v-1h-1v1h-4v-1h-1v1h-4v-1h-1v-3h-1v3h-3v1h-1v-1h-1z"/>
<path d="M277 609v-2h10v-1h1v1h10v-1h2v-1h3v1h2v-1h1v2h4v-1h3v1h2v-1h1v1h5v-1h1v1h2v-1h1v1h1v-1h1v1h8v1h1v-3h1v-1h1v3h1v-1h1v1h1v-1h1v1h2v-1h2v1h1v-1h3v-1h1v2h1v-1h1v1h1v-1h2v1h1v-1h2v1h15v-1h1v1h1v-1h1v1h7v-1h1v1h1v-3h1v3h1v-1h1v1h6v-1h2v1h5v-1h1v1h1v-1h1v-3h1v4h3v-1h1v1h10v-1h3v1h4v-1h1v1h7v-1h1v-1h1v1h1v1h3v-1h1v1h1v-1h3v1h7v1h1v-2h1v1h6v-2h1v2h1v-1h1v1h2v-1h1v1h2v-1h1v-3h1v3h1v1h10v-1h2v1h1v-1h2v1h11v-1h2v1h1v-1h1v1h3v-1h2v1h6v-2h1v-2h1v3h1v1h13v-1h1v1h1v-1h1v2h1v-1h2v-1h1v-1h2v2h2v-1h2v1h3v-1h5v-1h1v1h4v1h6v-1h1v1h19v1h1v-1h2v-1h1v1h1v1h1v-1h1v-1h2v-1h1v1h5v1h2v-1h2v1h1v-1h1v1h1v-1h1v1h1v-1h1v1h1v-1h1v1h2v1h1v-1h1v-1h2v1h10v-1h3v1h6v1h1v-1h3v-1h1v1h6v-1h2v1h1v-1h2v-2h1v3h1v1h1v-1h2v-1h3v-1h1v1h4v2h1v-1h10v-1h1v-1h1v2h1v-1h1v1h5v1h1v-1h2v-1h1v1h2v-2h1v2h1v-1h1v1h1v-1h1v1h1v-1h1v1h6v-1h5v1h4v-2h1v2h1v-1h1v1h1v-1h1v1h3v-1h1v1h9v-1h2v1h2v-1h1v1h9v-1h2v1h9v-1h1v1h3v-1h1v1h3v-1h1v1h1v-1h3v1h5v-1h1v1h1v-1h1v1h1v-1h1v1h1v-1h1v1h2v-1h1v1h1v1h1v-1h1v-1h9v1h2v-1h1v1h1v-1h1v-1h2v1h1v1h12v-1h1v1h1v-1h3v1h6v-1h1v1h2v-1h1v1h14v-1h1v1h5v1h1v-2h3v-1h1v1h1v1h10v-1h1v1h2v1h1v-1h1v-1h3v1h4v-1h1v1h1v-1h1v1h1v1h1v-2h1v1h1v1h1v-1h9v-1h2v-3h1v4h11v1h1v-1h2v-1h3v1h4v-1h1v1h1v1h1v-2h1v-2h1v3h1v-1h1v1h4v-1h1v1h7v-1h1v1h11v-1h2v1h1v-1h1v1h1v-1h1v1h4v-1h2v1h1v-1h2v1h1v-1h1v1h6v-1h1v1h4v-1h1v1h6v-1h8v1h2v-1h1v1h1v-1h2v1h3v-1h2v-1h2v1h1v1h3v-1h1v-1h1v2h3v-1h1v1h4v-1h1v1h3v-1h1v1h2v-1h2v1h4v-1h1v1h9v-1h1v1h5v-1h1v1h1v-1h1v1h1v-1h3v-1h1v1h1v1h2v1h1v-1h1v-1h1v1h8v-1h1v1h1v1h1v-2h1v1h9v-1h1v2h1v-2h1v1h7v-1h1v1h1v-1h1v1h3v-1h1v1h9v-1h1v1h3v-1h2v1h3v-3h1v2h1v1h3v-1h2v-1h1v-1h1v2h2v1h15v-1h4v-1h1v1h1v-1h1v1h1v1h2v-1h1v1h6v-1h1v1h3v-1h2v1h1v-1h3v1h7v-1h2v-1h1v1h1v1h10v1h1v-1h1v1h1v-1h1v-1h1v-1h1v2h4v-3h1v3h1v-1h1v1h2v1h1v-1h7v1h1v-2h1v1h3v-1h1v1h10v-1h2v1h5v-2h1v2h1v-1h3v1h1v-1h1v-3h1v4h2v-1h1v1h2v-1h2v1h8v-2h1v-1h1v2h1v1h3v-1h1v1h1v1h1v-1h14v-1h1v1h7v1h1v-1h4v1h1v-1h13v-1h1v1h9v-1h2v1h7v-1h4v1h1v-1h1v1h4v-1h1v1h6v-1h2v1h9v-1h1v1h1v-1h2v1h1v1h1v-2h1v1h1v-1h1v1h1v-1h2v1h12v-1h1v1h1v-1h3v1h4v-1h1v-2h1v3h1v-1h3v1h4v-1h1v1h1v4h-3v1h-3v-1h-4v3h-1v-1h-1v-2h-1v1h-2v-1h-5v1h-1v-1h-8v1h-2v-1h-20v1h-1v-1h-1v1h-2v-1h-6v1h-1v-1h-6v2h-1v-2h-1v1h-1v1h-2v-2h-2v1h-1v-1h-2v1h-1v-1h-5v1h-1v-1h-3v1h-1v-1h-7v1h-3v-1h-1v1h-1v-1h-1v1h-5v-1h-1v1h-3v-1h-10v1h-1v-1h-1v1h-1v-1h-6v1h-1v-1h-1v1h-2v-1h-1v1h-2v-1h-2v1h-1v4h-1v-3h-1v-2h-10v1h-1v-1h-4v4h-1v-2h-1v-2h-2v1h-1v1h-1v-2h-2v1h-1v-1h-1v1h-1v-1h-2v1h-2v1h-3v-2h-10v1h-1v-1h-17v3h-1v-3h-3v3h-1v-3h-7v1h-1v-1h-2v2h-1v-2h-2v2h-1v1h-1v-3h-6v1h-1v-1h-1v1h-4v-1h-12v1h-2v-1h-1v1h-1v1h-3v1h-2v-1h-3v-2h-1v1h-6v-1h-8v2h-1v1h-2v-1h-1v1h-1v-1h-1v-2h-1v1h-1v-1h-5v1h-1v-1h-3v1h-5v-1h-4v1h-2v-1h-1v1h-1v-1h-4v1h-2v-1h-4v1h-1v-1h-5v1h-1v-1h-5v1h-1v-1h-4v1h-1v-1h-2v2h-1v-1h-3v-1h-4v1h-2v-1h-2v2h-1v1h-1v-1h-1v-2h-5v1h-3v-1h-9v1h-1v-1h-4v1h-2v-1h-6v1h-3v-1h-3v1h-1v-1h-4v1h-1v-1h-3v1h-1v-1h-2v2h-2v2h-1v-1h-1v-1h-1v-2h-8v1h-1v1h-8v-1h-2v3h-1v-4h-4v1h-2v-1h-11v1h-2v-1h-3v1h-1v-1h-7v1h-1v-1h-3v1h-3v-1h-1v1h-1v-1h-2v1h-2v-1h-14v1h-1v4h-1v-3h-1v-2h-8v1h-1v-1h-3v3h-1v-3h-9v1h-1v-1h-10v1h-2v-1h-8v1h-1v-1h-22v2h-1v1h-1v-1h-1v-2h-11v1h-2v-1h-4v1h-1v-1h-9v1h-1v-1h-5v1h-1v1h-1v-1h-1v-1h-9v1h-1v-1h-4v2h-1v1h-2v-2h-1v-1h-6v1h-3v-1h-3v2h-1v-1h-3v-1h-5v3h-1v-3h-5v1h-2v-1h-7v1h-1v-1h-13v1h-1v-1h-5v1h-1v-1h-9v1h-1v1h-2v-2h-6v1h-1v-1h-4v1h-2v-1h-3v1h-1v-1h-4v1h-1v1h-4v-2h-6v1h-2v-1h-4v1h-1v-1h-1v1h-1v-1h-1v1h-2v-1h-1v1h-1v-1h-1v1h-1v-1h-5v2h-2v-1h-2v-1h-8v1h-1v1h-3v1h-3v-1h-2v-1h-1v-1h-7v1h-1v-1h-1v1h-1v-1h-1v2h-1v-2h-5v2h-1v-2h-1v1h-1v-1h-3v1h-3v-1h-5v1h-1v-1h-1v1h-1v-1h-1v1h-1v-1h-3v2h-2v-1h-3v-1h-1v1h-1v1h-1v-2h-5v1h-1v-1h-3v1h-2v-1h-5v2h-2v-1h-1v-1h-1v1h-1v-1h-15v1h-1v-1h-16v1h-3v-1h-3v1h-1v-1h-6v1h-1v-1h-2v2h-1v1h-1v-3h-5v1h-1v-1h-1v1h-1v-1h-1v1h-1v-1h-2v1h-1v-1h-1v1h-3v-1h-2v1h-1v-1h-6v1h-3v-1h-1v1h-1v-1h-5v1h-1v-1h-1v1h-2v-1h-2v1h-1v-1h-7v1h-3v-1h-3v1h-4v-1h-3v2h-1v3h-1v-3h-1v-2h-7v1h-1v-1h-2v1h-1v-1h-2v1h-2v-1h-4v1h-3v-1h-2v1h-1v-1h-6v2h-1v1h-1v-1h-1v-2h-1v1h-6v1h-1v-1h-1v-1h-10v1h-2v-1h-7v1h-1v3h-1v-4h-1v1h-2v-1h-2v1h-2v-1h-1v1h-1v-1h-13v1h-1v-1h-3v1h-2v-1h-8v1h-1v-1h-1v1h-1v-1h-1v1h-1v-1h-1v1h-1v-1h-1v1h-1v-1h-1v1h-4v-1h-1v1h-3v2h-3v-3h-10v4h-1v-1h-1v-3h-2v1h-1v-1h-2v1h-2v-1h-12v1h-5v-1h-5v1h-1v1h-2v1h-1v1h-1v-1h-1v-1h-3v-2h-2v1h-2v-1h-1v1h-2v-1h-1v1h-2v-1h-8v3h-1v-3h-2z"/>
<path d="M277 640v-2h4v-1h3v1h3v-1h2v2h1v-1h2v-1h1v-1h1v1h1v1h3v-1h3v1h3v-1h1v-1h1v2h1v-1h1v1h7v-1h1v1h9v-1h1v1h1v-1h1v1h1v-1h1v1h1v-1h1v1h1v-1h1v1h2v-1h2v-1h1v2h6v-1h1v1h1v1h1v-1h1v-1h1v1h9v-1h3v1h2v-4h1v4h4v1h1v-1h3v-1h2v1h1v-1h1v1h2v-2h2v1h1v1h2v-1h1v1h3v-1h2v1h3v-1h1v1h3v-1h1v-3h1v3h1v1h11v-1h1v1h2v-1h2v1h6v1h1v-1h7v-1h1v1h3v-1h2v1h1v-1h4v1h6v-1h1v1h3v1h1v-1h2v-1h1v1h1v-1h2v1h1v-1h2v1h1v-1h2v1h1v-1h3v1h6v-1h4v1h2v-1h3v1h1v-1h1v1h9v-1h1v1h1v-1h3v1h1v-2h1v1h1v-1h1v1h1v1h2v-1h1v1h4v1h1v-1h2v-1h1v1h4v-1h1v1h5v-1h1v1h1v-1h3v-1h1v1h2v1h1v-1h4v1h7v1h1v-2h3v1h1v1h1v-1h2v-1h2v1h1v-1h2v1h1v-1h5v1h1v-1h3v1h11v-1h2v1h1v1h1v-1h1v-1h1v1h4v-1h3v1h4v-1h1v-2h2v1h1v1h1v1h1v-1h1v1h4v-2h1v1h1v1h7v-1h1v1h6v-1h3v1h8v-1h1v1h2v-1h1v1h2v-1h1v-1h1v1h1v1h1v-1h1v1h9v-1h2v1h4v1h1v-2h1v1h2v-1h1v1h3v-1h2v1h7v-1h2v1h3v-1h2v-3h1v3h2v1h5v-1h1v1h4v-4h1v-1h1v2h1v-1h1v-1h1v1h2v-1h1v2h1v-2h1v1h2v1h1v-2h2v3h1v-2h1v1h1v-1h1v1h1v-2h2v1h1v1h3v-1h1v1h1v-1h2v1h1v-2h1v3h1v-1h3v1h1v-3h2v1h1v1h1v-2h3v-1h1v1h3v1h5v-1h4v1h1v-1h1v-1h1v2h1v1h1v-2h2v-1h3v1h1v-1h2v2h1v-4h1v3h1v-6h1v5h6v-1h2v2h1v-1h1v-1h1v-1h1v2h1v1h3v-2h3v1h1v-2h1v2h2v1h1v-1h3v2h1v-3h1v-1h1v-2h1v2h1v-1h1v1h1v-1h2v-1h1v1h2v1h2v1h1v-1h2v-1h1v2h1v1h1v-3h1v1h1v1h1v-1h1v1h1v1h2v-3h1v1h1v-3h1v4h1v-4h1v3h1v1h2v1h2v-2h1v3h1v-2h1v-2h1v1h1v-1h2v1h1v2h1v-1h1v3h1v-2h1v1h1v-1h2v-3h1v3h1v-2h1v3h1v-3h2v2h5v-1h1v1h2v-2h1v2h1v-2h1v1h1v-1h2v2h1v-3h1v1h2v3h1v-1h1v1h1v-2h1v-1h1v-2h1v2h1v-1h1v1h1v2h1v-4h1v3h1v2h1v-2h1v-1h1v2h5v-1h2v-1h2v2h3v-2h1v1h2v-1h1v1h1v2h1v-1h1v1h1v-1h1v-1h1v-3h1v1h1v2h1v-2h1v-2h1v3h2v1h5v-1h1v1h3v1h1v-1h3v1h1v-2h1v1h1v-2h3v2h1v-3h1v1h3v1h1v-2h2v3h1v-3h2v1h2v1h1v-1h1v1h1v-2h1v3h1v-3h1v1h1v3h1v-3h1v1h2v-1h1v1h1v1h3v1h1v-1h1v1h1v-2h1v1h3v2h1v-1h1v-2h2v3h1v-4h2v-1h1v1h2v3h1v-2h1v1h1v1h1v-1h2v-1h1v1h3v1h1v-3h1v3h1v1h1v-2h3v1h2v-1h1v3h1v-1h1v-2h1v-1h1v1h1v-1h1v1h1v1h2v-1h2v3h1v-2h3v1h2v-4h1v2h2v1h1v1h1v-3h1v-1h1v2h1v2h1v-1h1v-2h1v3h1v1h1v1h1v-3h1v-1h1v1h1v-1h1v1h1v1h1v2h1v-2h1v-1h1v1h1v-5h1v1h2v-1h1v9h1v1h12v-1h1v1h2v1h1v-3h1v2h7v1h1v-1h2v-1h1v1h2v-2h1v1h1v1h7v-1h1v1h2v1h1v-1h4v-1h1v1h5v-1h1v-1h1v-1h1v1h1v1h1v1h1v-1h2v1h3v-1h2v1h8v-1h3v1h4v-1h1v1h1v-1h1v1h4v-1h2v1h7v-2h1v2h2v-3h1v2h6v-1h1v1h1v-1h1v1h2v1h3v-1h1v1h4v-1h1v2h1v-1h3v-1h1v1h1v-1h1v1h1v-1h1v1h3v-1h2v1h1v-1h1v1h2v-1h1v1h1v-1h1v1h12v-2h1v1h1v1h2v1h1v-1h4v-1h1v1h1v-1h1v1h1v1h1v-1h1v-1h2v1h6v-1h4v1h3v-2h1v2h1v-1h2v1h1v1h1v-1h2v-1h1v1h1v-1h1v1h4v-1h1v1h1v-1h2v-1h3v-1h1v1h3v2h3v-1h2v1h12v-1h1v-1h2v1h1v1h3v-1h3v1h1v-1h1v1h11v-1h1v1h7v-1h1v1h1v-1h3v2h1v-2h2v-2h1v3h4v-4h1v-9h1v10h2v1h4v2h1v-1h1v1h1v-1h4v1h1v-1h1v1h4v1h1v-1h2v-1h2v1h2v-1h2v1h2v-1h2v1h1v-1h2v1h13v-1h2v1h1v1h1v-1h4v-1h1v1h1v-1h1v1h5v-1h1v1h3v-1h1v1h6v-1h1v1h4v5h-1v1h-3v-1h-6v1h-1v-1h-6v4h-1v-4h-1v3h-1v-1h-1v-2h-7v1h-1v-1h-5v2h-1v-2h-10v1h-1v-2h-1v1h-4v1h-9v-1h-1v1h-2v-1h-1v-1h-1v1h-7v1h-1v-1h-1v1h-1v1h-4v1h-1v10h-1v-9h-1v-4h-1v1h-1v-1h-6v1h-1v2h-1v-3h-6v1h-1v-1h-10v1h-2v-1h-3v2h-1v-2h-1v1h-1v-1h-1v1h-1v-1h-1v1h-1v-2h-1v1h-1v2h-2v-1h-1v-1h-6v-1h-1v1h-7v1h-2v-1h-1v1h-1v1h-1v1h-2v-1h-2v-1h-2v-1h-2v3h-1v-3h-10v1h-1v-2h-1v1h-1v-1h-1v1h-11v-1h-1v1h-4v1h-4v-1h-4v1h-1v1h-1v-2h-3v1h-2v-1h-2v-1h-1v1h-6v1h-1v-1h-5v1h-1v-1h-2v1h-1v-1h-1v1h-4v-1h-13v1h-1v-1h-3v1h-1v-1h-2v1h-1v1h-3v-1h-2v-1h-3v1h-1v-1h-1v1h-1v-1h-9v1h-3v-1h-3v1h-5v-1h-2v1h-1v-1h-3v1h-2v-1h-4v1h-1v-1h-5v1h-1v-1h-1v1h-1v2h-2v-2h-2v-1h-4v1h-1v-1h-2v1h-1v-1h-5v1h-1v-1h-1v1h-2v-1h-1v1h-2v-2h-1v1h-1v1h-3v-1h-6v1h-3v-1h-1v1h-1v-1h-1v1h-1v-1h-1v1h-1v-1h-1v1h-2v-1h-3v1h-1v-1h-3v1h-1v-1h-2v1h-1v8h-3v-3h-1v3h-1v-2h-1v1h-1v-2h-1v2h-1v1h-2v-4h-1v2h-3v3h-1v-4h-1v-2h-1v3h-1v1h-1v-2h-1v1h-2v1h-4v-1h-1v-2h-1v1h-1v1h-1v-1h-1v1h-1v-1h-1v1h-3v2h-1v-3h-1v1h-1v2h-2v1h-1v-3h-1v1h-1v-1h-2v-1h-1v1h-1v-2h-1v3h-1v-2h-3v1h-2v-2h-2v2h-1v-2h-1v-1h-1v2h-2v1h-1v1h-1v1h-2v2h-1v-2h-1v3h-1v-6h-1v1h-1v-1h-1v1h-1v4h-1v-3h-2v-2h-2v2h-1v-1h-1v1h-2v-1h-1v2h-1v-1h-1v1h-1v-2h-1v1h-2v1h-1v1h-1v-4h-2v3h-1v-3h-1v2h-1v-1h-1v2h-1v-1h-1v1h-3v-1h-3v-2h-1v2h-1v1h-3v-1h-2v1h-1v-1h-1v1h-1v-4h-1v2h-1v-1h-1v-1h-2v4h-1v-3h-1v1h-2v1h-1v-2h-1v3h-1v-1h-1v2h-1v-5h-1v2h-1v3h-1v-1h-2v1h-1v-3h-1v3h-1v-2h-2v1h-1v-3h-5v3h-1v-2h-1v-1h-1v2h-2v1h-1v-2h-1v-1h-1v3h-1v1h-1v-2h-1v1h-1v-1h-1v1h-1v-1h-1v-1h-1v-1h-1v1h-1v-1h-1v1h-1v3h-1v-4h-1v-1h-1v1h-1v1h-1v1h-2v-3h-1v2h-4v-2h-1v1h-1v2h-1v1h-1v-2h-2v-2h-1v1h-1v1h-1v-1h-2v2h-2v-1h-1v-1h-1v1h-1v-2h-1v3h-1v-1h-1v1h-1v-1h-1v-2h-1v2h-1v-2h-1v5h-1v-1h-2v-1h-1v1h-1v1h-1v-2h-1v-1h-1v-1h-1v-1h-1v1h-1v-1h-1v2h-1v2h-1v-1h-1v1h-1v-1h-1v-1h-1v-1h-1v2h-1v-3h-1v2h-1v-1h-1v-1h-1v2h-1v1h-1v3h-1v-5h-1v2h-1v-1h-1v3h-1v-1h-1v-1h-1v-1h-1v1h-2v1h-5v-3h-1v3h-2v-1h-1v1h-1v-3h-1v-1h-1v1h-3v2h-1v-2h-1v1h-1v-1h-1v1h-1v-2h-1v1h-1v-1h-1v-1h-1v1h-1v2h-1v-1h-2v1h-1v-1h-3v-1h-1v1h-1v1h-2v-1h-1v1h-1v1h-1v-2h-1v1h-1v-2h-1v1h-1v3h-1v-3h-1v1h-1v-2h-1v3h-1v-2h-3v-1h-1v2h-1v-2h-2v-1h-1v1h-3v1h-1v-1h-1v-1h-3v-1h-2v2h-7v-1h-1v1h-1v-1h-1v1h-1v-3h-1v1h-2v1h-2v2h-1v-3h-1v1h-1v-1h-1v1h-1v-1h-2v2h-4v-1h-3v-1h-2v4h-1v-1h-2v-2h-1v1h-2v-1h-2v3h-1v-2h-1v-1h-1v-1h-1v1h-2v1h-1v-4h-1v-1h-10v1h-1v1h-1v-1h-2v-1h-1v-1h-1v2h-1v-1h-3v1h-1v-1h-3v1h-2v-1h-12v1h-2v-1h-1v1h-1v-1h-1v1h-1v-1h-1v1h-1v-1h-8v2h-1v-1h-1v-1h-7v2h-1v-2h-5v1h-1v1h-1v-2h-2v2h-1v-1h-1v-1h-4v1h-1v-1h-3v1h-3v-1h-5v1h-2v1h-1v-2h-1v3h-1v-2h-2v1h-1v-1h-2v-1h-1v1h-1v-1h-6v1h-1v-1h-2v1h-2v-1h-2v-1h-1v1h-5v1h-1v-1h-7v1h-1v-1h-2v1h-4v-1h-6v3h-1v-3h-4v-1h-1v1h-2v1h-2v-1h-4v1h-4v-1h-1v1h-1v-1h-4v1h-3v-1h-2v3h-1v-3h-11v1h-1v-1h-5v1h-2v1h-1v-1h-2v-1h-5v1h-1v-1h-3v-1h-1v1h-3v1h-8v-1h-6v1h-2v-1h-1v1h-1v-1h-5v1h-7v1h-1v-1h-4v-1h-1v1h-1v-1h-1v1h-1v-1h-1v1h-2v-1h-7v1h-2v-1h-3v-1h-1v1h-2v1h-1v-1h-1v1h-1v-1h-2v1h-1v-1h-1v1h-5v-1h-3v1h-3v-1h-3v2h-1v-2h-9v2h-1v1h-1v-1h-1v-3h-1v2h-1v-1h-4v1h-2v3h-1v-4h-2v1h-1v-1h-1v1h-2v-1h-1v2h-2v-1h-1v-1h-9v1h-1v-1h-2v1h-1v9h-1v-8h-1v-2h-1v2h-1v1h-1v-2h-1v-1h-1v1h-2v-1h-2v1h-3v-1h-4v1h-1v-1h-4v1h-1v-1h-2v1h-2v-1h-1v1h-1v1h-1v-1h-1v-1h-6v1h-1v-1h-13v1h-1v-1h-1v1h-1v-1h-1v1h-1v-1h-1v1h-1v-1h-2v1h-2v-1h-7v1h-4v-1h-7v1h-1v-1h-1v1h-1v-1h-4z"/>
<path d="M277 670v-3h2v-1h2v1h2v-1h6v1h2v-1h1v1h2v-1h2v-1h1v2h2v-1h1v1h1v-1h2v1h1v1h1v-2h1v-1h2v1h1v-1h1v1h1v1h1v-1h1v1h5v-1h2v1h2v-1h1v1h1v-1h5v1h2v-1h3v-1h1v1h5v-1h1v1h6v1h1v-1h2v1h11v-1h1v1h2v-1h1v1h9v-1h1v1h1v-1h1v1h11v-1h6v1h1v-1h1v1h2v-1h4v-1h1v1h3v1h1v-1h3v1h1v-1h1v1h1v-1h2v1h2v-1h1v1h1v-1h1v1h6v-1h8v1h1v-1h1v1h1v-1h2v1h1v-1h10v1h1v-1h3v1h1v-1h2v-1h1v1h1v-1h1v1h4v1h1v-1h2v-1h1v1h2v1h1v-1h2v1h1v-1h3v-1h2v1h1v1h2v-1h1v1h1v-1h1v1h2v1h1v-1h2v-1h2v-1h2v1h1v1h3v-1h5v1h2v-1h7v1h1v-1h3v1h1v-1h1v1h3v-1h1v1h1v-1h1v-1h1v1h2v1h1v-1h2v1h2v-1h7v-1h1v1h2v1h1v-1h3v1h2v-1h5v-1h1v1h2v-1h1v1h7v-1h1v1h3v1h1v-1h2v1h1v-1h2v1h1v-1h3v1h1v-1h1v1h1v-1h1v1h1v-1h1v1h2v-1h3v2h1v-2h1v1h1v-1h1v1h4v-1h1v1h4v-1h5v1h1v-1h1v1h1v-1h1v1h1v-1h2v1h1v-1h1v1h2v-1h1v1h1v-2h1v1h3v-1h1v-1h1v1h1v1h2v1h8v-1h1v1h3v-1h2v1h1v-1h2v1h1v-1h6v1h1v-1h1v-1h1v1h4v-1h2v1h6v1h2v-1h7v1h1v-1h3v1h1v-1h2v1h1v-1h3v1h9v-1h1v1h5v-1h3v1h2v-1h3v-1h1v2h1v-1h1v-1h1v1h1v1h1v-1h2v1h3v-1h2v1h1v-1h1v1h1v-2h1v1h5v-1h2v1h1v1h1v-1h3v-2h1v2h4v-1h1v1h5v1h5v-1h6v1h5v-1h2v1h2v-1h1v1h1v-1h3v1h1v-1h2v1h1v-1h3v1h1v-1h3v-1h1v1h4v-1h2v1h1v-1h1v1h2v-2h1v2h2v1h2v-1h2v1h1v-1h1v1h3v-1h1v1h2v-1h1v1h1v-2h1v2h2v-1h2v1h2v-1h1v1h4v-1h2v1h1v-1h1v1h1v-1h1v1h6v-1h8v-1h1v1h2v1h1v-1h2v1h1v-1h1v1h2v-1h5v-1h1v1h2v-1h1v1h1v1h1v1h1v-1h2v-1h1v1h1v-1h2v1h2v1h1v-2h3v1h3v-1h6v-1h1v1h8v1h2v-1h4v1h1v-1h1v-1h2v1h3v-1h1v2h2v-1h2v1h1v-1h3v-1h1v2h1v-1h8v1h1v-1h1v-1h1v1h1v1h1v-1h2v1h1v-1h3v1h1v-1h2v1h2v-1h1v1h1v-1h3v-2h1v2h1v1h1v-1h3v1h1v-1h1v1h6v-1h5v1h1v1h1v-2h1v1h1v-1h2v1h1v-1h1v1h1v-1h1v1h3v-1h1v1h1v-1h3v-1h1v1h7v1h1v-1h1v1h3v-1h2v-1h1v1h1v1h1v-1h2v1h4v-1h1v1h1v-1h2v-1h1v1h8v1h1v-1h1v-1h1v1h4v-1h1v1h1v1h3v-1h3v1h1v-1h5v1h1v-1h1v1h2v-1h3v-1h1v1h3v1h1v1h1v-2h2v1h1v-4h1v4h1v-1h1v1h1v-1h1v1h1v-1h1v1h2v-1h2v1h2v-1h3v1h2v-1h1v1h3v-1h2v1h1v1h1v-1h1v1h1v-2h1v-1h1v1h1v1h1v-1h9v2h1v-3h1v-1h1v4h1v-2h4v-1h1v1h2v-1h1v1h1v-1h2v1h1v1h1v-1h8v-1h1v1h1v-1h1v1h2v1h1v-1h3v1h1v1h1v-1h2v-1h2v1h3v-1h5v-1h1v1h1v1h2v-1h1v1h3v-1h1v1h1v-1h3v1h1v-1h1v1h2v-1h1v1h1v-1h2v1h1v-1h2v-1h2v1h2v1h1v-1h5v1h1v-1h1v1h2v-1h6v1h2v-1h1v1h4v-1h2v2h1v-1h3v-1h2v1h1v-1h1v1h2v1h1v-1h1v-1h1v1h7v-1h1v1h2v-1h4v1h2v-2h2v1h2v1h1v-1h2v1h3v-1h1v1h1v-1h1v1h1v-1h2v1h1v-1h1v1h1v-1h1v1h2v-1h4v-1h4v1h6v-1h1v1h2v1h1v-1h4v1h1v-1h2v1h1v-1h4v1h2v-1h2v-2h1v3h2v-1h1v1h1v-1h3v1h4v-1h2v1h1v-1h1v1h2v-1h6v1h1v-1h1v1h1v-1h3v-3h1v-5h1v4h3v1h1v-3h1v2h1v-2h1v1h1v3h1v-2h3v-2h2v1h1v-5h1v9h1v-3h1v1h2v-1h1v-1h2v2h1v-1h1v3h1v-1h1v-1h1v-1h1v2h1v-1h1v-2h3v2h1v1h1v-1h2v-2h1v1h1v-1h1v1h1v1h2v-1h1v2h1v-1h1v-2h1v1h1v1h1v1h2v-12h1v6h1v5h1v-2h1v2h3v-2h2v2h1v-3h1v3h1v-1h4v-2h1v3h1v-1h5v2h1v-2h2v2h1v-1h1v18h-1v-2h-1v-2h-1v1h-1v2h-2v-1h-1v-1h-2v1h-1v1h-2v-1h-1v-1h-4v1h-1v-1h-1v1h-1v2h-2v-2h-4v6h-1v6h-1v-12h-1v-2h-1v3h-1v-1h-2v-1h-2v1h-1v1h-2v-1h-1v-1h-2v1h-1v-1h-1v1h-2v-1h-1v2h-1v3h-1v-4h-2v1h-1v-2h-1v-1h-1v3h-1v-1h-1v-1h-2v1h-1v-1h-2v-1h-4v6h-1v-4h-1v1h-1v-3h-1v3h-1v-1h-1v1h-1v-3h-1v2h-3v1h-1v-2h-1v1h-1v1h-1v-3h-1v2h-1v-1h-1v-3h-1v1h-1v-1h-1v-1h-1v1h-3v1h-1v-1h-6v-1h-1v1h-3v-1h-1v1h-7v-1h-1v1h-1v-1h-1v4h-1v-3h-5v-1h-3v1h-3v1h-1v-1h-4v-1h-1v1h-2v1h-1v-1h-4v-1h-2v1h-1v-1h-1v-1h-1v1h-3v1h-2v1h-1v-1h-5v-1h-3v1h-8v-1h-3v1h-3v-1h-1v1h-3v1h-1v-1h-1v-1h-3v1h-1v-1h-6v1h-1v-1h-5v1h-1v-1h-3v1h-3v-1h-1v1h-1v-1h-1v1h-5v-1h-1v1h-1v-1h-1v1h-1v-1h-3v1h-2v-1h-1v1h-5v-1h-1v1h-6v-1h-1v1h-6v-1h-1v1h-5v-1h-1v1h-1v-1h-1v1h-1v-1h-8v2h-1v-2h-3v-1h-1v1h-3v-1h-1v1h-4v1h-2v-1h-1v1h-2v-1h-1v1h-3v-1h-1v1h-4v-1h-2v1h-1v-1h-1v-1h-1v1h-5v1h-5v2h-1v-1h-1v-1h-1v-1h-2v1h-3v-1h-1v1h-2v-1h-3v1h-3v-1h-3v1h-1v-1h-4v1h-3v-1h-1v1h-1v-1h-6v1h-1v-1h-5v1h-2v-1h-4v1h-2v-1h-3v1h-3v-1h-2v1h-1v-2h-1v1h-3v1h-5v-1h-1v1h-4v1h-1v-1h-2v-1h-1v1h-3v1h-1v-1h-1v-1h-3v1h-8v-1h-4v2h-1v-2h-1v1h-1v-1h-4v1h-1v-1h-1v1h-4v-1h-2v1h-1v-1h-5v1h-3v-1h-1v1h-1v-1h-2v1h-2v-1h-2v1h-2v-1h-1v1h-2v-1h-2v1h-7v-1h-1v1h-1v-1h-4v1h-1v-1h-1v1h-1v-1h-1v1h-3v1h-1v-1h-2v-1h-1v1h-1v-1h-1v1h-2v-1h-1v1h-3v-1h-1v1h-1v-1h-1v1h-1v1h-1v-2h-2v1h-2v-1h-1v1h-1v-1h-1v1h-1v1h-1v-1h-6v-1h-2v1h-6v-1h-1v1h-2v1h-2v-2h-1v1h-7v-1h-1v2h-1v-1h-1v-1h-3v1h-1v1h-1v-1h-2v-1h-1v1h-2v-1h-2v1h-3v-1h-4v1h-1v-1h-2v1h-1v-1h-1v-1h-1v-1h-1v1h-1v1h-1v1h-3v-1h-2v1h-4v-1h-2v1h-4v-1h-1v1h-2v1h-2v-1h-2v1h-1v-1h-4v1h-2v-2h-1v1h-4v1h-1v-1h-4v-1h-2v1h-1v-1h-2v1h-1v-1h-9v1h-2v1h-1v-1h-3v1h-1v-2h-1v1h-3v-1h-1v1h-2v3h-1v-2h-1v-1h-1v1h-1v-1h-2v-1h-1v1h-1v-1h-2v1h-1v1h-1v-1h-4v-1h-1v2h-1v-2h-1v1h-2v-1h-2v1h-1v-2h-1v1h-3v-1h-1v2h-3v-1h-2v1h-1v-1h-2v1h-2v1h-2v-1h-2v-1h-4v1h-1v-1h-2v1h-4v-1h-1v1h-2v-1h-1v1h-1v-1h-2v1h-3v-1h-1v1h-3v-1h-1v1h-8v-1h-1v1h-1v-1h-1v1h-6v-1h-1v2h-1v-1h-3v-1h-1v1h-1v-1h-1v1h-3v-1h-1v1h-1v-1h-2v-1h-1v2h-1v-1h-1v1h-8v-1h-1v2h-1v-1h-2v-2h-1v2h-2v-1h-3v1h-2v-1h-1v1h-1v-1h-2v1h-1v-1h-1v1h-4v-1h-1v1h-1v1h-1v-1h-1v1h-3v-1h-3v-1h-1v1h-5v1h-1v-2h-1v1h-1v-1h-1v1h-8v-1h-5v-1h-1v1h-2v1h-2v1h-1v3h-1v-3h-1v-1h-7v-1h-4v1h-1v1h-1v-2h-1v1h-1v-1h-1v1h-11v-1h-2v1h-2v-1h-3v1h-3v-1h-1v1h-1v1h-1v-1h-1v-1h-2v1h-2v-1h-2v1h-2v-1h-1v1h-2v-1h-2v1h-1v-1h-1v1h-4v-2h-1v1h-2v1h-3v1h-1v-2h-1v1h-1v-1h-1v1h-1v-1h-3v1h-5v1h-1v-1h-1v-1h-3v1h-4v-1h-1v1h-1v-1h-6v1h-3v1h-1v-1h-2v-1h-3v1h-1v-1h-2v1h-2v-1h-1v1h-1v-2h-1v2h-3v-1h-1v1h-1v-1h-1v1h-1v-1h-1v1h-1v-1h-1v-1h-2v1h-2v1h-1v-1h-1v1h-1v1h-1v-1h-2v-2h-1v1h-2v1h-1v-1h-8v1h-1v1h-1v-1h-5v-1h-1v1h-1v-1h-1v1h-8v-1h-3v1h-1v-1h-1v1h-2v1h-1v-1h-6v-1h-1v1h-6v-1h-1v1h-8v-1h-3v1h-2v1h-2v-1h-1v-1h-1v1h-1v-1h-1v1h-1v1h-1v-1h-2v1h-2v-1h-6v-1h-1v1h-4v1h-1v-1h-3v-1h-1v1h-4v-1h-7v1h-1v-1h-1v1h-8v-1h-1v1h-1v-1h-1v1h-4v-1h-3v1h-1v-1h-2v1h-3v-1h-1v1h-2v-1h-1v1h-2v-1h-1v1h-5v-1h-2v1h-3v1h-1v-2h-1v2h-2v-1h-2v-1h-1v1h-2v2h-1v-1h-1v-1h-4v-1h-1v1h-1v1h-1v-1h-1v-1h-1v1h-1v-1h-1v1h-1v-1h-1v1h-1v-1h-1v1h-2v-1h-1v1h-1v-1h-2v1h-1v1h-1v-1h-1v1h-3v-1h-1v-1h-1v1h-5v-1h-3v2h-1v-2h-1v1h-2v-1h-2v1h-3v-1h-1v1h-4v-1h-1v1h-1v-1h-1v1h-1v-1h-1z"/>
<path d="M277 700v-7h2v-3h1v1h1v1h1v-2h1v1h2v1h1v2h1v-3h2v1h2v-2h3v1h1v-1h1v1h1v-1h2v-2h1v1h1v1h1v1h1v-2h2v3h2v-1h1v-2h1v1h1v-1h1v1h1v2h1v-1h4v3h1v-3h2v-1h1v2h1v-2h1v3h2v-1h3v2h1v-4h3v3h1v-1h1v-2h1v2h1v1h1v-2h2v-1h1v1h1v1h2v-1h2v1h1v-2h2v3h1v-3h1v-1h1v-3h1v2h1v1h1v1h2v-2h1v2h1v2h1v1h1v1h1v-2h1v-1h1v1h3v-1h2v1h1v1h2v-1h2v-1h2v-2h1v3h1v-1h1v-2h1v-4h1v3h1v1h1v1h1v1h1v3h2v-2h2v-1h1v3h1v-1h1v-1h1v-1h1v-1h1v-4h1v3h1v1h3v-2h1v5h3v-1h1v-1h1v1h1v2h1v-3h1v-1h1v3h1v-1h3v-1h2v1h2v-1h1v-1h1v-1h1v-6h1v4h1v2h1v1h2v3h1v-2h2v-1h1v1h1v1h2v2h1v-1h2v-2h1v2h2v-3h1v1h1v-1h1v1h2v1h1v-1h2v1h1v-1h1v1h1v-1h1v-1h1v1h2v1h2v-1h1v1h1v-2h1v1h1v1h1v-1h2v-2h1v1h1v2h1v1h1v-1h3v-2h1v1h2v-1h1v1h1v2h1v1h1v-2h1v1h3v-1h1v-2h1v1h1v-2h1v1h1v1h1v-1h1v4h1v-2h1v1h1v-2h1v-1h3v3h2v-1h1v1h1v-3h1v4h1v-1h3v2h1v-2h4v-1h1v-2h1v-1h1v-2h1v3h1v2h1v2h1v-2h2v1h1v1h1v-1h1v-1h1v-2h1v3h3v-1h2v-3h1v1h1v1h1v2h1v-2h1v1h1v1h1v-1h1v-1h1v2h1v-1h1v-2h1v2h2v-6h1v4h1v3h4v-1h1v-2h1v1h1v1h2v1h1v-3h1v2h2v-3h1v1h1v3h1v-1h2v1h1v-2h2v1h2v1h1v-1h1v2h1v-1h2v-1h1v1h2v1h1v-1h2v1h1v-4h1v3h3v-4h1v2h1v1h3v-1h1v-1h1v2h1v1h1v-3h1v1h1v-1h1v2h2v-1h2v2h2v-1h1v-2h1v3h1v-3h1v-2h1v-6h1v5h1v2h3v3h1v-1h2v1h1v-1h1v2h1v1h1v-4h1v2h2v1h1v-2h4v2h1v-2h2v-2h1v1h1v-1h1v-4h1v3h1v1h1v1h1v1h1v1h1v1h1v-1h3v-1h1v2h1v-1h1v1h1v-1h1v-2h1v7h1v1h1v-1h3v1h1v-2h1v2h1v-1h3v1h1v-1h2v1h4v-1h1v1h1v-1h3v1h1v-1h3v-1h1v1h1v1h1v-1h3v-1h1v1h2v-1h1v1h2v1h1v-4h1v3h1v1h6v-1h1v2h1v-1h1v-1h4v1h3v1h1v-1h2v-1h1v1h1v-1h1v1h1v-4h1v2h1v2h1v-1h1v1h1v-1h1v1h7v-1h1v1h1v-1h2v-2h1v2h2v1h4v-1h1v1h4v-1h1v1h1v-3h1v3h2v-1h1v-1h1v2h3v-1h2v1h1v-2h1v3h1v-1h1v-3h1v2h2v-1h1v2h2v-1h6v1h1v-1h4v-2h1v-7h1v-2h2v3h1v-4h1v2h1v9h1v1h1v-1h1v-2h1v2h1v1h1v1h1v-1h4v1h1v-1h1v1h3v-1h1v1h3v-1h5v1h2v-1h1v1h3v-1h1v1h8v-1h2v1h1v-1h1v1h1v-1h2v1h3v-1h1v1h2v1h1v-2h1v1h2v-1h2v2h1v-1h6v-1h1v1h5v-2h2v2h3v1h1v-2h1v1h2v-4h1v5h1v-1h2v-1h1v1h2v-1h1v1h1v-1h3v1h1v-1h1v1h2v1h1v-2h1v1h1v-1h2v1h5v-1h3v1h1v-1h1v1h2v-1h1v1h2v-1h1v1h1v-1h1v-1h2v2h1v-1h2v1h2v-1h1v1h1v-1h2v2h1v-1h1v-1h8v1h12v-1h2v1h1v-1h1v1h5v-2h2v1h1v1h1v-1h3v1h1v-1h3v-1h1v1h1v1h6v-1h3v1h4v-1h3v-1h2v1h1v1h2v-4h1v4h4v-1h1v1h2v-1h3v1h2v-1h1v1h1v-1h4v1h2v-1h1v1h2v1h1v-1h1v-1h1v1h7v-1h2v-4h1v5h1v-1h1v1h4v-1h1v-1h1v2h2v-1h2v1h10v-1h1v1h1v1h1v-1h1v-1h2v2h1v-1h1v-1h1v1h3v-1h3v-1h1v1h3v-1h1v2h3v-1h4v-1h1v1h2v-1h1v2h1v-1h1v1h2v-1h2v-1h1v-3h1v4h2v1h2v-1h5v1h2v-1h3v1h7v-1h3v-1h1v1h1v-1h1v1h1v2h1v-3h1v3h1v-1h6v-1h1v1h6v-1h2v1h1v-1h3v1h3v-1h2v1h1v1h1v-1h1v-1h4v1h1v-2h1v1h3v-1h1v1h1v1h3v-1h1v1h1v-1h1v1h1v-1h2v1h1v1h1v-1h1v-1h1v1h1v-1h6v1h1v-1h4v1h10v-2h1v1h4v-2h1v3h5v-1h1v1h2v-1h1v-1h2v1h1v1h2v-1h2v1h3v-1h2v1h1v-2h1v1h1v-1h1v1h2v1h1v-1h1v1h3v-1h3v-1h1v1h1v1h2v-1h2v-2h1v-11h1v10h1v3h1v1h5v-1h1v1h2v-2h1v2h2v-1h2v-3h1v3h5v-1h1v1h2v1h1v-1h1v1h1v1h1v-2h1v2h1v-1h1v-1h1v-1h2v1h1v1h2v1h1v-2h2v1h1v-1h4v1h3v-2h1v2h2v-1h1v1h2v-1h1v1h1v-1h3v-1h1v1h4v1h3v-1h2v1h7v-1h3v-2h1v3h1v-1h7v1h3v-1h2v1h2v-2h1v-2h1v2h1v2h2v1h1v-2h2v1h4v-1h2v1h4v-2h1v1h1v1h3v1h1v-1h1v-3h2v3h1v-1h1v1h1v-1h3v1h1v-1h1v1h1v-1h2v1h6v-1h1v2h1v-1h1v-2h1v2h2v-2h1v-2h1v4h1v-1h1v1h1v-1h1v1h1v-2h1v1h2v1h6v-1h5v1h1v1h1v-1h5v-1h1v6h-1v1h-3v-1h-1v1h-1v-1h-2v1h-1v-1h-5v1h-2v-1h-6v2h-1v-1h-2v-1h-2v5h-1v-3h-1v-1h-1v-1h-6v2h-1v-1h-1v1h-1v-1h-1v-1h-1v1h-1v-1h-1v-1h-1v1h-2v1h-1v-1h-4v1h-1v2h-1v-1h-1v-2h-4v1h-1v-1h-1v1h-5v-1h-1v1h-2v-1h-1v1h-4v-1h-1v1h-1v-1h-1v2h-1v1h-1v-2h-5v-1h-3v1h-1v1h-2v-1h-2v-1h-1v1h-7v-1h-2v1h-1v-1h-1v1h-1v-2h-1v1h-1v1h-1v-1h-1v1h-1v-1h-1v4h-1v-3h-2v1h-2v-1h-7v1h-1v-2h-4v1h-1v-1h-4v1h-1v-1h-1v-1h-1v2h-1v-1h-3v1h-3v-1h-2v1h-1v-1h-1v1h-1v-1h-1v1h-1v-1h-1v1h-3v-1h-2v1h-5v-1h-1v1h-1v1h-1v-1h-6v-1h-4v1h-1v5h-1v-4h-1v-1h-1v-1h-6v1h-1v-1h-2v1h-1v-1h-1v1h-1v-1h-2v1h-2v-1h-1v1h-4v-1h-1v1h-1v-1h-2v1h-1v-1h-2v2h-1v-1h-1v-1h-1v1h-2v-1h-5v1h-1v-1h-1v1h-1v-1h-4v1h-3v-1h-1v3h-1v-1h-1v-1h-3v-1h-2v1h-3v-1h-1v1h-1v1h-1v-1h-2v-1h-1v1h-1v-1h-3v1h-2v1h-2v-1h-1v-1h-2v1h-1v-1h-3v1h-2v1h-2v-1h-1v-1h-2v1h-1v-1h-5v1h-5v1h-2v-2h-2v1h-1v1h-1v-2h-1v1h-2v-1h-1v1h-1v-1h-4v1h-2v-1h-2v1h-2v1h-1v-2h-4v1h-2v-1h-2v1h-1v-1h-1v1h-1v-1h-1v1h-2v1h-1v-2h-3v1h-2v-1h-8v1h-1v1h-2v-1h-2v-2h-1v2h-5v1h-1v-1h-3v1h-1v-2h-1v2h-1v-1h-3v-1h-1v1h-2v-1h-3v1h-1v1h-1v-1h-1v-1h-1v1h-1v2h-1v-3h-3v2h-1v-2h-3v1h-1v-1h-1v2h-1v-1h-2v-1h-1v1h-1v-1h-8v1h-5v-1h-2v1h-1v1h-1v-1h-3v-1h-2v1h-1v3h-1v-3h-1v-1h-1v1h-5v-1h-1v1h-1v-1h-1v1h-5v-1h-1v1h-2v-1h-1v1h-1v-1h-1v1h-1v-1h-4v1h-3v3h-1v-4h-1v1h-1v1h-3v-2h-3v1h-5v-1h-1v1h-4v-1h-1v1h-4v-1h-1v2h-1v-2h-1v1h-1v-1h-3v1h-1v1h-1v-1h-1v-1h-3v1h-1v-1h-9v1h-1v-1h-2v1h-5v-1h-1v-1h-1v1h-5v1h-1v-1h-1v1h-7v-1h-1v1h-2v1h-2v-2h-1v1h-2v-1h-1v1h-1v-1h-7v1h-1v-1h-1v1h-1v-1h-2v1h-3v-1h-3v1h-4v-1h-2v1h-1v-1h-1v1h-1v-1h-2v1h-1v-1h-2v1h-3v-2h-1v2h-1v-1h-1v1h-2v-1h-1v2h-1v-1h-1v-1h-13v1h-2v-1h-1v1h-2v-1h-2v1h-1v-1h-6v1h-4v-1h-4v1h-4v-1h-8v1h-1v-1h-1v1h-1v-1h-6v1h-2v-2h-1v2h-4v-1h-1v1h-2v-1h-1v2h-3v-1h-2v8h-1v6h-1v-4h-3v-2h-1v-7h-1v-1h-2v-1h-1v1h-1v-1h-4v1h-1v-1h-1v1h-3v1h-1v-3h-1v2h-3v1h-1v-1h-1v1h-2v-1h-3v-1h-10v1h-3v-1h-1v1h-1v-1h-2v1h-2v2h-1v-2h-5v-1h-1v1h-2v-1h-1v1h-1v1h-1v-1h-3v-1h-1v1h-1v-1h-4v1h-2v-1h-3v1h-2v-1h-3v1h-1v-1h-9v1h-6v-1h-1v2h-1v-2h-2v1h-1v-2h-1v2h-3v1h-1v-1h-1v-1h-1v1h-1v-1h-2v2h-1v-1h-1v1h-1v-1h-2v-1h-2v2h-1v-1h-1v-1h-4v1h-4v-1h-1v1h-1v-1h-1v2h-1v6h-1v-5h-1v2h-1v-1h-1v1h-2v1h-1v-1h-3v1h-1v2h-1v1h-1v1h-1v2h-1v5h-1v-7h-1v-2h-1v1h-1v2h-1v-3h-2v-1h-2v1h-1v-1h-1v-1h-2v-1h-1v-1h-2v1h-2v1h-1v-1h-1v1h-1v1h-1v2h-2v1h-1v2h-1v5h-1v-6h-1v-3h-1v-2h-1v-1h-1v5h-1v-6h-1v1h-1v2h-1v-1h-1v1h-1v1h-2v-2h-2v2h-1v2h-1v-5h-2v1h-3v1h-2v-3h-1v2h-1v-1h-1v1h-1v-2h-1v1h-1v2h-1v-2h-2v1h-5v-2h-1v1h-1v2h-1v-1h-1v1h-2v-1h-4v1h-1v-1h-1v2h-1v-2h-2v-1h-1v2h-1v-1h-1v1h-1v-2h-1v-1h-3v1h-1v1h-1v-1h-1v7h-1v-7h-1v2h-1v1h-1v-1h-1v-1h-1v1h-1v-1h-1v2h-1v-2h-1v2h-1v-1h-1v-2h-1v3h-1v-2h-1v-1h-1v1h-1v1h-2v-2h-1v-1h-1v2h-1v-1h-1v3h-1v-1h-2v-1h-1v-2h-1v2h-1v2h-1v3h-1v-2h-1v-1h-1v1h-1v-2h-3v-2h-3v1h-1v1h-1v2h-1v-4h-1v2h-1v-2h-2v2h-1v1h-1v-2h-1v1h-2v-2h-1v-1h-3v2h-4v1h-1v-1h-3v1h-2v-2h-1v1h-1v2h-1v-2h-1v-1h-1v3h-1v-3h-1v1h-1v1h-1v-1h-1v1h-1v2h-3v-2h-1v-1h-2v-2h-1v1h-1v2h-1v-1h-2v2h-1v-2h-1v3h-1v-3h-1v1h-1v-2h-1v3h-2v-2h-1v-1h-1v3h-1v1h-1v-1h-2v-1h-2v-2h-1v2h-2v-1h-1v-1h-1v1h-1v-1h-2v-1h-1v2h-1v1h-1v-1h-1v2h-3v2h-1v2h-1v5h-1v-7h-1v-2h-1v-1h-1v-1h-2v-1h-1v2h-1v-1h-1v1h-1v1h-1v-2h-1v1h-1v-1h-1v1h-1v-1h-1v1h-1v-2h-1v2h-2v-1h-1v5h-1v-3h-2v2h-1v2h-1v5h-1v-7h-1v-2h-1v-2h-1v1h-1v-2h-1v-1h-2v3h-1v-3h-1v2h-1v1h-1v2h-1v1h-1v2h-1v5h-1v-7h-1v-2h-1v-2h-3v1h-1v-1h-1v1h-2v-1h-1v-1h-1v3h-1v-1h-1v2h-1v-2h-2v-1h-1v-2h-1v1h-1v1h-1v2h-2v1h-1v-1h-1v1h-1v1h-1v2h-1v5h-1v-7h-1v-2h-1v-2h-1v1h-1v-2h-1v1h-3v1h-1v-2h-2v1h-3v1h-2v-1h-3v2h-1v1h-1v1h-1v-3h-1v-2h-1v3h-1v-3h-1v2h-1v-1h-2v-1h-1v1h-2v-1h-1v2h-1v-1h-1v2h-1v-1h-3v2h-1v-1h-2v-1h-1v1h-4v-1h-1v2h-1v1h-1v1h-1v6h-1v-7h-1v-2h-5v-1h-2v-2h-1v1h-1v-2h-1v2h-1v1h-1v-1h-1v9h-1v-6h-1v-3h-1v1h-1v-3h-2v1h-1v1h-1z"/>
<path d="M277 731v-2h7v-1h2v1h4v-1h1v2h1v-1h6v-1h2v1h3v-1h4v1h3v-1h2v1h3v-1h1v1h1v-1h1v1h8v-1h1v1h8v-1h1v1h9v-1h2v1h9v-2h1v2h5v-1h1v1h1v1h1v-1h1v-1h1v1h1v-3h1v2h1v1h1v-1h1v1h11v1h1v-1h3v-1h2v-2h1v2h1v1h3v-1h1v1h4v-2h1v2h1v-1h1v1h7v-1h2v1h15v-2h1v2h7v-1h1v1h1v-1h1v1h5v-1h4v1h12v-1h1v1h11v-1h1v1h2v-1h2v1h5v-1h1v1h4v-1h1v1h1v-1h1v1h8v-1h1v1h1v1h1v-1h1v-1h1v1h10v-1h2v1h2v-1h1v1h1v-1h1v1h12v-1h1v1h1v-1h1v1h1v-1h1v1h12v-1h2v1h1v-1h1v1h2v1h1v-1h3v-1h3v-1h1v-1h1v2h2v1h13v-1h1v1h1v-1h2v1h6v-1h1v1h3v-1h1v1h1v-2h1v1h1v1h5v-1h1v1h1v-1h1v1h3v-1h2v1h2v-1h1v1h4v-1h6v1h3v-1h2v1h3v-1h1v1h2v-1h2v2h1v-1h3v-1h1v2h1v-1h3v-1h2v1h7v-1h1v1h3v-1h1v1h6v-1h1v1h1v-1h1v1h1v-1h4v-1h1v-1h1v1h3v1h4v1h2v-1h1v1h1v1h1v-2h2v1h3v-1h1v1h1v-1h3v1h8v-1h1v1h7v-1h2v1h3v-1h1v1h1v-1h3v1h4v-1h2v1h9v-1h1v-1h1v1h2v1h2v-2h1v1h5v1h7v-2h1v2h4v-1h1v1h1v-1h1v1h1v-1h3v-1h1v1h1v-1h1v1h4v1h5v-1h2v1h2v-2h3v-1h1v-1h1v2h1v1h2v1h1v-1h1v1h1v-1h1v1h3v-1h1v1h15v-1h1v1h1v-1h1v-1h1v-1h1v1h2v2h12v-1h1v-2h1v3h2v-1h2v-1h1v2h5v-1h1v1h1v-1h1v1h13v-4h1v3h1v1h9v-1h1v1h5v-1h1v1h8v-1h1v1h8v-2h1v2h2v-1h5v1h5v-1h1v1h7v-1h3v1h1v-1h2v-1h1v1h2v1h6v-1h1v1h3v-1h2v1h12v-1h1v1h3v-1h1v1h11v-1h1v-2h1v1h1v2h7v-1h1v1h1v-1h1v1h3v-1h2v1h4v-5h1v4h1v1h1v-1h1v1h8v-1h1v1h2v-2h1v-1h3v1h1v2h2v-1h1v1h8v-1h1v1h1v-1h3v1h4v-1h1v1h3v-1h1v-1h3v1h3v1h6v1h1v-1h4v-1h2v1h2v-2h2v-1h3v1h2v1h1v1h9v-1h1v1h3v-1h2v1h3v1h1v-1h1v-3h1v3h3v-3h1v3h4v-1h1v1h3v-1h1v1h9v-1h1v-1h1v1h2v1h7v-5h1v4h1v1h2v-1h1v1h1v-1h1v1h10v-1h1v1h1v-1h1v1h1v-1h1v-1h6v1h1v1h2v-1h1v1h5v-1h2v1h5v-1h3v-1h1v2h3v-1h1v1h2v-1h1v1h2v-1h1v1h8v-1h1v1h1v-2h2v2h1v-1h2v1h6v-1h1v1h8v-1h1v1h1v1h1v-1h8v-4h1v4h3v-1h1v-1h2v-1h1v1h1v1h5v1h2v-1h2v1h5v-1h1v1h1v-1h1v1h3v-1h2v-1h1v1h2v1h8v-1h1v-2h1v3h5v-1h1v1h10v-1h1v1h8v-1h1v1h8v-1h1v-3h1v3h1v1h1v-1h1v1h1v-1h1v1h2v-4h1v3h1v1h2v-1h2v1h7v-1h1v1h6v-1h2v1h5v-1h1v1h3v-1h2v1h9v-1h1v-2h1v1h1v1h1v2h1v-1h7v-1h3v1h9v-1h2v1h2v-1h1v1h1v-1h1v1h5v-1h1v1h1v-1h1v1h2v-1h4v1h1v-1h1v1h11v4h-4v1h-2v-1h-5v1h-2v-1h-9v1h-1v-1h-7v1h-1v-1h-3v1h-1v-1h-6v1h-1v-1h-2v1h-1v-1h-6v1h-1v-1h-3v2h-1v2h-1v-2h-1v-1h-1v-1h-1v3h-1v-3h-6v1h-1v-1h-1v2h-1v-2h-11v1h-1v-1h-8v1h-1v-1h-3v2h-1v-1h-2v1h-1v-2h-1v1h-1v-1h-6v3h-1v2h-1v-2h-1v-3h-7v1h-4v-1h-1v2h-1v-1h-5v-1h-3v1h-1v-1h-9v1h-2v-1h-7v1h-1v-1h-3v2h-4v-2h-5v1h-1v-1h-7v1h-1v-1h-4v2h-4v1h-1v-1h-3v-2h-1v1h-1v-1h-16v1h-1v-1h-4v1h-1v-1h-9v3h-2v-3h-4v1h-1v-1h-1v1h-1v-1h-4v1h-1v1h-1v-1h-1v1h-3v-2h-8v1h-4v-1h-2v1h-1v-1h-2v1h-1v-1h-1v1h-1v-1h-1v1h-1v1h-1v1h-3v-1h-1v1h-1v-1h-2v-2h-10v1h-1v-1h-3v1h-1v-1h-2v1h-1v-1h-6v1h-1v-1h-1v1h-1v1h-1v-1h-1v1h-3v-2h-8v1h-2v-1h-2v1h-2v-1h-3v1h-2v-1h-1v1h-1v-1h-2v1h-1v-1h-12v1h-1v-1h-6v3h-1v-1h-1v1h-1v2h-1v-1h-1v-1h-1v-1h-1v1h-1v-3h-2v1h-1v-1h-1v2h-1v-2h-6v1h-1v-1h-5v2h-1v1h-3v-1h-1v-1h-1v-1h-3v1h-1v-1h-6v1h-1v-1h-8v1h-1v-1h-3v3h-4v-1h-1v-2h-4v3h-1v-3h-9v6h-1v-6h-2v1h-1v-1h-7v1h-1v-1h-7v3h-3v-1h-1v-2h-7v1h-1v-1h-2v3h-1v-2h-2v-1h-1v2h-1v-1h-2v-1h-9v1h-2v-1h-6v1h-1v-1h-3v1h-1v-1h-1v1h-1v-1h-1v1h-1v-1h-13v1h-1v-1h-2v2h-1v-2h-1v2h-5v-1h-1v-1h-5v1h-1v-1h-8v2h-1v-2h-2v1h-1v-1h-1v3h-1v-3h-11v1h-2v-1h-1v1h-3v3h-1v-4h-5v3h-1v-3h-1v1h-1v-1h-2v1h-1v-1h-1v1h-1v-1h-3v1h-2v-1h-1v1h-1v-1h-1v1h-2v-1h-3v1h-6v-1h-3v3h-1v-3h-4v3h-2v2h-1v-2h-2v-3h-1v1h-1v-1h-1v1h-2v-1h-4v1h-1v-1h-2v1h-1v-1h-1v1h-1v-1h-1v1h-1v-1h-8v2h-1v1h-1v1h-3v-1h-2v-1h-1v-2h-2v1h-1v-1h-3v1h-2v-1h-1v1h-1v-1h-1v2h-3v1h-1v1h-1v-2h-3v-2h-4v1h-1v-1h-2v1h-1v-1h-8v1h-1v-1h-13v1h-3v-1h-6v1h-1v-1h-11v2h-2v-2h-5v1h-1v-1h-8v1h-1v-1h-2v1h-1v-1h-14v1h-2v-1h-1v2h-2v4h-1v-3h-2v-1h-1v-2h-6v1h-2v-1h-2v2h-1v-2h-2v1h-1v-1h-3v1h-1v-1h-2v1h-1v-1h-1v1h-1v-1h-5v1h-4v-1h-2v1h-2v-1h-9v1h-1v3h-1v-4h-7v1h-1v-1h-2v4h-1v-3h-1v-1h-3v2h-1v-2h-8v1h-2v-1h-5v1h-2v-1h-2v1h-2v-1h-5v1h-2v-1h-5v1h-1v-1h-4v1h-1v-1h-1v1h-2v-1h-1v2h-2v2h-2v-1h-1v-1h-1v-2h-7v1h-1v-1h-2v1h-1v-1h-1v1h-1v-1h-3v1h-1v-1h-10v1h-2v-1h-5v1h-1v-1h-1v1h-2v-1h-1v3h-1v-2h-3v-1h-1v1h-1v2h-1v-1h-1v-1h-1v-1h-2v1h-3v-1h-5v1h-2v-1h-4v1h-5v-1h-2v1h-2v-1h-1v1h-1v-1h-1v1h-1v-1h-1v1h-1v-1h-3v1h-2v-1h-7v1h-1v-1h-1v1h-2v-1h-8v1h-1v-1h-8v2h-2v1h-1v-1h-2v-1h-1v1h-1v-1h-1v-1h-2v1h-2v-1h-2v1h-3v-1h-1v1h-1v-1h-3v1h-3v-1h-5v1h-1v-1h-1v4h-1v-4h-4v4h-1v-3h-2v-1h-3v1h-2v-1h-1v1h-1v-1h-1v1h-1v-1h-5v1h-2v2h-1v-3h-6v4h-1v-4h-2v1h-1v-1h-12v2h-1v-1h-1v-1h-5v2h-1v-1h-2v-1h-24v1h-2v-1h-9v1h-1v-1h-1v2h-1v-2h-12v2h-2v-1h-2v-1h-2v4h-1v-3h-2v-1h-2v1h-1v-1h-2v1h-2v-1h-9v1h-1v-1h-3v1h-1z"/>
<path d="M277 761v-3h4v1h1v-1h2v1h5v-1h3v1h2v-2h2v2h7v-1h1v1h4v-1h1v1h4v1h1v-1h1v-2h1v1h2v1h1v-1h2v1h4v1h1v-1h5v-1h1v1h1v1h1v-1h1v-2h1v1h2v2h1v-1h2v-1h2v1h1v-1h1v1h3v-4h1v4h4v-1h2v1h6v-1h1v-1h2v1h1v-1h1v1h2v1h1v-1h3v1h9v-1h1v1h1v-1h1v1h7v-1h1v1h3v-1h3v1h1v-1h1v1h5v-1h1v1h6v-1h1v-3h1v3h1v1h7v-1h1v1h11v-3h1v3h12v-1h2v1h1v-1h1v1h3v-1h1v1h1v1h1v-1h2v-1h2v1h18v-1h9v1h2v-1h1v1h1v-1h1v1h1v-2h1v2h4v1h1v-1h4v-1h2v1h2v-1h2v-1h1v1h1v1h31v-1h1v1h7v-1h1v1h1v-1h4v1h3v-2h1v2h5v-4h1v4h4v-1h1v1h1v-1h7v1h3v-1h1v1h4v-3h1v3h4v-1h1v-1h2v1h2v1h3v-1h1v1h4v1h1v-1h7v-1h3v1h4v-1h1v1h1v1h1v-1h4v-1h1v1h10v-4h1v3h2v1h6v-1h1v1h6v-1h1v1h2v-1h2v1h2v-1h1v1h3v-1h2v-2h2v2h1v1h1v1h1v-1h16v-1h3v1h5v1h1v-1h1v1h1v-2h1v1h8v1h1v-1h5v-1h2v1h3v-1h1v1h1v-3h1v3h3v1h1v-1h1v-1h1v1h1v-1h2v1h1v-1h1v1h5v-1h1v1h1v-1h3v2h1v-1h3v-1h1v1h4v-1h1v1h2v1h1v-1h1v-1h2v1h12v-2h1v1h1v-2h1v1h2v1h1v1h4v1h1v-1h5v1h1v-2h3v1h5v-1h1v1h5v-1h1v1h3v-1h1v1h1v-1h1v1h4v-1h1v1h1v1h1v-1h3v-1h1v1h4v-1h1v1h3v-1h3v1h10v-1h2v1h17v-1h3v1h2v-1h1v1h11v-1h1v1h1v-1h1v1h3v-1h1v1h1v1h1v-1h9v-1h1v-1h2v1h1v-1h1v1h1v1h7v-1h1v1h6v-1h1v1h3v-1h1v1h2v-4h1v3h1v1h5v-1h1v2h1v-2h2v-1h1v1h2v1h2v-1h1v1h3v-1h1v1h2v-1h2v1h2v-1h1v1h2v-1h2v1h1v-1h1v1h1v-1h1v1h4v-3h1v3h1v1h1v-1h3v-2h1v1h1v1h7v1h1v-2h1v1h1v1h1v-2h2v1h1v-1h2v1h1v-3h1v4h1v-1h2v-1h1v1h3v-1h1v1h9v-1h1v1h7v-1h2v1h1v-1h4v1h1v-1h1v1h5v-1h1v1h1v-1h1v1h2v-1h1v1h2v-1h1v1h3v-1h1v1h3v-1h2v1h3v-1h1v1h6v-1h1v1h1v-1h1v1h3v-1h1v1h4v-1h1v-2h1v3h6v-1h1v1h6v-1h2v1h7v-1h3v-1h2v1h5v1h3v-1h1v1h4v-1h3v1h3v-1h1v1h2v1h1v-1h3v-1h1v-3h1v4h2v-1h2v1h6v-1h1v1h13v-2h2v-2h1v3h1v1h6v-1h1v1h2v-1h1v1h2v-1h4v1h8v-1h2v1h18v-1h2v1h2v-1h1v1h1v-2h1v2h7v-1h1v1h6v-1h2v-1h1v-2h1v3h2v1h1v-1h1v1h1v-1h1v1h6v-2h1v2h4v1h1v-2h1v1h4v-1h2v1h1v-1h2v1h3v-1h1v-1h1v1h1v1h8v-1h1v1h2v-1h3v-1h1v1h1v1h3v-1h4v1h16v-1h1v-1h3v-2h1v2h2v1h1v1h3v-1h4v1h4v-1h1v1h3v-1h1v1h3v-1h1v1h2v-1h1v1h2v-1h1v-2h1v3h2v-1h3v1h11v-1h3v1h4v-2h1v2h6v-1h2v1h5v-1h2v1h9v-1h1v1h6v-1h1v1h1v-1h1v1h2v-1h1v1h1v-1h2v2h1v-1h3v-1h1v1h4v7h-1v-2h-6v3h-1v-3h-1v1h-2v-1h-1v1h-1v-1h-7v1h-2v-1h-1v-1h-1v1h-2v1h-1v-1h-1v1h-1v-1h-5v1h-4v-1h-6v1h-10v-1h-1v1h-2v-1h-5v1h-2v-1h-2v1h-2v-1h-7v1h-1v-1h-3v1h-1v2h-1v-3h-14v1h-1v-2h-1v1h-2v1h-2v1h-1v-1h-1v3h-1v-2h-3v-1h-1v-1h-7v1h-1v-1h-2v1h-1v-1h-6v1h-2v-1h-3v1h-1v-1h-2v-1h-1v1h-2v2h-1v-2h-2v1h-1v-1h-2v1h-1v-1h-3v1h-6v-1h-2v1h-1v-1h-1v1h-1v-1h-6v1h-1v-1h-4v1h-2v-1h-1v1h-1v-1h-3v1h-2v-1h-3v1h-2v2h-1v-2h-2v-1h-2v1h-2v-1h-7v1h-1v-1h-2v1h-2v-1h-4v1h-1v-1h-4v1h-1v-1h-12v1h-1v-1h-2v1h-1v-1h-1v1h-1v-1h-1v1h-1v-1h-1v2h-1v-1h-1v-1h-1v1h-1v-1h-2v1h-1v-1h-4v1h-2v-1h-5v1h-1v4h-1v-4h-2v-1h-9v3h-1v-3h-2v1h-1v-1h-3v1h-1v-1h-4v1h-2v-1h-13v1h-4v-1h-4v1h-2v-1h-3v1h-3v1h-3v-1h-2v-1h-8v1h-5v-1h-4v1h-1v-1h-3v1h-3v-1h-2v2h-1v-1h-1v-1h-2v2h-1v-2h-2v-1h-1v2h-1v-1h-1v1h-1v2h-1v-3h-3v1h-1v-1h-2v1h-1v-1h-3v1h-3v-1h-1v1h-1v-1h-1v1h-1v-1h-6v-1h-1v2h-6v-1h-1v1h-2v-1h-1v1h-4v-1h-1v-1h-1v1h-2v1h-5v-1h-6v1h-1v-1h-2v1h-1v-1h-4v1h-5v-1h-1v1h-3v-1h-7v-1h-1v1h-9v1h-1v-1h-1v1h-1v-1h-2v1h-1v-1h-2v1h-1v-1h-9v1h-1v-1h-4v1h-1v-1h-1v1h-1v-1h-1v1h-9v-1h-2v1h-1v-1h-7v1h-1v-2h-1v1h-1v1h-1v-1h-6v1h-1v-1h-8v1h-1v1h-1v1h-1v-2h-1v1h-1v-2h-6v1h-4v-1h-3v2h-1v-1h-1v-1h-2v1h-1v-1h-8v1h-1v-1h-11v1h-1v-1h-13v1h-6v-1h-2v1h-1v-1h-1v1h-2v-1h-4v1h-1v-1h-2v1h-2v-1h-3v1h-3v-1h-2v1h-2v-1h-4v-1h-1v1h-5v1h-1v-1h-7v1h-2v-1h-1v2h-1v-2h-1v1h-1v-1h-2v1h-1v-1h-1v1h-1v-2h-1v1h-6v2h-2v1h-1v-1h-2v-2h-1v-1h-1v1h-1v1h-1v-1h-1v1h-1v-1h-3v1h-1v-1h-7v1h-1v-1h-6v1h-1v-1h-1v1h-1v-1h-3v1h-1v-1h-1v1h-1v-1h-2v1h-1v-1h-9v-1h-1v1h-8v1h-3v-1h-5v1h-1v-1h-9v1h-3v-1h-1v1h-1v-1h-1v1h-1v-1h-6v1h-1v1h-1v-2h-12v1h-1v-1h-1v1h-1v1h-1v1h-1v-1h-1v-1h-2v-1h-3v1h-1v-1h-1v1h-1v-1h-11v-1h-1v2h-4v-1h-3v3h-1v-3h-1v-1h-1v1h-1v-1h-1v1h-2v1h-1v-1h-7v1h-1v-1h-1v1h-1v3h-1v-4h-7v1h-2v-1h-2v1h-1v-1h-4v1h-1v-1h-3v1h-1v-1h-1v1h-6v-1h-10v1h-1v-1h-2v1h-6v-1h-5v1h-3v-1h-10v3h-1v-3h-3v-1h-1v1h-2v-1h-1v1h-7v1h-1v-1h-1v1h-4v-1h-12v-1h-1v1h-8v1h-3v1h-1v-1h-3v-1h-7v-1h-1v1h-3v2h-2v-2h-1v1h-1v-1h-1v1h-1v-1h-1v1h-1v-1h-2v1h-7v-1h-1v2h-1v-2h-1v1h-1v-1h-4v1h-1v-1h-1v1h-2v-1h-11v1h-2v-1h-1v1h-1v-1h-1v1h-1v-1h-3v1h-1v-1h-3v1h-2v-1h-4v1h-1v-1h-3v1h-1v-1h-8v1h-1v-1h-4v-1h-1v2h-1v-1h-2v1h-1v2h-1v-2h-2v-1h-10v1h-1v-1h-2v1h-1v-1h-9v1h-1v-1h-1v1h-1v-1h-6v1h-1v-1h-2v1h-1v-1h-5v1h-1v-1h-1v1h-1v-1h-2v1h-1v1h-1v-1h-2v-1h-2v1h-2v-1h-3v1h-1v-1h-3v1h-2v-1h-11v2h-2v-2h-14v1h-1v-1h-3v3h-1v-2h-1v-1h-7v1h-1v-2h-1v1h-5v1h-2v-1h-1v1h-1v1h-1v-2h-4v1h-4v-1h-5v1h-1v-1h-4v1h-1z"/>
<path d="M277 791v-3h2v1h8v-2h1v1h2v1h1v1h1v-2h1v1h1v-1h7v1h8v-1h2v-1h3v2h3v-1h1v1h7v-1h3v1h9v-1h2v1h2v-1h1v1h2v-2h2v1h2v1h1v-1h1v1h2v-2h1v1h2v1h1v-1h4v-1h2v1h2v1h1v-1h1v-1h1v2h3v-1h1v1h7v-1h1v1h1v-1h1v1h1v-1h1v1h4v-2h1v1h1v1h6v-1h3v1h5v-1h3v-1h1v1h3v1h11v-1h1v-1h1v1h2v1h2v-1h4v1h1v-1h3v-1h1v2h3v-1h1v1h2v-1h1v1h3v-1h2v1h2v-1h1v1h2v-1h1v1h2v-1h3v1h1v-1h1v1h11v-2h1v-2h1v4h2v-1h1v1h2v-1h2v1h1v-1h1v1h2v-1h1v1h1v-1h1v-3h1v3h1v-1h1v1h2v1h3v-1h2v1h3v-1h1v1h1v-2h1v1h1v1h2v-4h1v4h1v-1h1v1h5v-1h1v1h2v-1h1v1h1v-1h1v1h10v-1h1v1h1v-1h2v-1h1v2h5v-1h1v1h5v-1h1v-1h1v1h1v1h1v-1h1v1h10v-1h1v1h1v-1h5v1h6v1h1v-1h1v-1h3v1h1v-1h2v-1h1v1h2v1h11v1h1v-1h7v-1h2v-1h1v2h7v-1h1v1h22v-1h2v1h3v-1h2v-2h1v2h1v1h2v-1h1v1h1v-1h1v1h4v-1h1v1h1v-1h1v2h1v-1h1v-1h3v1h3v-1h1v1h3v1h1v-3h1v2h6v-1h2v-1h2v1h1v-1h1v1h2v1h2v-1h2v1h21v-1h1v1h12v-1h1v1h14v-1h4v1h1v-1h1v1h4v-1h1v1h3v1h1v-1h6v-1h3v1h1v-1h2v-3h1v3h1v1h1v-1h1v1h6v-4h1v4h6v-1h1v-1h1v2h1v-1h1v1h2v-1h2v1h8v-1h1v1h1v1h1v-2h2v1h2v-1h1v1h1v-1h1v1h11v-1h1v1h1v-1h2v-1h1v-1h1v3h2v-1h3v-1h3v1h2v1h5v-1h2v1h3v-1h1v1h1v-1h1v1h2v1h1v-1h3v-1h1v1h10v-1h1v1h6v-1h1v1h2v-1h1v1h3v1h1v-1h6v-1h1v1h1v-1h4v-1h1v1h4v1h2v-1h1v1h5v-1h2v1h1v-1h3v-4h1v3h1v1h1v1h4v-1h1v1h12v-1h1v1h1v-1h1v1h7v-1h1v1h1v-1h2v1h2v-1h2v1h6v-1h1v1h7v-2h2v-3h1v3h1v2h2v-1h1v1h1v-2h1v2h4v-1h2v1h1v-1h3v1h5v-1h1v1h3v-1h1v1h5v-1h1v1h1v-1h2v1h1v-1h4v1h1v-1h1v1h1v-2h2v1h1v1h3v-3h1v3h3v-1h2v1h1v-1h1v1h9v1h1v-2h1v1h4v-1h4v1h17v-1h2v1h2v-1h1v1h1v-1h5v1h4v1h1v-1h22v-1h2v1h4v-1h1v1h1v-1h2v-1h1v1h1v-1h1v1h2v1h6v-1h1v1h11v-1h1v1h5v-1h2v-1h1v2h1v-1h1v1h3v-1h4v-1h2v1h3v1h4v-1h1v1h12v-1h2v1h2v-1h1v1h1v-1h1v-1h1v1h5v1h1v-1h1v1h3v-1h1v1h1v-1h2v1h3v-1h4v1h2v-1h1v1h12v-1h2v1h7v-1h1v1h2v-1h1v1h4v-1h1v1h3v-1h1v1h8v-1h7v1h4v-1h2v1h3v-1h1v1h14v-1h1v1h1v-1h1v1h2v-1h1v1h1v-1h1v1h1v-1h1v1h3v-1h1v1h1v-1h1v1h1v-1h2v1h5v-1h1v-1h1v1h1v2h1v-2h4v1h4v-1h1v2h1v-1h2v-1h1v1h4v-1h1v1h7v-1h4v1h11v-1h2v1h5v1h1v-1h2v-1h1v-1h1v-1h1v1h1v1h1v1h7v-1h1v1h1v-3h1v3h6v-1h4v1h1v1h1v-1h5v1h1v-1h3v-1h1v1h2v-1h1v1h3v-1h1v1h3v5h-1v-1h-3v1h-1v-1h-14v1h-1v-1h-1v1h-1v3h-1v-3h-2v-1h-7v6h-1v-6h-7v1h-1v-1h-1v2h-1v1h-4v-2h-1v-1h-2v1h-2v-1h-2v1h-1v-1h-1v1h-1v-1h-9v1h-2v-1h-1v1h-1v-1h-1v1h-1v-1h-5v1h-1v-1h-7v1h-1v-1h-2v1h-3v-1h-7v2h-1v1h-1v-2h-1v-1h-7v5h-1v-5h-1v1h-1v-1h-11v1h-1v-1h-5v1h-2v-1h-2v1h-1v-1h-9v3h-1v-3h-4v1h-1v-1h-1v2h-1v-1h-1v1h-1v3h-1v-3h-4v-1h-1v-1h-16v1h-1v-1h-9v1h-1v-1h-1v1h-1v-1h-1v1h-2v-1h-3v1h-1v-1h-3v1h-2v-1h-1v1h-1v-1h-3v1h-1v-1h-4v2h-1v-2h-3v1h-1v3h-1v-4h-2v1h-3v-1h-2v1h-2v-1h-2v1h-1v-1h-2v1h-1v-1h-5v1h-1v-1h-1v1h-1v-1h-8v1h-1v3h-1v-2h-2v2h-1v-2h-4v-2h-4v1h-1v-1h-2v4h-1v-3h-1v-1h-5v1h-1v-1h-1v1h-1v-1h-1v1h-1v-1h-7v1h-1v-1h-4v1h-2v1h-2v3h-1v-2h-2v-1h-1v-1h-2v-1h-1v1h-1v-1h-3v1h-1v-1h-2v1h-3v1h-1v-1h-2v-1h-22v1h-2v-1h-4v1h-1v-1h-1v1h-2v-1h-2v1h-2v-1h-2v1h-2v1h-1v-2h-2v1h-2v-1h-2v1h-1v-1h-2v2h-2v-2h-1v1h-1v-1h-11v1h-1v-1h-5v1h-1v-1h-2v4h-2v-4h-1v2h-2v-1h-2v-1h-1v1h-1v-1h-2v1h-1v-1h-4v1h-1v-1h-7v1h-1v-1h-11v4h-1v-3h-1v-1h-1v1h-3v-1h-1v2h-1v-2h-2v1h-3v1h-1v4h-1v-3h-2v-3h-1v1h-1v-1h-3v1h-2v-1h-4v1h-1v-1h-9v1h-1v-1h-1v1h-1v-1h-20v3h-1v-1h-1v-1h-1v-1h-2v1h-1v1h-1v4h-1v-4h-1v-2h-3v1h-2v-1h-4v1h-1v-1h-2v1h-1v1h-8v-2h-4v4h-1v-4h-2v1h-3v-1h-3v1h-2v-1h-6v1h-2v-1h-13v1h-1v-1h-5v1h-1v-1h-3v1h-3v-1h-5v2h-2v1h-1v1h-1v-2h-2v1h-1v-1h-1v-2h-1v1h-1v-1h-1v1h-4v-1h-1v1h-1v-1h-1v1h-1v-1h-3v1h-1v-1h-1v1h-1v-1h-5v1h-1v-1h-12v1h-1v-1h-16v1h-2v-1h-3v1h-2v1h-5v-2h-2v1h-1v-1h-3v1h-2v1h-1v-1h-2v-1h-1v1h-2v-1h-7v2h-2v-1h-2v-1h-4v2h-1v-2h-13v1h-1v-1h-18v1h-1v-1h-2v1h-1v-1h-4v1h-1v-1h-1v1h-1v-1h-2v4h-1v-4h-2v2h-3v1h-3v-1h-2v-2h-2v1h-1v-1h-10v1h-3v-1h-1v1h-1v-1h-7v1h-3v-1h-4v2h-3v-2h-4v1h-1v-1h-4v1h-3v-1h-3v1h-2v1h-2v-2h-15v1h-1v-1h-1v2h-2v-2h-2v3h-1v-3h-7v1h-1v-1h-1v1h-1v-1h-2v1h-1v-1h-1v2h-1v-2h-10v2h-1v-1h-1v1h-1v-1h-1v-1h-3v1h-4v-1h-3v1h-1v-1h-1v1h-1v-1h-1v1h-1v-1h-2v1h-5v-1h-1v1h-1v1h-3v-2h-3v1h-1v-1h-4v1h-1v-1h-2v1h-2v-1h-4v1h-1v-1h-2v1h-1v1h-1v-2h-1v1h-1v-1h-1v1h-2v-1h-7v1h-1v-1h-3v1h-1v-1h-2v1h-1v-1h-4v2h-1v-2h-4v2h-1v-1h-2v-1h-3v2h-1v3h-1v-4h-1v-1h-2v1h-2v-1h-2v1h-4v-1h-3v5h-1v-2h-1v-3h-2v1h-1v-1h-1v2h-1v-2h-11v1h-1v-1h-3v1h-1v-1h-8v1h-1v-1h-5v1h-1v2h-1v-1h-1v-1h-3v-1h-2v1h-2v1h-1v-1h-1v-1h-1v2h-1v1h-1v-1h-1v-1h-1v-1h-3v1h-1v-1h-7v2h-6v-2h-6v1h-2v-1h-1v1h-1v2h-1v-2h-2v-1h-1v2h-2v-2h-2v1h-1v-1h-12v1h-2v-1h-2v1h-4v1h-1v1h-2v-1h-1v2h-1v-2h-1v1h-1v-1h-1v-1h-2v-1h-4v1h-1v-1h-2v2h-1v2h-1v-1h-1v-3h-3v1h-1v-1h-5v1h-1v-1h-6v2h-2v-1h-1v3h-1v-4h-3v1h-1v-1h-3v1h-3v1h-1v1h-1v-1h-1v-2h-1v1h-2v-1h-3v1h-1v-1h-2v1h-1v1h-4v-1h-1v1h-1v-1h-1v-1h-7v3h-1v-3h-1v1h-1v-1h-2v1h-1v1h-1v-1h-2v-1h-1z"/>
<path d="M277 822v-2h1v-1h1v1h4v-1h2v1h2v-1h2v1h2v-1h1v1h7v-3h1v2h1v1h4v-1h3v1h1v-1h2v-1h4v1h1v-1h1v1h5v1h3v-1h1v1h6v-1h1v1h1v-1h1v1h11v-2h2v1h1v-1h1v3h2v-1h6v-1h1v1h2v-1h1v1h13v-3h1v3h12v-1h4v1h2v-1h2v-1h1v1h4v1h3v-1h1v2h1v-2h1v1h9v-1h3v1h3v-1h1v-5h1v5h2v1h3v-1h1v1h2v-1h1v1h12v-1h3v1h7v-1h1v1h2v-1h2v1h4v-3h1v3h1v-1h2v-1h3v1h1v1h16v-1h5v1h2v-1h4v1h7v1h1v-1h2v-1h3v1h9v-1h1v1h5v-1h1v-1h1v-1h1v1h1v1h1v1h4v-1h1v1h6v-1h1v1h1v-1h1v1h3v-1h1v1h7v-1h2v1h1v-1h3v-1h1v1h6v1h1v-1h2v1h1v-1h1v1h4v-1h1v1h1v1h1v-1h1v-1h1v1h5v-1h2v1h12v-1h1v1h4v-1h3v1h1v-1h1v1h13v-1h3v1h14v1h1v-1h9v-2h1v1h1v1h1v-1h3v1h2v-1h5v-3h1v3h2v1h6v-1h1v1h2v-3h1v2h1v-2h1v2h1v-1h1v1h2v1h1v-1h1v1h1v-1h3v1h2v-3h1v3h1v-3h1v3h3v1h1v-1h8v-1h3v1h10v-1h1v1h2v-1h1v1h1v1h1v-1h6v-1h1v1h2v-1h3v1h2v-1h1v1h1v-1h2v1h5v-1h1v1h2v-1h1v1h9v-1h1v1h3v-4h1v4h1v-1h1v-1h1v2h6v-1h1v1h1v1h1v-1h1v-1h1v1h1v-1h1v1h5v-1h1v1h7v-1h2v1h1v-1h1v1h17v-1h2v1h2v-1h1v1h6v-1h2v1h15v1h1v-1h2v-1h1v1h6v-1h1v1h1v-1h1v-2h1v2h1v1h1v-1h1v1h2v-1h1v1h3v-2h1v1h1v-1h1v1h3v1h1v-1h5v1h1v-1h4v1h2v-1h1v1h1v1h1v-1h2v1h1v-1h6v-1h4v-1h1v2h1v-1h1v1h7v-1h1v1h2v-1h1v-1h1v1h1v1h4v-1h1v1h2v-1h1v1h2v-1h3v1h5v1h1v-1h4v1h1v-1h2v-1h1v1h1v-1h1v1h1v-1h2v1h2v-1h1v1h9v-2h2v1h1v1h2v-1h1v1h1v-1h1v1h10v1h1v-1h1v-1h2v1h2v-1h3v1h4v1h1v-1h1v1h1v-1h3v-1h2v-1h1v1h2v1h4v-1h2v1h3v-1h2v1h3v-1h1v-2h1v3h3v-1h1v1h4v-1h1v1h4v-1h1v-1h1v1h2v1h1v-1h2v1h1v-1h2v1h3v1h1v-1h8v-1h1v1h4v-1h1v1h2v-1h1v2h1v-1h8v-1h2v-2h1v1h1v-3h1v3h2v1h1v1h16v-1h2v1h2v-1h1v1h4v1h1v-1h1v-1h1v1h21v-1h1v1h1v-1h1v1h1v-1h2v1h4v-1h2v-1h2v1h1v1h1v-3h1v2h1v1h2v-1h1v1h1v1h1v-1h2v-1h1v1h8v-1h1v1h1v1h2v-1h1v-1h1v1h1v-2h1v1h1v1h2v-1h1v1h1v-1h3v1h11v-1h1v1h1v-1h1v-1h1v2h7v-1h1v1h1v-1h3v1h2v1h1v-1h18v-1h1v1h2v-1h1v1h1v-2h1v2h1v-1h1v1h4v-4h1v4h1v-1h2v1h9v-1h1v1h3v-1h1v1h1v-1h1v1h5v-2h1v2h3v-2h2v2h5v-1h5v-1h1v1h1v-1h1v1h3v1h2v-2h1v1h6v1h1v-1h1v1h1v-1h3v-1h1v1h2v1h3v-1h2v1h10v-2h1v1h3v1h1v-1h1v1h18v-1h2v-1h1v1h1v1h13v-1h1v1h7v-1h1v1h1v-1h1v1h10v-1h1v1h1v-1h3v1h2v-1h1v1h4v-1h2v1h4v5h-6v3h-1v-3h-11v-1h-1v5h-1v-4h-1v2h-1v-1h-1v-1h-2v1h-1v-1h-4v1h-1v-1h-19v5h-1v-5h-2v1h-4v-1h-3v1h-1v-2h-1v1h-1v1h-3v-1h-1v1h-1v-1h-5v2h-1v-2h-2v1h-3v-1h-3v1h-1v-1h-4v1h-3v-1h-5v1h-3v1h-1v-1h-3v-1h-2v2h-1v-1h-1v1h-3v-1h-3v1h-1v-1h-6v1h-1v-1h-1v-1h-1v1h-2v-1h-5v2h-2v-2h-1v1h-2v-1h-9v3h-1v-3h-6v1h-1v-1h-18v1h-1v-1h-1v1h-1v-1h-7v1h-1v1h-1v-2h-3v-1h-1v1h-8v1h-1v-1h-4v1h-2v-1h-1v1h-1v-1h-3v1h-1v-1h-5v-1h-1v1h-1v-1h-1v1h-2v1h-5v-1h-1v1h-2v-1h-3v1h-1v-1h-5v2h-1v-2h-6v1h-1v-1h-1v1h-1v-1h-3v1h-1v-1h-8v1h-6v-1h-7v-1h-1v1h-2v1h-1v-1h-1v2h-1v-1h-3v-1h-8v1h-2v-2h-1v2h-1v-1h-13v1h-1v-1h-2v1h-2v-1h-3v1h-1v-2h-1v1h-7v1h-1v1h-1v-1h-1v2h-1v-1h-1v2h-1v-2h-1v-1h-3v-1h-1v-1h-1v1h-3v1h-2v-1h-1v2h-1v-2h-17v1h-3v-1h-6v1h-1v1h-1v-1h-1v-1h-2v5h-1v-5h-5v3h-1v-3h-11v1h-1v-1h-6v1h-1v-1h-1v1h-2v1h-1v-1h-2v-1h-2v1h-1v-1h-1v-1h-1v1h-3v1h-1v-1h-10v1h-1v-1h-5v1h-1v-1h-8v1h-1v1h-3v-1h-2v-1h-2v-1h-1v1h-10v1h-1v-1h-1v1h-1v-1h-6v1h-1v-1h-1v1h-1v-1h-1v1h-1v-1h-1v1h-2v-1h-3v-1h-1v1h-1v1h-1v-1h-1v1h-1v-1h-1v1h-1v-1h-2v1h-2v-1h-3v1h-2v-1h-1v1h-4v-1h-2v1h-2v-1h-3v-1h-1v2h-1v-1h-3v1h-3v-1h-3v1h-2v-1h-1v1h-1v-1h-1v1h-2v-1h-1v1h-3v-1h-5v1h-1v-1h-4v1h-1v-1h-1v1h-1v-1h-4v1h-1v2h-1v-2h-1v-1h-8v1h-1v-1h-3v1h-1v-1h-5v1h-3v-1h-7v1h-1v-1h-15v1h-1v-1h-2v1h-3v-1h-2v1h-1v-1h-3v1h-2v-1h-1v1h-3v-1h-1v1h-1v-1h-2v3h-1v-2h-1v-1h-1v1h-1v-1h-2v1h-4v-1h-1v1h-1v-1h-1v1h-2v-1h-3v1h-1v-1h-2v1h-1v1h-1v-2h-2v1h-2v1h-1v-1h-1v-1h-8v1h-3v-1h-1v1h-2v-1h-1v1h-1v1h-1v-1h-2v-1h-2v1h-1v-1h-1v1h-1v-1h-1v1h-1v-1h-11v1h-2v-1h-1v1h-3v-1h-2v1h-1v-1h-1v1h-1v-1h-2v1h-2v1h-1v-2h-3v2h-1v-2h-6v1h-1v-1h-3v2h-1v-2h-11v1h-1v1h-1v-1h-1v1h-1v-1h-1v-1h-9v1h-1v-1h-1v1h-1v3h-1v-3h-3v-1h-6v1h-1v-1h-1v1h-1v-1h-3v1h-1v-1h-1v-1h-1v1h-5v1h-1v-1h-15v1h-1v-1h-4v1h-1v-1h-3v1h-1v-1h-1v1h-2v-1h-1v4h-1v-4h-1v1h-3v-1h-3v1h-1v-1h-3v1h-1v-1h-2v1h-2v-1h-4v1h-1v-1h-6v1h-1v-1h-1v2h-1v-2h-2v2h-1v-2h-2v1h-1v-1h-1v1h-3v-1h-1v1h-1v-1h-1v2h-1v-2h-1v1h-1v3h-1v-2h-2v-1h-3v-1h-3v-1h-1v1h-3v1h-3v-1h-2v1h-3v-1h-10v1h-1v-1h-2v1h-2v1h-1v-1h-2v-2h-1v1h-13v1h-1v-1h-2v1h-1v-1h-1v1h-1v-1h-2v1h-1v-1h-1v1h-1v1h-1v-1h-1v-1h-4v1h-1v-1h-3v1h-4v-1h-4v1h-1v2h-1v-2h-1v-1h-5v1h-3v-1h-1v1h-1v1h-2v-1h-5v-1h-1v1h-1v-1h-9v1h-3v-1h-7v1h-1v-1h-2v1h-3v-1h-3v-1h-1v1h-3v1h-1v-1h-1v1h-4v3h-1v-5h-1v1h-3v2h-1v-2h-2v1h-2v-1h-5v1h-1v-1h-1v1h-1v-1h-4v1h-4v1h-2v-1h-1v-1h-6v1h-1v-1h-1v1h-2v-1h-3v1h-3v-1h-7v1h-3v-1h-2v1h-2v-1h-1v1h-1v-1h-4v1h-1v-1h-5v-1h-1v1h-4v1h-1v1h-1v-1h-1v-1h-1v-1h-1v1h-2v2h-1v-2h-1v1h-1v-1h-8v1h-1v-1h-4v2h-1v-1h-1v-1h-1v1h-1v-1h-1v1h-1v-1h-1v1h-5v1h-1v-1h-2v1h-1v-1h-2v2h-1v-3h-4v1h-4v-1h-1v-1h-1v1h-1v1h-1v-1h-13v1h-2v-2h-1v1h-1z"/>
<path d="M277 852v-3h4v1h2v-1h2v1h16v-1h1v1h5v1h1v-1h1v-1h1v1h4v-2h2v-1h1v1h1v2h4v-1h1v1h2v-1h1v1h5v1h1v-2h1v1h8v-1h1v1h9v-3h1v3h5v-1h2v-2h1v3h1v-1h5v1h3v-1h1v1h5v-1h2v1h21v-3h1v3h3v-1h1v1h4v-1h6v2h1v-1h1v1h1v-1h1v-1h2v1h4v-1h1v1h4v-1h4v1h4v-1h1v-1h1v2h1v-1h7v1h4v-1h2v1h4v-1h1v1h5v-1h4v1h3v1h1v-1h1v1h1v-1h5v-2h1v2h1v-1h6v1h10v-1h3v1h7v-1h1v-1h2v1h1v1h7v-1h2v1h1v-1h1v-1h3v2h7v-1h1v1h1v-1h2v1h5v-1h1v1h1v-1h5v1h1v-1h2v-1h1v3h1v-1h3v-1h3v1h2v-1h3v1h3v-1h1v1h3v-1h2v1h3v-1h1v1h3v-1h1v1h2v-1h1v1h6v-1h1v1h1v-1h2v1h7v1h1v-1h1v-1h2v1h8v-3h1v3h1v-1h1v1h10v-5h1v4h1v1h2v-1h1v1h4v-1h1v1h5v-2h1v2h7v-1h3v1h3v-4h1v3h1v1h2v-1h6v1h3v-1h1v1h11v-1h2v-2h1v2h2v-1h1v1h1v-4h1v3h1v1h2v1h32v-1h1v1h3v-2h2v1h1v1h16v-1h2v-1h1v2h6v-1h1v1h1v-1h1v1h1v-1h3v1h3v-1h3v2h1v-1h1v1h1v-1h11v-1h1v1h4v-1h2v1h1v1h1v-1h3v-1h2v1h1v-1h3v1h1v1h1v-1h3v-1h1v1h6v-1h1v1h1v-1h1v1h1v-1h3v1h1v-1h1v1h1v-1h2v-1h2v-2h1v2h1v1h1v1h3v-1h1v1h7v-1h1v2h1v-1h4v-1h6v1h2v-1h3v-1h1v1h2v2h1v-1h1v-1h1v1h10v-1h1v1h8v-1h1v1h11v-1h1v1h9v1h1v-1h1v-1h2v1h3v-1h2v1h3v-1h1v1h9v1h1v-1h1v-1h2v1h7v-1h2v1h1v-2h1v1h1v-1h1v2h5v-1h1v-1h1v1h1v1h2v-1h2v-2h1v3h5v-1h1v1h3v-2h1v-1h1v3h4v-1h1v1h2v-1h2v1h10v-1h1v1h4v-1h2v-1h1v1h2v-1h1v2h6v-1h1v1h3v-1h1v-1h1v2h10v-1h1v1h4v-1h1v1h10v-1h4v1h1v-2h1v2h3v-1h6v1h2v-1h2v1h1v-1h5v1h1v-1h1v1h6v-1h3v1h1v-1h2v-1h4v1h1v1h1v-1h5v1h2v-1h1v1h6v1h1v-2h3v1h1v-1h2v1h1v-1h1v1h3v-1h1v1h7v-1h1v1h2v-1h1v1h2v-1h1v1h1v-1h1v1h1v-1h2v2h1v-1h1v-1h1v1h3v-1h1v-1h1v1h1v1h1v-1h1v1h1v-2h1v2h12v-1h4v1h5v-1h2v1h3v-1h1v1h5v-1h1v1h6v-1h1v1h3v-1h3v-1h1v1h4v-1h1v2h1v-1h1v1h1v-1h1v-1h2v2h5v-1h1v1h9v-1h1v2h1v-1h2v-1h1v1h1v-1h4v-1h1v2h1v-1h3v1h5v-1h1v2h1v-1h9v-1h3v1h1v-1h1v1h4v-1h1v1h1v-1h2v-1h1v1h1v-4h1v3h2v2h12v-4h1v4h6v-1h4v1h5v-1h1v1h5v-1h5v-1h1v1h5v1h1v1h1v-1h2v-1h1v1h1v-1h1v1h1v-1h2v2h1v-1h1v-2h1v-4h1v5h1v1h4v-2h1v2h3v-3h1v3h4v-1h1v-1h1v1h1v1h7v-1h1v1h1v-1h1v1h1v-1h1v-1h1v2h5v-1h1v1h1v-1h1v1h11v-1h1v1h10v-1h5v1h3v-1h1v1h1v-1h1v1h3v-1h1v1h4v-1h1v1h1v1h1v-1h1v-1h1v5h-1v1h-1v-1h-2v1h-3v-1h-10v1h-1v-1h-10v1h-1v-1h-5v1h-1v-1h-1v1h-1v-1h-1v1h-1v1h-1v-2h-5v1h-4v-1h-1v1h-1v-1h-17v2h-1v1h-1v-3h-9v1h-1v-1h-3v2h-1v3h-1v-3h-1v-1h-5v-1h-1v1h-1v-1h-4v1h-1v-1h-3v3h-1v-3h-9v1h-2v-1h-6v1h-1v-1h-3v1h-1v-1h-1v1h-1v3h-1v-4h-1v1h-1v-1h-7v1h-1v-1h-1v1h-1v-1h-4v2h-1v1h-3v-1h-2v-1h-1v-1h-16v1h-1v-1h-1v1h-1v-1h-3v4h-1v-4h-5v2h-1v-1h-11v-1h-5v1h-1v-1h-2v1h-1v-1h-3v1h-1v-1h-1v1h-1v-1h-2v2h-1v1h-1v-1h-1v-2h-1v1h-3v-1h-1v1h-1v-1h-6v1h-3v-1h-2v1h-1v-1h-1v1h-1v-1h-2v3h-1v-3h-7v1h-1v1h-1v-1h-2v-1h-3v1h-1v-1h-19v1h-1v-1h-1v2h-3v-2h-1v1h-1v-1h-1v1h-1v-1h-2v4h-1v-4h-18v1h-1v-1h-1v1h-1v-1h-1v1h-3v-1h-5v2h-1v-2h-4v1h-1v-1h-2v1h-1v-1h-4v1h-3v1h-1v1h-1v-1h-4v-1h-1v-1h-2v2h-1v-2h-2v1h-2v2h-1v-3h-9v1h-3v-1h-2v1h-1v-1h-1v2h-1v1h-1v-1h-2v-2h-2v1h-1v-1h-3v1h-3v-1h-11v1h-1v-1h-10v1h-2v-1h-3v1h-2v-1h-9v1h-1v1h-2v4h-1v-4h-2v-2h-5v3h-1v-3h-1v1h-2v-1h-1v1h-1v-1h-2v1h-1v-1h-8v1h-1v1h-1v-2h-5v1h-1v-1h-6v1h-1v1h-1v-1h-1v-1h-8v1h-1v-1h-1v1h-1v-1h-1v1h-1v-1h-1v2h-1v-2h-7v3h-1v-1h-1v-2h-3v1h-1v-1h-2v1h-2v-1h-2v1h-1v-1h-1v1h-1v-1h-2v2h-2v-2h-5v1h-4v-1h-1v1h-1v-1h-10v1h-1v1h-1v-1h-1v-1h-1v2h-1v-2h-3v1h-1v-1h-5v1h-1v-1h-7v1h-1v-1h-7v2h-2v1h-1v-1h-2v-1h-1v-1h-12v1h-1v-1h-4v1h-4v-1h-4v2h-1v1h-1v1h-1v-2h-1v1h-1v-1h-1v-2h-1v1h-1v2h-1v-3h-11v1h-1v-1h-8v2h-3v-1h-1v-1h-6v1h-1v-1h-4v1h-1v-1h-3v1h-1v-1h-2v1h-1v-1h-5v1h-3v-1h-2v1h-3v-1h-8v1h-1v-1h-1v1h-1v-1h-6v1h-1v-1h-1v1h-1v-1h-11v1h-1v-1h-2v3h-2v-1h-1v-2h-11v1h-1v-1h-2v2h-1v-2h-1v1h-1v-1h-3v1h-2v-1h-4v1h-5v-1h-1v1h-2v-1h-1v1h-1v1h-2v1h-1v1h-1v-1h-3v-1h-1v-2h-1v1h-1v-1h-1v1h-1v-1h-2v1h-1v-1h-1v1h-1v-1h-3v1h-1v-1h-2v1h-1v-1h-5v1h-1v-1h-2v1h-1v-1h-2v1h-2v-1h-6v1h-2v-1h-4v1h-1v-1h-3v1h-1v-1h-3v1h-2v-1h-2v1h-1v-1h-2v4h-1v-3h-1v-1h-5v1h-1v-1h-9v2h-1v-2h-8v1h-1v1h-1v-2h-3v1h-2v-1h-3v1h-2v1h-1v-2h-2v1h-1v-1h-2v1h-1v-1h-5v1h-1v-1h-3v1h-2v-1h-4v1h-2v1h-4v-1h-1v-1h-1v1h-2v-1h-9v1h-1v-1h-4v1h-1v-1h-3v1h-1v-1h-5v1h-1v-1h-2v1h-1v-1h-4v3h-3v-3h-2v1h-1v-1h-6v1h-1v-1h-1v2h-4v-2h-1v1h-2v-1h-1v1h-2v-1h-4v2h-1v-1h-1v-1h-4v1h-2v-1h-5v1h-1v-1h-2v1h-1v1h-1v-2h-1v1h-1v-1h-1v1h-3v-1h-9v1h-3v-1h-2v1h-1v-1h-5v1h-2v-1h-2v2h-8v-2h-7v1h-1v-1h-1v1h-1v-1h-1v1h-1v-1h-1v1h-2v-1h-10v1h-2v1h-2v-2h-4v1h-1v-1h-2v1h-2v-1h-5v1h-1v-1h-5v1h-1v-1h-6v1h-2v-1h-2v1h-1v-1h-3v1h-3v-1h-3v1h-1v-1h-1v1h-1v-1h-4v1h-1v-1h-6v1h-3v2h-1v-2h-1v-1h-5v5h-1v-5h-1v1h-1v-1h-5v2h-1v-1h-3v-1h-9v1h-1v-1h-5v2h-1v1h-2v-1h-1v-2h-10v1h-3v-1h-11v1h-2v-1h-3v1h-1v-1h-7z"/>
<path d="M277 882v-3h3v1h1v-1h4v1h1v-1h2v-1h1v2h1v-1h2v1h1v1h1v-1h8v-1h2v1h4v-1h2v1h2v-1h2v1h1v-1h1v1h1v-1h1v-3h1v3h1v1h4v1h1v-3h1v1h2v1h7v-1h1v1h5v-1h3v1h3v-1h2v1h2v-1h1v1h2v-1h9v1h3v-2h1v2h1v1h1v-1h21v-3h1v3h9v-1h2v1h1v-1h1v1h1v-4h1v4h7v-1h1v-1h2v1h1v1h7v-1h2v1h7v-1h2v1h10v-1h2v1h3v1h1v-2h1v1h1v-1h2v-3h1v2h1v-1h1v1h2v1h1v1h3v-1h1v1h2v-1h1v1h1v-1h2v2h1v-2h1v1h16v1h1v-2h1v1h5v-1h3v1h3v-1h2v1h1v-1h2v1h2v-1h3v1h1v-1h2v1h11v-1h1v1h1v-1h1v1h1v-1h1v1h2v-1h1v1h4v-1h4v1h5v-1h1v-1h1v1h1v1h10v-1h5v1h1v-1h1v1h1v-1h1v1h1v1h1v-1h8v-1h1v1h2v-2h1v1h1v1h3v-1h1v1h4v-1h1v1h3v-1h1v-1h2v1h1v1h1v-1h2v1h7v-1h1v1h1v-1h1v1h2v1h1v-2h1v1h7v1h1v-2h3v1h1v-1h1v1h2v-1h1v1h1v-6h1v6h2v1h1v-1h10v-1h2v-1h1v1h2v2h1v-1h1v-1h3v1h4v-1h1v1h7v-1h4v1h3v-3h1v3h15v1h1v-1h3v-2h1v-1h1v3h2v-1h1v1h5v-1h1v1h4v-1h1v1h1v-1h2v1h1v-1h1v1h6v-1h1v-1h1v2h4v-1h1v1h3v-1h1v1h4v1h1v-1h8v-1h1v1h1v-1h2v-2h1v1h1v-1h1v2h1v1h12v-1h1v-2h1v1h1v2h7v-1h1v1h1v-1h1v1h2v-1h1v1h3v-1h2v1h5v-1h1v-5h1v5h1v1h1v1h1v-1h1v-1h1v1h3v-1h1v1h2v1h1v-2h1v1h2v-1h1v1h2v-4h1v4h1v-1h1v1h3v-1h2v1h1v-1h2v1h5v-1h2v1h1v-1h1v-1h5v1h2v1h5v-1h1v1h2v-1h1v-1h1v2h5v-1h2v1h7v-1h1v1h2v-2h1v2h8v-1h1v1h3v-1h1v1h3v-2h2v2h4v-2h1v1h1v1h5v-1h1v1h4v-1h1v1h3v-1h1v1h3v-1h2v1h3v-1h1v2h1v-1h4v-1h1v1h1v-1h1v1h1v-1h1v1h3v-1h1v-5h1v5h1v1h15v-1h1v1h5v-1h2v-1h1v1h2v1h1v-1h4v1h3v-1h1v1h4v-1h3v1h1v-1h4v2h1v-1h5v-1h1v1h1v-1h1v-1h2v1h2v2h1v-1h6v1h1v-1h1v-1h3v-1h1v1h2v1h5v-1h2v1h10v-1h1v1h6v-1h1v1h1v-1h2v1h1v-1h3v1h3v-2h1v2h1v-1h5v-1h2v1h1v1h1v1h1v-1h5v-1h1v1h3v1h1v-1h1v1h1v-1h2v-1h1v1h1v-1h1v1h7v-1h1v1h2v-1h1v1h1v-1h5v1h4v-1h1v1h5v1h1v-1h3v-1h1v1h8v1h1v-1h1v-1h1v-1h1v1h1v1h3v-1h1v1h3v-1h1v1h2v-1h3v-1h1v1h1v-1h1v1h2v1h2v-1h1v1h3v-1h1v1h1v-1h2v-1h1v1h1v1h11v-2h1v2h17v-1h2v1h5v-1h2v-3h1v3h1v1h2v1h1v-1h1v-1h3v-1h1v1h2v1h2v-2h2v1h4v1h15v1h1v-1h12v-1h2v1h2v-1h2v-1h1v-1h1v2h1v1h3v-1h2v1h4v-1h2v-3h1v4h1v-2h3v2h1v1h1v-1h2v-1h1v1h1v-1h1v1h1v-1h7v1h9v-1h3v1h3v-1h2v1h16v-1h4v1h4v-1h2v-1h1v1h5v1h4v-1h2v1h3v-1h1v1h2v-1h1v-1h1v2h1v-2h1v2h2v-1h1v1h8v-1h1v1h7v-2h1v1h3v1h1v-1h2v1h5v-1h2v1h1v-2h1v2h1v-1h2v1h2v-1h1v-1h2v-2h1v2h1v1h1v1h18v5h-5v1h-1v-1h-4v-1h-1v1h-2v1h-3v-1h-2v1h-2v2h-1v-2h-3v-1h-7v1h-5v-1h-2v1h-1v-1h-4v1h-1v-1h-4v1h-1v-1h-3v1h-1v-1h-3v1h-1v-1h-2v3h-1v-3h-3v1h-1v-1h-1v1h-3v-1h-1v3h-1v-3h-1v-1h-1v1h-7v2h-1v-1h-8v-1h-1v1h-1v2h-1v-3h-3v1h-2v-1h-1v1h-1v-1h-1v1h-1v-1h-8v1h-1v1h-1v-2h-13v1h-1v-1h-5v1h-1v-1h-1v1h-1v-1h-3v1h-2v-2h-1v2h-1v-1h-1v1h-1v-1h-1v1h-2v1h-1v1h-1v-2h-1v-1h-1v1h-1v-1h-11v1h-2v2h-1v-1h-1v-1h-1v1h-1v-2h-2v1h-1v-1h-1v3h-1v-3h-3v1h-1v-1h-1v2h-1v-2h-1v4h-1v-4h-17v1h-1v-1h-1v1h-3v-1h-9v1h-1v-1h-3v1h-2v1h-1v-1h-7v-1h-11v2h-1v-1h-1v-1h-1v-1h-1v1h-16v1h-1v1h-1v-1h-1v-1h-2v1h-1v1h-1v-2h-4v1h-4v1h-2v-1h-4v-1h-5v1h-3v1h-3v-1h-2v-1h-8v1h-1v-1h-5v-1h-1v1h-6v-1h-1v1h-1v1h-1v-1h-1v1h-1v-1h-2v1h-3v-1h-2v-1h-1v2h-1v-1h-1v2h-1v-1h-4v-1h-1v1h-1v1h-1v-1h-2v-1h-2v-1h-1v1h-3v1h-2v-1h-3v1h-1v-1h-1v1h-2v1h-2v-1h-4v-1h-1v1h-3v-1h-1v-1h-1v2h-1v-1h-1v1h-1v-1h-3v1h-1v-1h-1v1h-1v-1h-4v1h-1v-1h-2v2h-1v-2h-5v-1h-2v1h-8v1h-2v3h-1v-2h-1v-1h-2v-1h-1v1h-1v-1h-3v1h-1v-1h-3v1h-2v-1h-6v1h-3v-1h-3v1h-3v-1h-1v1h-1v-1h-7v-1h-1v1h-8v1h-2v1h-1v1h-1v-3h-16v1h-1v-1h-4v2h-1v1h-1v-1h-1v-2h-1v-1h-1v2h-1v-2h-1v4h-1v-3h-2v1h-1v-1h-9v1h-2v-1h-1v1h-1v-1h-12v4h-1v-4h-1v2h-1v-1h-2v1h-1v-2h-4v2h-2v-1h-1v-1h-4v1h-3v-1h-1v1h-1v-1h-3v4h-1v-3h-1v-1h-3v1h-1v-1h-6v1h-1v-1h-2v3h-1v-3h-5v1h-1v-1h-2v-1h-2v1h-3v4h-1v-3h-3v1h-2v-1h-1v1h-1v-1h-2v-1h-3v1h-1v-1h-2v1h-1v-1h-1v1h-1v-1h-1v1h-3v-1h-3v1h-2v-1h-2v1h-1v-1h-1v1h-1v-1h-1v1h-1v-1h-1v-1h-1v1h-1v1h-1v-1h-5v1h-1v-1h-3v1h-2v-1h-1v1h-1v-1h-10v-1h-1v1h-9v1h-1v3h-1v-3h-2v-1h-7v1h-1v-1h-3v1h-1v2h-2v-1h-2v-1h-1v-1h-4v1h-2v1h-1v-1h-1v-1h-1v1h-1v-1h-1v1h-2v-1h-1v1h-1v-1h-2v1h-2v-1h-15v-1h-1v1h-9v1h-1v-1h-2v1h-2v-1h-2v4h-1v-2h-1v-2h-1v1h-1v-1h-9v1h-1v-1h-2v1h-1v-1h-9v1h-4v-1h-11v-1h-1v1h-5v1h-1v1h-1v-1h-1v-1h-5v1h-2v3h-1v-4h-1v1h-2v-1h-3v6h-1v-6h-18v1h-1v1h-1v-1h-1v-1h-1v1h-1v-1h-12v1h-1v3h-1v-3h-1v-1h-5v1h-5v-1h-1v1h-1v1h-1v-1h-3v-1h-5v1h-1v-1h-1v1h-3v-1h-2v1h-1v-1h-10v1h-3v-1h-2v1h-1v-1h-1v1h-1v3h-1v-3h-1v-1h-2v1h-3v-1h-10v1h-3v-1h-1v1h-1v-1h-14v1h-3v-1h-3v1h-1v-1h-1v1h-1v3h-1v-4h-5v1h-1v-1h-1v-1h-1v1h-1v1h-1v2h-1v-3h-2v1h-1v-1h-2v1h-1v-1h-2v-1h-1v1h-3v1h-2v-1h-7v1h-2v-1h-2v1h-1v-1h-5v1h-2v1h-2v-1h-1v1h-1v-1h-2v-1h-3v1h-1v-1h-7v1h-2v-1h-1v1h-2v2h-1v-3h-2v1h-2v-1h-10v1h-1v-1h-1v1h-2v-2h-1v2h-1v1h-2v-1h-1v-1h-7v-1h-1v1h-2v1h-1v-1h-2v-1h-1v1h-3v-1h-1v1h-11v1h-1v-1h-8v1h-1v-1h-7v3h-1v-3h-1v1h-1v-1h-1v1h-1v1h-1v-1h-5v-1h-1v1h-1v-1h-1v1h-1v-1h-8v1h-1v1h-1v-1h-1v-1h-2v-1h-1v1h-1v2h-1v-2h-5v1h-1v-1h-3v1h-3v-2h-1v1h-1v1h-1v-1h-1v2h-1v1h-1v-1h-1v-1h-1v-1h-11v1h-1v-1h-5v1h-1v-1h-2v-1h-1v2h-1v-1h-2v1h-1v1h-1v-1h-1v-1h-4v-1h-1v1h-6v1h-1z"/>
<path d="M277 913v-4h1v2h2v-1h1v1h1v-1h1v1h1v-1h1v1h6v1h1v-1h3v-1h1v1h1v1h1v-1h6v-1h1v1h2v-1h1v1h5v-2h1v-1h2v1h1v1h1v1h2v-1h1v1h13v1h1v-1h17v-1h3v1h10v1h1v-1h4v-1h1v1h3v-1h1v1h18v-1h2v1h2v-1h1v1h3v1h1v-1h6v-1h1v1h3v-1h1v1h4v-1h1v1h1v-3h1v2h1v-1h1v1h2v1h2v-1h1v1h4v-1h1v1h11v-1h1v1h5v-1h1v1h8v-1h1v1h9v-1h1v1h1v-1h1v1h1v-1h1v1h2v-1h2v-1h2v2h9v-1h2v1h1v-1h4v1h1v-1h1v1h16v1h1v-1h2v-1h1v1h1v-1h1v1h6v-1h1v1h2v-1h2v1h5v-3h1v3h5v-1h4v-2h1v2h3v2h1v-1h3v-1h2v1h10v-1h1v-3h1v4h3v-3h1v3h2v-1h1v-1h1v1h1v1h1v-1h1v1h1v-1h1v1h3v1h1v-1h2v-1h2v1h1v-1h3v-1h1v2h1v-1h1v1h6v-1h3v1h3v-1h5v1h9v-2h2v2h8v-1h1v1h1v-2h1v1h3v1h2v-1h1v1h2v-1h3v1h1v-1h1v1h3v-1h1v2h1v-1h5v-1h1v1h4v-1h6v1h1v-1h1v1h3v-1h2v1h9v-1h1v1h4v-1h2v1h3v-1h2v1h1v-2h1v1h3v1h1v-1h1v1h1v-1h1v1h3v-1h2v1h5v-2h1v-2h1v3h1v1h9v-1h2v1h9v1h1v-1h1v-1h1v1h1v-1h1v1h13v-1h2v-1h1v-1h1v2h1v1h2v-3h1v2h1v1h1v1h1v-1h1v-1h2v1h3v-2h1v1h1v-2h1v1h1v1h1v1h6v-1h1v1h1v-2h1v2h4v-1h2v1h1v-1h2v1h1v-1h2v-2h1v3h10v-1h2v-2h1v3h16v-1h2v1h5v-1h2v1h3v-1h3v1h6v1h1v-1h2v1h1v-2h2v1h1v-1h3v1h1v-1h1v1h4v-1h2v1h1v-1h2v1h1v1h1v-1h5v-1h1v1h6v-1h2v1h2v-1h3v-1h1v1h2v-2h1v3h1v-1h1v1h2v-1h2v1h3v-1h1v1h6v-1h1v1h4v-1h2v1h3v-1h2v1h5v-1h1v1h1v1h1v-1h2v1h1v-1h5v-1h1v1h1v-1h2v-1h1v1h1v-1h2v2h2v-1h2v1h7v-1h1v-3h1v2h2v1h1v1h1v-1h1v2h1v-1h7v-4h1v4h1v-1h1v1h3v1h1v-1h6v-1h4v1h1v-1h2v1h1v-1h1v1h3v-1h1v1h7v1h1v-1h1v-1h2v1h5v-1h1v1h9v-1h5v1h2v-1h2v1h3v-1h1v1h4v-1h1v1h2v1h1v-1h1v1h1v-1h1v-1h5v1h1v-1h1v1h10v-1h3v1h1v-1h1v1h3v-1h2v1h3v-3h1v3h4v-1h3v-4h1v3h2v1h2v1h3v-1h2v1h4v-1h6v-1h1v1h2v1h1v-1h2v-1h1v-3h1v4h2v1h2v-1h2v1h1v-1h1v1h3v-1h1v1h1v-1h1v1h2v-2h1v2h2v-1h1v1h4v-1h1v-3h1v4h9v1h2v-1h3v-1h3v-2h1v2h2v1h2v-1h3v1h4v-1h1v1h1v-1h1v1h1v1h1v-1h2v-1h1v1h1v-1h1v1h3v-3h1v3h1v-1h1v1h7v-1h1v1h1v-1h2v-1h1v2h3v-1h1v1h3v-1h6v1h1v-1h1v1h3v-1h1v-1h1v1h1v1h4v-3h1v2h1v1h1v-1h1v1h1v1h1v-1h5v-1h1v1h4v1h1v-1h2v-1h1v1h4v-1h7v1h4v-1h1v2h1v-1h8v1h1v-2h1v1h1v-1h3v1h3v-1h1v1h1v-1h2v1h7v-2h1v1h2v-1h1v1h2v1h1v-1h5v1h6v-2h1v1h1v1h10v1h1v-1h2v-1h2v-2h1v2h4v1h7v-1h1v1h3v-1h1v1h5v-1h2v6h-18v1h-1v-1h-2v1h-2v2h-1v-3h-10v1h-1v-1h-13v1h-1v2h-1v-3h-2v1h-1v1h-2v-1h-1v1h-1v-1h-2v-1h-1v2h-1v-1h-2v-1h-1v1h-1v-1h-1v1h-1v-1h-2v1h-1v-1h-7v1h-2v-1h-9v1h-1v-1h-4v1h-5v-1h-1v1h-2v1h-1v-1h-1v-1h-1v1h-1v-1h-1v1h-1v-2h-1v1h-3v1h-1v-1h-2v1h-2v-1h-2v1h-1v-1h-9v1h-1v1h-1v-2h-2v1h-1v-1h-3v1h-6v-1h-17v-1h-1v1h-5v1h-1v-1h-5v1h-1v-1h-5v1h-2v-1h-6v1h-3v2h-1v-2h-7v-1h-16v1h-2v-1h-3v1h-3v-1h-5v1h-1v1h-1v-1h-1v-1h-1v1h-2v1h-1v3h-1v-4h-1v-1h-2v1h-2v-1h-3v1h-2v-1h-1v1h-3v-1h-2v1h-1v-1h-8v2h-1v1h-1v-1h-1v-2h-2v3h-1v-3h-1v1h-1v-1h-12v4h-1v-3h-3v-1h-3v1h-1v-1h-3v1h-3v-1h-1v1h-1v-1h-14v1h-2v-1h-4v1h-1v-1h-4v1h-2v-1h-3v1h-2v-1h-1v-1h-1v1h-1v1h-3v-1h-1v1h-2v1h-1v-1h-5v-1h-1v1h-5v-1h-6v-1h-1v1h-6v2h-1v-2h-14v3h-1v-3h-1v1h-4v-1h-5v1h-1v1h-1v-1h-8v-1h-1v1h-1v-1h-1v1h-1v-1h-2v1h-2v-1h-2v1h-2v-1h-1v1h-1v-1h-3v-1h-1v1h-1v1h-1v-1h-1v1h-1v-1h-11v1h-1v-1h-4v3h-1v-3h-18v1h-2v1h-1v-1h-3v-1h-1v1h-1v-1h-9v2h-1v-2h-7v1h-4v1h-1v-1h-1v-1h-2v1h-1v-1h-1v1h-1v-1h-5v1h-3v-1h-4v1h-1v-1h-2v1h-1v-1h-1v1h-2v-1h-2v1h-2v-1h-1v1h-1v-1h-2v1h-1v-1h-3v1h-1v1h-1v-2h-21v1h-3v-1h-3v1h-3v-1h-1v-1h-1v1h-3v1h-3v-2h-1v1h-3v1h-4v-1h-3v2h-2v-1h-2v-1h-1v1h-1v-1h-1v1h-1v-1h-2v1h-2v-1h-4v1h-1v1h-3v-2h-1v3h-1v-3h-6v1h-1v-1h-5v-1h-1v2h-2v2h-1v-2h-1v-1h-20v1h-1v1h-1v-1h-1v-1h-8v3h-1v-3h-3v-1h-1v1h-2v1h-1v1h-2v-3h-1v1h-2v1h-1v-1h-1v1h-2v-1h-1v1h-1v-1h-3v1h-1v-1h-3v1h-1v-1h-1v1h-2v-1h-9v1h-2v-1h-4v4h-1v-3h-2v-1h-12v1h-1v-1h-13v1h-4v1h-1v-2h-1v-1h-1v1h-3v1h-1v1h-1v-2h-9v1h-1v-1h-1v1h-2v-1h-5v1h-1v-1h-1v1h-1v-1h-1v1h-2v-1h-14v1h-1v-1h-1v2h-1v-1h-1v-1h-1v1h-4v1h-1v-1h-1v-1h-1v2h-1v-2h-12v1h-1v-1h-1v1h-1v-1h-6v1h-3v2h-1v-2h-4v-1h-1v1h-1v-2h-1v2h-1v-1h-17v1h-3v-1h-8v2h-1v-1h-1v-1h-1v-1h-1v1h-2v1h-1v-1h-3v1h-1v-1h-2v1h-1v-1h-5v1h-1v-1h-1v1h-1v-1h-3v1h-1v-1h-1v4h-1v-4h-2v2h-3v-1h-3v-1h-3v2h-1v-2h-1v1h-1v-1h-1v1h-2v-1h-10v1h-1v-1h-2v-1h-1v1h-4v1h-1v-1h-2v-1h-1v1h-3v1h-1v-1h-9v1h-2v-1h-1v1h-1v-1h-1v1h-1v1h-3v-1h-1v-1h-1v1h-3v-1h-2v1h-1v-1h-1v1h-2v-1h-7v1h-2v-1h-2v1h-1v-1h-5v1h-2v-1h-1v1h-1v-1h-5v1h-2v-1h-5v1h-1v-1h-8v1h-1v-1h-11v4h-1v-3h-1v-1h-5v1h-1v-1h-3v2h-1v-2h-2v3h-1v-3h-4v-1h-1v1h-16v1h-1v-1h-1v1h-1v1h-3v-2h-1v1h-1v-1h-3v1h-2v-1h-4v1h-1v-1h-1v-1h-1v1h-5v1h-1v-1h-1v1h-5v-1h-1v2h-1v-1h-3v-1h-1v1h-1v-1h-1v1h-1v-1h-1z"/>
</g>
<g font-family="Liberation Sans, sans-serif" font-size="13" fill="#000" text-anchor="middle">
<text x="352.5" y="178">02</text><text x="352.5" y="960">02</text>
<text x="427.5" y="178">04</text><text x="427.5" y="960">04</text>
<text x="502.5" y="178">06</text><text x="502.5" y="960">06</text>
<text x="577.5" y="178">08</text><text x="577.5" y="960">08</text>
<text x="652.5" y="178">10</text><text x="652.5" y="960">10</text>
<text x="727.5" y="178">12</text><text x="727.5" y="960">12</text>
<text x="802.5" y="178">14</text><text x="802.5" y="960">14</text>
<text x="876.5" y="178">16</text><text x="876.5" y="960">16</text>
<text x="951.5" y="178">18</text><text x="951.5" y="960">18</text>
<text x="1026.5" y="178">20</text><text x="1026.5" y="960">20</text>
<text x="1101.5" y="178">22</text><text x="1101.5" y="960">22</text>
<text x="1176.5" y="178">24</text><text x="1176.5" y="960">24</text>
<text x="1251.5" y="178">26</text><text x="1251.5" y="960">26</text>
<text x="1326.5" y="178">28</text><text x="1326.5" y="960">28</text>
</g>
<g font-family="Liberation Sans, sans-serif" font-size="13" fill="#000">
<text x="1407.5" y="220">12:30</text>
<text x="1407.5" y="251">13:00</text>
<text x="1407.5" y="281">13:30</text>
<text x="1407.5" y="311">14:00</text>
<text x="1407.5" y="342">14:30</text>
<text x="1407.5" y="372">15:00</text>
<text x="1407.5" y="402">15:30</text>
<text x="1407.5" y="433">16:00</text>
<text x="1407.5" y="463">16:30</text>
<text x="1407.5" y="493">17:00</text>
<text x="1407.5" y="524">17:30</text>
<text x="1407.5" y="554">18:00</text>
<text x="1407.5" y="584">18:30</text>
<text x="1407.5" y="614">19:00</text>
<text x="1407.5" y="645">19:30</text>
<text x="1407.5" y="675">20:00</text>
<text x="1407.5" y="705">20:30</text>
<text x="1407.5" y="736">21:00</text>
<text x="1407.5" y="766">21:30</text>
<text x="1407.5" y="796">22:00</text>
<text x="1407.5" y="827">22:30</text>
<text x="1407.5" y="857">23:00</text>
<text x="1407.5" y="887">23:30</text>
<text x="1407.5" y="918">24:00</text>
</g>
<text x="839.5" y="141.5" font-family="Liberation Sans, sans-serif" font-size="21.45" text-anchor="middle">Séismographe QCQ (CGC/GSC)</text>
<text x="839.5" y="1001" font-family="Liberation Sans, sans-serif" font-size="18.25" text-anchor="middle">Minutes écoulées</text>
<text x="1405" y="191.5" font-family="Liberation Sans, sans-serif" font-size="18.3" fill="#ff0000">UTC</text>
<g id="logo">
<defs><clipPath id="shc"><path d="M1300.5 114.5H1332.6V146.5Q1332.6 151.4 1327.5 151.4H1320.6L1316.5 155.3L1312.4 151.4H1305.6Q1300.5 151.4 1300.5 146.5Z"/></clipPath></defs>
<path d="M1300.5 114.5H1332.6V146.5Q1332.6 151.4 1327.5 151.4H1320.6L1316.5 155.3L1312.4 151.4H1305.6Q1300.5 151.4 1300.5 146.5Z" fill="#e31d23"/>
<g clip-path="url(#shc)">
<rect x="1313.3" y="114" width="6.2" height="42" fill="#ffc60b"/>
<rect x="1300" y="129.5" width="33" height="6.6" fill="#ffc60b"/>
</g>
<path d="M1300.5 114.5H1332.6V146.5Q1332.6 151.4 1327.5 151.4H1320.6L1316.5 155.3L1312.4 151.4H1305.6Q1300.5 151.4 1300.5 146.5Z" fill="none" stroke="#8e1b1e" stroke-width="0.7"/>
<g fill="#1a8fe6">
<circle cx="1316.4" cy="122.3" r="2.2"/><circle cx="1307.2" cy="132.9" r="2.2"/><circle cx="1316.4" cy="132.9" r="2.2"/><circle cx="1325.5" cy="132.9" r="2.2"/><circle cx="1316.4" cy="143.2" r="2.2"/>
</g>
<g fill="#e6eeee">
<circle cx="1304.2" cy="118.6" r="1.7"/><rect x="1303.5" y="118.9" width="1.4" height="2.6"/>
<circle cx="1304.2" cy="125.2" r="1.7"/><rect x="1303.5" y="125.5" width="1.4" height="2.6"/>
<circle cx="1304.2" cy="138.9" r="1.7"/><rect x="1303.5" y="139.2" width="1.4" height="2.6"/>
<circle cx="1304.2" cy="146.0" r="1.7"/><rect x="1303.5" y="146.3" width="1.4" height="2.6"/>
<circle cx="1310.0" cy="118.6" r="1.7"/><rect x="1309.3" y="118.9" width="1.4" height="2.6"/>
<circle cx="1310.0" cy="125.2" r="1.7"/><rect x="1309.3" y="125.5" width="1.4" height="2.6"/>
<circle cx="1310.0" cy="138.9" r="1.7"/><rect x="1309.3" y="139.2" width="1.4" height="2.6"/>
<circle cx="1310.0" cy="146.0" r="1.7"/><rect x="1309.3" y="146.3" width="1.4" height="2.6"/>
<circle cx="1322.8" cy="118.6" r="1.7"/><rect x="1322.1" y="118.9" width="1.4" height="2.6"/>
<circle cx="1322.8" cy="125.2" r="1.7"/><rect x="1322.1" y="125.5" width="1.4" height="2.6"/>
<circle cx="1322.8" cy="138.9" r="1.7"/><rect x="1322.1" y="139.2" width="1.4" height="2.6"/>
<circle cx="1322.8" cy="146.0" r="1.7"/><rect x="1322.1" y="146.3" width="1.4" height="2.6"/>
<circle cx="1328.6" cy="118.6" r="1.7"/><rect x="1327.9" y="118.9" width="1.4" height="2.6"/>
<circle cx="1328.6" cy="125.2" r="1.7"/><rect x="1327.9" y="125.5" width="1.4" height="2.6"/>
<circle cx="1328.6" cy="138.9" r="1.7"/><rect x="1327.9" y="139.2" width="1.4" height="2.6"/>
<circle cx="1328.6" cy="146.0" r="1.7"/><rect x="1327.9" y="146.3" width="1.4" height="2.6"/>
</g>
<text x="1338.7" y="126.8" font-family="Liberation Sans, sans-serif" font-size="11.2" fill="#1c1c1c" textLength="62.6" lengthAdjust="spacingAndGlyphs">UNIVERSITÉ</text>
<text x="1338.4" y="145.5" font-family="Liberation Sans, sans-serif" font-size="24.8" fill="#1c1c1c" textLength="63" lengthAdjust="spacingAndGlyphs">LAVAL</text>
</g>
<g id="icons">
<g stroke="#f4f4f4" stroke-width="1.25" fill="none" stroke-linecap="round" stroke-linejoin="round">
<path d="M123.6 5.8V8L123.2 9.8L121.5 10.8L119.5 11.5L117.5 11.9"/>
<path d="M123.2 9.8L124 11.8L125 13.6L123.4 15.4L122.9 16.6L122.6 18.8L122.3 20"/>
<path d="M125 13.6L126.8 12.6L128.6 11.9L130.4 12.8L132.4 13.3M132.5 11.7V14.4"/>
<g fill="#f4f4f4" stroke="none"><circle cx="123.6" cy="6.3" r="1"/><circle cx="123.2" cy="9.8" r="1.1"/><circle cx="117.7" cy="11.9" r="1.1"/><circle cx="125" cy="13.6" r="1.1"/><circle cx="128.6" cy="11.9" r="1.1"/><circle cx="122.9" cy="16.2" r="1.1"/><rect x="120.9" y="18.9" width="3.2" height="2.1" rx="0.6"/></g>
</g>
<g stroke="#f0f0f0" stroke-width="1.15" fill="none" stroke-linejoin="round">
<path d="M904.5 17.5C905.6 15.6 905.3 13.2 905.5 11.4C905.8 8.7 907.3 7.5 909.1 7.5C911 7.5 912.3 8.7 912.7 11.4C913 13.5 913.4 15.6 914.9 17.5Z"/>
<path d="M902.6 19.7L915.8 7.2" stroke="#131313" stroke-width="3.2"/>
<path d="M902.6 19.7L915.8 7.2" stroke-width="1.25"/>
</g>
<path d="M906.9 19.2H911.2Q911.2 21.1 909.05 21.1Q906.9 21.1 906.9 19.2Z" fill="#f0f0f0"/>
<g fill="#f4f4f4">
<rect x="1596" y="5.8" width="5.3" height="4" rx="0.7"/>
<rect x="1590.8" y="14.9" width="5.5" height="4.4" rx="0.7"/>
<rect x="1600.8" y="14.9" width="5.5" height="4.4" rx="0.7"/>
<path d="M1598.1 9.5h1.1v2.5h5v3h-1.1v-1.9h-8.9v1.9h-1.1v-3h5z"/>
<path d="M1619.9 10.1H1622.6L1627.2 6.1V19.8L1622.6 16H1619.9Z"/>
</g>
<path d="M1629 10.2Q1631.6 13 1629 15.9" stroke="#f4f4f4" stroke-width="1.3" fill="none"/>
<path d="M1631.3 7.8Q1636.2 13 1631.3 18.2" stroke="#6e6e6e" stroke-width="1.2" fill="none"/>
<path d="M1651.3 7.3A6.1 6.1 0 1 0 1657.7 7.3M1654.5 5.8V12.6" stroke="#f4f4f4" stroke-width="1.25" fill="none"/>
<g stroke="#3a3a3a" stroke-width="1.1" fill="none">
<path d="M1590 47.3H1598"/>
<rect x="1624.5" y="43.4" width="5" height="5.2"/>
<path d="M1626.6 41.5H1631.7V46.9" stroke="#8a8a8a"/>
<path d="M1658.2 41.2L1665.9 48.8M1665.9 41.2L1658.2 48.8" stroke-width="1.2"/>
</g>
</g>
</svg>
</body>
</html>
